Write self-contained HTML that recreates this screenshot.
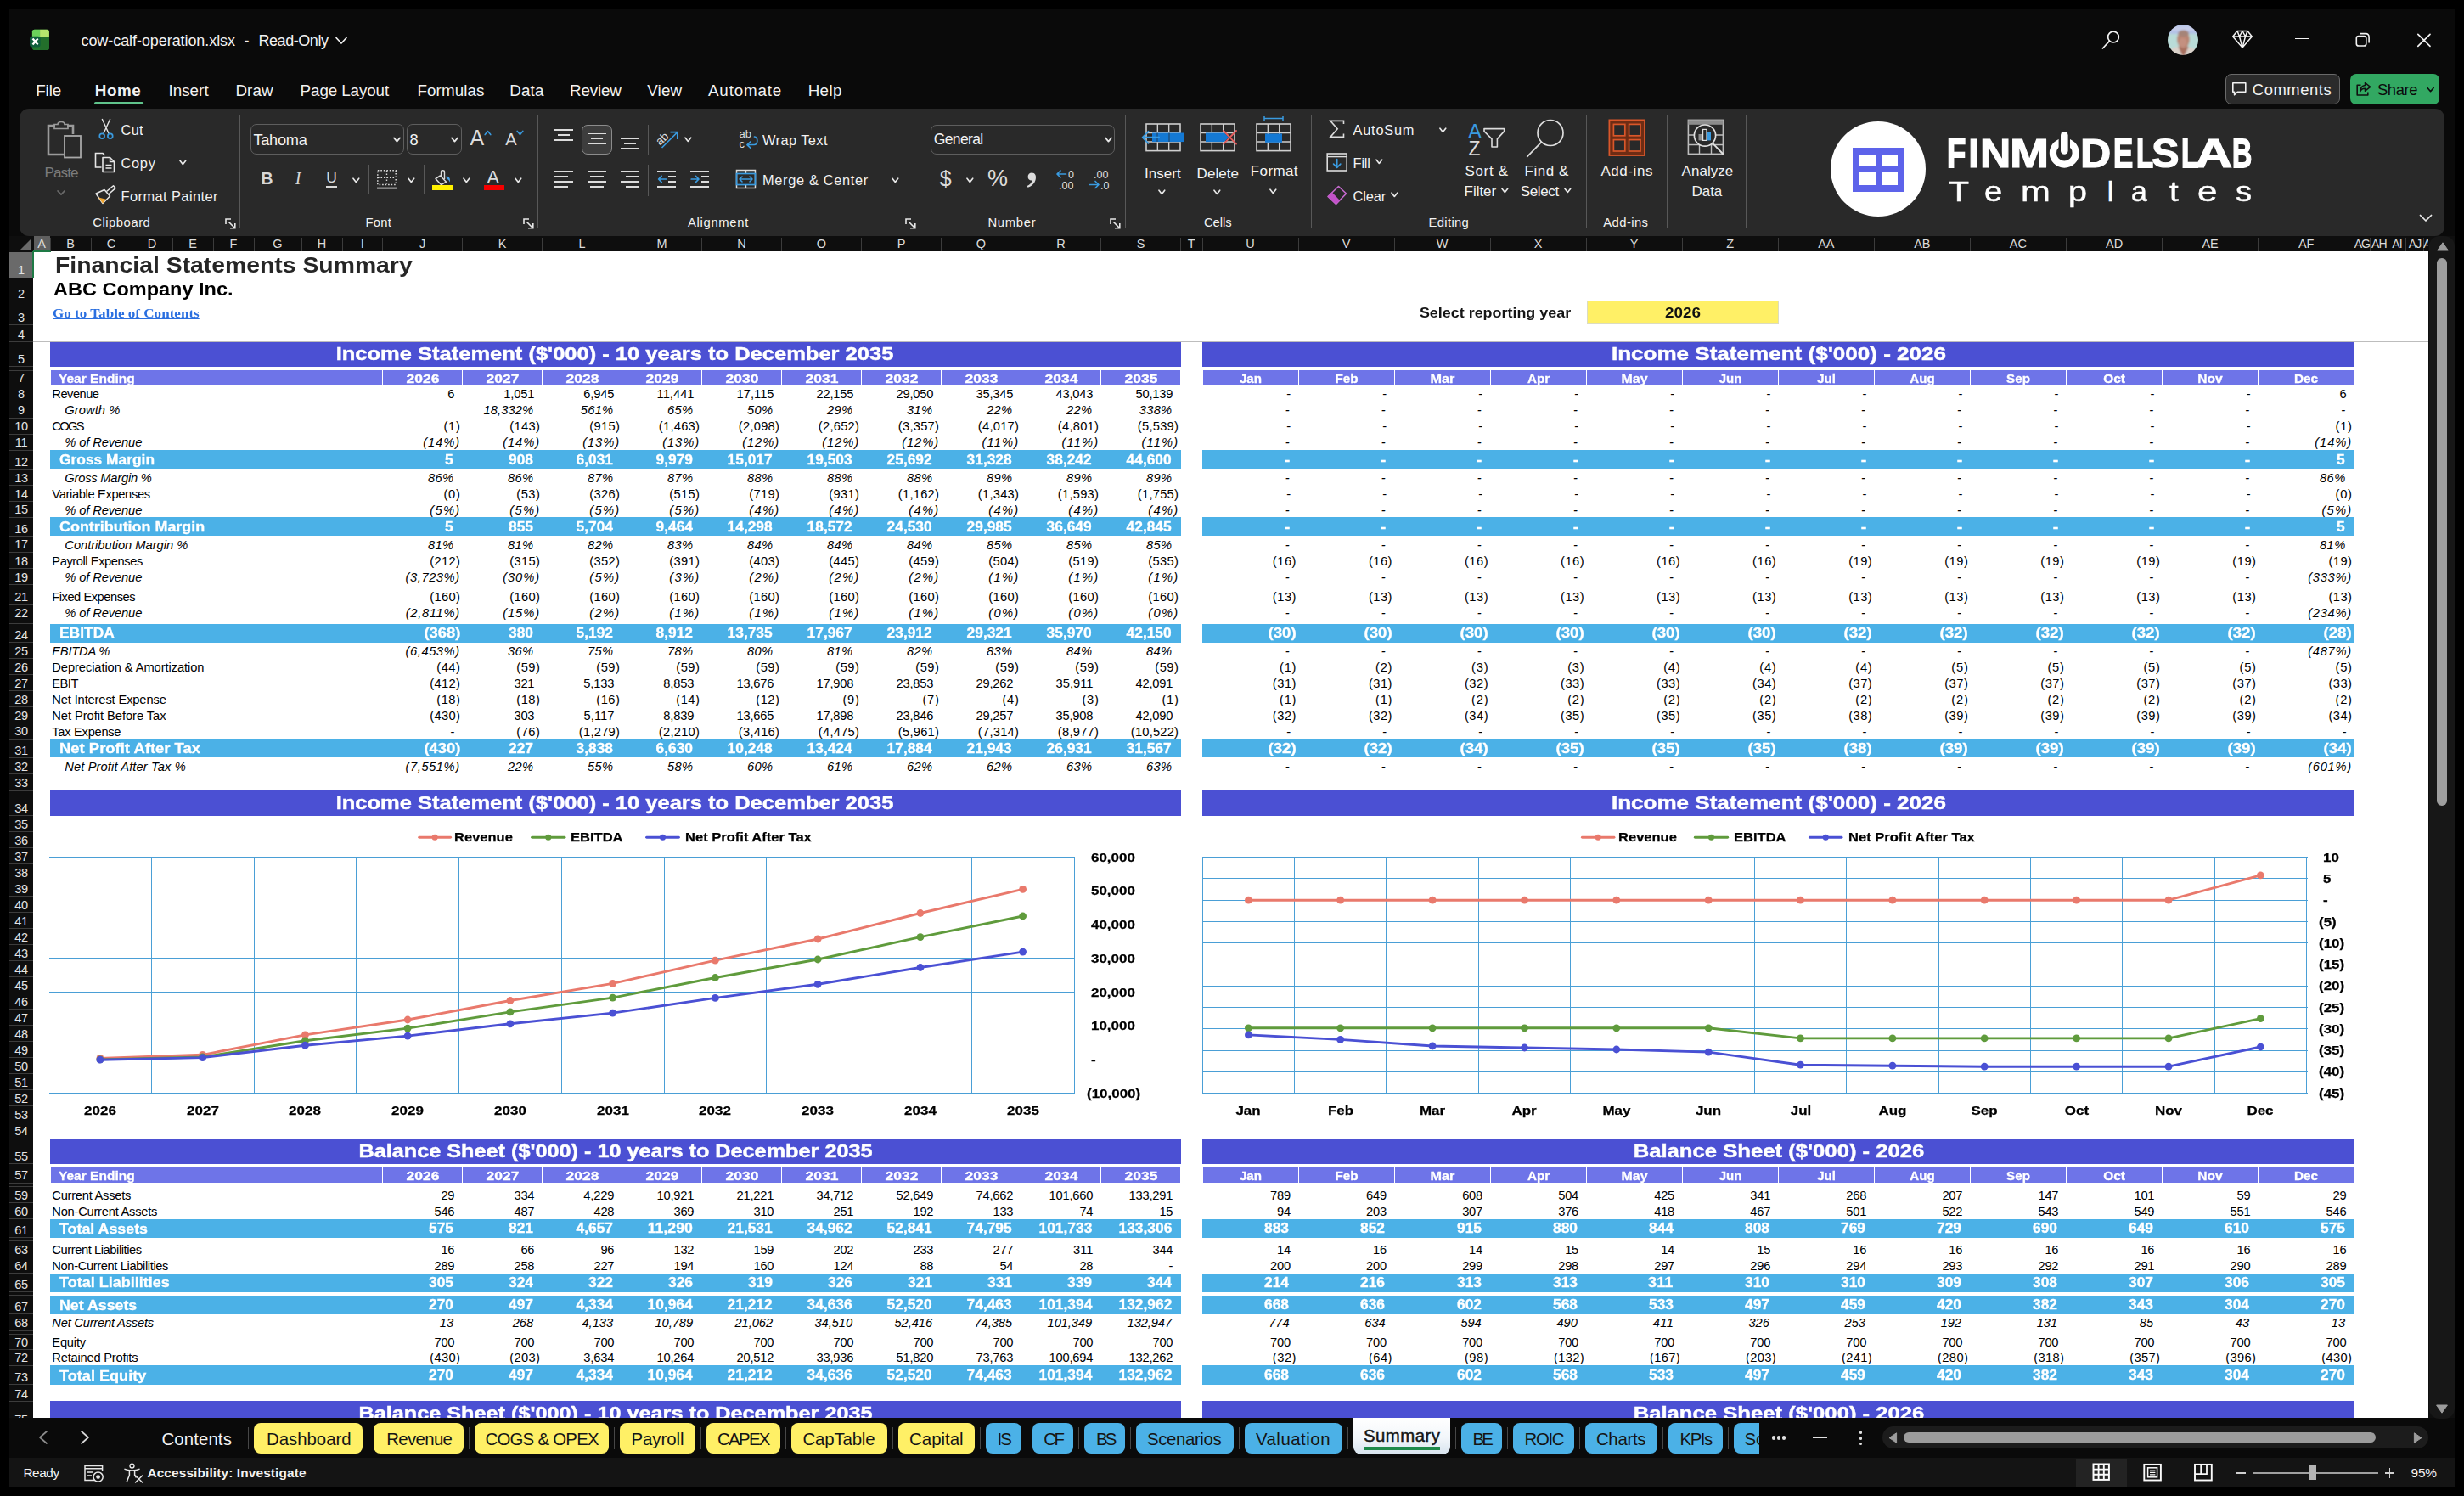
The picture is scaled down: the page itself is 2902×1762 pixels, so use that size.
<!DOCTYPE html><html><head><meta charset="utf-8"><title>x</title><style>
*{box-sizing:border-box}
html,body{margin:0;padding:0}
body{width:2902px;height:1762px;background:#000;position:relative;overflow:hidden;font-family:"Liberation Sans",sans-serif;}
div,span,i,b,u,s{position:absolute;white-space:nowrap;font-style:normal;font-weight:normal;text-decoration:none}
.bx{position:absolute}
.t{font-size:14.7px;line-height:14.7px;color:#000}
.ti{font-size:14.7px;line-height:14.7px;color:#000;font-style:italic}
.tb{font-size:15.6px;line-height:15.6px;color:#fff;font-weight:bold;-webkit-text-stroke:.3px #fff}
.tl{font-size:16.5px;line-height:16.5px;color:#fff;font-weight:bold;-webkit-text-stroke:.3px #fff}
.R{transform-origin:right center}
.L{transform-origin:left center}
.C{transform-origin:center center}
.hd{font-size:15px;line-height:15px;color:#fff;font-weight:bold;-webkit-text-stroke:.3px #fff;transform-origin:center center;text-align:center}
.bn{font-size:21.8px;line-height:21.8px;color:#fff;font-weight:bold;-webkit-text-stroke:.45px #fff;text-align:center;transform-origin:center center}
.rn{font-size:14.5px;line-height:14.5px;color:#e4e4e4;width:28px;left:11px;text-align:center;letter-spacing:-0.3px}
.cl{font-size:14.5px;line-height:14.5px;color:#dcdcdc;text-align:center;top:280.4px}
.ax{font-size:14.5px;line-height:14.5px;color:#000;font-weight:bold;transform:scaleX(1.14);-webkit-text-stroke:.25px #000}
.ui{color:#fff;font-size:18px;line-height:18px}
</style></head><body>
<div style="left:11px;top:11px;width:2880px;height:1740px;background:#0a0a0a;"></div>
<div style="left:39px;top:296px;width:2821px;height:1374px;background:#fff;"></div>
<div style="left:58.5px;top:402.4px;width:1332px;height:29.3px;background:#4b50d3;"></div>
<div style="left:1416px;top:402.4px;width:1356.5px;height:29.3px;background:#4b50d3;"></div>
<div class="bn" style="top:405.95px;left:274.30px;width:900px;text-align:center;transform:scaleX(1.170);">Income Statement ($'000) - 10 years to December 2035</div>
<div class="bn" style="top:405.95px;left:1644.90px;width:900px;text-align:center;transform:scaleX(1.195);">Income Statement ($'000) - 2026</div>
<div style="left:59.5px;top:436.2px;width:390px;height:17.7px;background:#6e74e8;"></div>
<div class="hd" style="top:437.80px;left:69.30px;transform-origin:left center;transform:scaleX(1.034);">Year Ending</div>
<div style="left:451.3px;top:436.2px;width:92.7px;height:17.7px;background:#6e74e8;"></div>
<div class="hd" style="top:437.80px;left:453.00px;width:90px;text-align:center;transform:scaleX(1.164);">2026</div>
<div style="left:545.3px;top:436.2px;width:92.7px;height:17.7px;background:#6e74e8;"></div>
<div class="hd" style="top:437.80px;left:547.00px;width:90px;text-align:center;transform:scaleX(1.164);">2027</div>
<div style="left:639.3px;top:436.2px;width:92.7px;height:17.7px;background:#6e74e8;"></div>
<div class="hd" style="top:437.80px;left:641.00px;width:90px;text-align:center;transform:scaleX(1.164);">2028</div>
<div style="left:733.3px;top:436.2px;width:92.7px;height:17.7px;background:#6e74e8;"></div>
<div class="hd" style="top:437.80px;left:735.00px;width:90px;text-align:center;transform:scaleX(1.164);">2029</div>
<div style="left:827.3px;top:436.2px;width:92.7px;height:17.7px;background:#6e74e8;"></div>
<div class="hd" style="top:437.80px;left:829.00px;width:90px;text-align:center;transform:scaleX(1.164);">2030</div>
<div style="left:921.3px;top:436.2px;width:92.7px;height:17.7px;background:#6e74e8;"></div>
<div class="hd" style="top:437.80px;left:923.00px;width:90px;text-align:center;transform:scaleX(1.164);">2031</div>
<div style="left:1015.3px;top:436.2px;width:92.7px;height:17.7px;background:#6e74e8;"></div>
<div class="hd" style="top:437.80px;left:1017.00px;width:90px;text-align:center;transform:scaleX(1.164);">2032</div>
<div style="left:1109.3px;top:436.2px;width:92.7px;height:17.7px;background:#6e74e8;"></div>
<div class="hd" style="top:437.80px;left:1111.00px;width:90px;text-align:center;transform:scaleX(1.164);">2033</div>
<div style="left:1203.3px;top:436.2px;width:92.7px;height:17.7px;background:#6e74e8;"></div>
<div class="hd" style="top:437.80px;left:1205.00px;width:90px;text-align:center;transform:scaleX(1.164);">2034</div>
<div style="left:1297.3px;top:436.2px;width:92.7px;height:17.7px;background:#6e74e8;"></div>
<div class="hd" style="top:437.80px;left:1299.00px;width:90px;text-align:center;transform:scaleX(1.164);">2035</div>
<div style="left:1416.8px;top:436.2px;width:111.75px;height:17.7px;background:#6e74e8;"></div>
<div class="hd" style="top:437.80px;left:1422.53px;width:100px;text-align:center;transform:scaleX(1.009);">Jan</div>
<div style="left:1529.85px;top:436.2px;width:111.75px;height:17.7px;background:#6e74e8;"></div>
<div class="hd" style="top:437.80px;left:1535.57px;width:100px;text-align:center;transform:scaleX(1.016);">Feb</div>
<div style="left:1642.9px;top:436.2px;width:111.75px;height:17.7px;background:#6e74e8;"></div>
<div class="hd" style="top:437.80px;left:1648.62px;width:100px;text-align:center;transform:scaleX(1.083);">Mar</div>
<div style="left:1755.95px;top:436.2px;width:111.75px;height:17.7px;background:#6e74e8;"></div>
<div class="hd" style="top:437.80px;left:1761.67px;width:100px;text-align:center;transform:scaleX(1.015);">Apr</div>
<div style="left:1869px;top:436.2px;width:111.75px;height:17.7px;background:#6e74e8;"></div>
<div class="hd" style="top:437.80px;left:1874.72px;width:100px;text-align:center;transform:scaleX(1.063);">May</div>
<div style="left:1982.05px;top:436.2px;width:111.75px;height:17.7px;background:#6e74e8;"></div>
<div class="hd" style="top:437.80px;left:1987.77px;width:100px;text-align:center;transform:scaleX(1.001);">Jun</div>
<div style="left:2095.1px;top:436.2px;width:111.75px;height:17.7px;background:#6e74e8;"></div>
<div class="hd" style="top:437.80px;left:2100.82px;width:100px;text-align:center;transform:scaleX(0.998);">Jul</div>
<div style="left:2208.15px;top:436.2px;width:111.75px;height:17.7px;background:#6e74e8;"></div>
<div class="hd" style="top:437.80px;left:2213.88px;width:100px;text-align:center;transform:scaleX(1.005);">Aug</div>
<div style="left:2321.2px;top:436.2px;width:111.75px;height:17.7px;background:#6e74e8;"></div>
<div class="hd" style="top:437.80px;left:2326.93px;width:100px;text-align:center;transform:scaleX(1.012);">Sep</div>
<div style="left:2434.25px;top:436.2px;width:111.75px;height:17.7px;background:#6e74e8;"></div>
<div class="hd" style="top:437.80px;left:2439.98px;width:100px;text-align:center;transform:scaleX(1.028);">Oct</div>
<div style="left:2547.3px;top:436.2px;width:111.75px;height:17.7px;background:#6e74e8;"></div>
<div class="hd" style="top:437.80px;left:2553.03px;width:100px;text-align:center;transform:scaleX(1.041);">Nov</div>
<div style="left:2660.35px;top:436.2px;width:111.75px;height:17.7px;background:#6e74e8;"></div>
<div class="hd" style="top:437.80px;left:2666.08px;width:100px;text-align:center;transform:scaleX(1.024);">Dec</div>
<div class="t" style="top:457.26px;left:61.30px;letter-spacing:-0.51px;">Revenue</div>
<div class="t" style="top:457.26px;right:2366.76px;letter-spacing:-0.26px;">6</div>
<div class="t" style="top:457.26px;right:2272.64px;letter-spacing:-0.14px;">1,051</div>
<div class="t" style="top:457.26px;right:2178.64px;letter-spacing:-0.14px;">6,945</div>
<div class="t" style="top:457.26px;right:2084.48px;letter-spacing:0.02px;">11,441</div>
<div class="t" style="top:457.26px;right:1990.48px;letter-spacing:0.02px;">17,115</div>
<div class="t" style="top:457.26px;right:1896.66px;letter-spacing:-0.16px;">22,155</div>
<div class="t" style="top:457.26px;right:1802.66px;letter-spacing:-0.16px;">29,050</div>
<div class="t" style="top:457.26px;right:1708.66px;letter-spacing:-0.16px;">35,345</div>
<div class="t" style="top:457.26px;right:1614.66px;letter-spacing:-0.16px;">43,043</div>
<div class="t" style="top:457.26px;right:1520.66px;letter-spacing:-0.16px;">50,139</div>
<div class="t" style="top:457.26px;right:1381.58px;letter-spacing:0.37px;">-</div>
<div class="t" style="top:457.26px;right:1268.53px;letter-spacing:0.37px;">-</div>
<div class="t" style="top:457.26px;right:1155.48px;letter-spacing:0.37px;">-</div>
<div class="t" style="top:457.26px;right:1042.43px;letter-spacing:0.37px;">-</div>
<div class="t" style="top:457.26px;right:929.38px;letter-spacing:0.37px;">-</div>
<div class="t" style="top:457.26px;right:816.33px;letter-spacing:0.37px;">-</div>
<div class="t" style="top:457.26px;right:703.28px;letter-spacing:0.37px;">-</div>
<div class="t" style="top:457.26px;right:590.23px;letter-spacing:0.37px;">-</div>
<div class="t" style="top:457.26px;right:477.18px;letter-spacing:0.37px;">-</div>
<div class="t" style="top:457.26px;right:364.13px;letter-spacing:0.37px;">-</div>
<div class="t" style="top:457.26px;right:251.08px;letter-spacing:0.37px;">-</div>
<div class="t" style="top:457.26px;right:138.66px;letter-spacing:-0.26px;">6</div>
<div class="ti" style="top:476.26px;left:76.30px;letter-spacing:0.08px;">Growth %</div>
<div class="ti" style="top:476.26px;right:2273.80px;letter-spacing:0.10px;">18,332%</div>
<div class="ti" style="top:476.26px;right:2179.67px;letter-spacing:0.23px;">561%</div>
<div class="ti" style="top:476.26px;right:2085.51px;letter-spacing:0.39px;">65%</div>
<div class="ti" style="top:476.26px;right:1991.51px;letter-spacing:0.39px;">50%</div>
<div class="ti" style="top:476.26px;right:1897.51px;letter-spacing:0.39px;">29%</div>
<div class="ti" style="top:476.26px;right:1803.51px;letter-spacing:0.39px;">31%</div>
<div class="ti" style="top:476.26px;right:1709.51px;letter-spacing:0.39px;">22%</div>
<div class="ti" style="top:476.26px;right:1615.51px;letter-spacing:0.39px;">22%</div>
<div class="ti" style="top:476.26px;right:1521.67px;letter-spacing:0.23px;">338%</div>
<div class="ti" style="top:476.26px;right:1382.38px;letter-spacing:0.97px;">-</div>
<div class="ti" style="top:476.26px;right:1269.33px;letter-spacing:0.97px;">-</div>
<div class="ti" style="top:476.26px;right:1156.28px;letter-spacing:0.97px;">-</div>
<div class="ti" style="top:476.26px;right:1043.23px;letter-spacing:0.97px;">-</div>
<div class="ti" style="top:476.26px;right:930.18px;letter-spacing:0.97px;">-</div>
<div class="ti" style="top:476.26px;right:817.13px;letter-spacing:0.97px;">-</div>
<div class="ti" style="top:476.26px;right:704.08px;letter-spacing:0.97px;">-</div>
<div class="ti" style="top:476.26px;right:591.03px;letter-spacing:0.97px;">-</div>
<div class="ti" style="top:476.26px;right:477.98px;letter-spacing:0.97px;">-</div>
<div class="ti" style="top:476.26px;right:364.93px;letter-spacing:0.97px;">-</div>
<div class="ti" style="top:476.26px;right:251.88px;letter-spacing:0.97px;">-</div>
<div class="ti" style="top:476.26px;right:138.83px;letter-spacing:0.97px;">-</div>
<div class="t" style="top:495.26px;left:61.30px;letter-spacing:-1.64px;">COGS</div>
<div class="t" style="top:495.26px;right:2359.34px;letter-spacing:0.76px;">(1)</div>
<div class="t" style="top:495.26px;right:2265.75px;letter-spacing:0.35px;">(143)</div>
<div class="t" style="top:495.26px;right:2171.75px;letter-spacing:0.35px;">(915)</div>
<div class="t" style="top:495.26px;right:2077.84px;letter-spacing:0.26px;">(1,463)</div>
<div class="t" style="top:495.26px;right:1983.84px;letter-spacing:0.26px;">(2,098)</div>
<div class="t" style="top:495.26px;right:1889.84px;letter-spacing:0.26px;">(2,652)</div>
<div class="t" style="top:495.26px;right:1795.84px;letter-spacing:0.26px;">(3,357)</div>
<div class="t" style="top:495.26px;right:1701.84px;letter-spacing:0.26px;">(4,017)</div>
<div class="t" style="top:495.26px;right:1607.84px;letter-spacing:0.26px;">(4,801)</div>
<div class="t" style="top:495.26px;right:1513.84px;letter-spacing:0.26px;">(5,539)</div>
<div class="t" style="top:495.26px;right:1381.58px;letter-spacing:0.37px;">-</div>
<div class="t" style="top:495.26px;right:1268.53px;letter-spacing:0.37px;">-</div>
<div class="t" style="top:495.26px;right:1155.48px;letter-spacing:0.37px;">-</div>
<div class="t" style="top:495.26px;right:1042.43px;letter-spacing:0.37px;">-</div>
<div class="t" style="top:495.26px;right:929.38px;letter-spacing:0.37px;">-</div>
<div class="t" style="top:495.26px;right:816.33px;letter-spacing:0.37px;">-</div>
<div class="t" style="top:495.26px;right:703.28px;letter-spacing:0.37px;">-</div>
<div class="t" style="top:495.26px;right:590.23px;letter-spacing:0.37px;">-</div>
<div class="t" style="top:495.26px;right:477.18px;letter-spacing:0.37px;">-</div>
<div class="t" style="top:495.26px;right:364.13px;letter-spacing:0.37px;">-</div>
<div class="t" style="top:495.26px;right:251.08px;letter-spacing:0.37px;">-</div>
<div class="t" style="top:495.26px;right:131.24px;letter-spacing:0.76px;">(1)</div>
<div class="ti" style="top:514.26px;left:76.30px;letter-spacing:-0.11px;">% of Revenue</div>
<div class="ti" style="top:514.26px;right:2359.96px;letter-spacing:0.94px;">(14%)</div>
<div class="ti" style="top:514.26px;right:2265.96px;letter-spacing:0.94px;">(14%)</div>
<div class="ti" style="top:514.26px;right:2171.96px;letter-spacing:0.94px;">(13%)</div>
<div class="ti" style="top:514.26px;right:2077.96px;letter-spacing:0.94px;">(13%)</div>
<div class="ti" style="top:514.26px;right:1983.96px;letter-spacing:0.94px;">(12%)</div>
<div class="ti" style="top:514.26px;right:1889.96px;letter-spacing:0.94px;">(12%)</div>
<div class="ti" style="top:514.26px;right:1795.96px;letter-spacing:0.94px;">(12%)</div>
<div class="ti" style="top:514.26px;right:1701.74px;letter-spacing:1.16px;">(11%)</div>
<div class="ti" style="top:514.26px;right:1607.74px;letter-spacing:1.16px;">(11%)</div>
<div class="ti" style="top:514.26px;right:1513.74px;letter-spacing:1.16px;">(11%)</div>
<div class="ti" style="top:514.26px;right:1382.38px;letter-spacing:0.97px;">-</div>
<div class="ti" style="top:514.26px;right:1269.33px;letter-spacing:0.97px;">-</div>
<div class="ti" style="top:514.26px;right:1156.28px;letter-spacing:0.97px;">-</div>
<div class="ti" style="top:514.26px;right:1043.23px;letter-spacing:0.97px;">-</div>
<div class="ti" style="top:514.26px;right:930.18px;letter-spacing:0.97px;">-</div>
<div class="ti" style="top:514.26px;right:817.13px;letter-spacing:0.97px;">-</div>
<div class="ti" style="top:514.26px;right:704.08px;letter-spacing:0.97px;">-</div>
<div class="ti" style="top:514.26px;right:591.03px;letter-spacing:0.97px;">-</div>
<div class="ti" style="top:514.26px;right:477.98px;letter-spacing:0.97px;">-</div>
<div class="ti" style="top:514.26px;right:364.93px;letter-spacing:0.97px;">-</div>
<div class="ti" style="top:514.26px;right:251.88px;letter-spacing:0.97px;">-</div>
<div class="ti" style="top:514.26px;right:131.86px;letter-spacing:0.94px;">(14%)</div>
<div style="left:58.5px;top:530px;width:1332px;height:22.4px;background:#4bb1e7;"></div>
<div style="left:1416px;top:530px;width:1356.5px;height:22.4px;background:#4bb1e7;"></div>
<div class="tl L" style="top:533.23px;left:70.40px;transform:scaleX(1.053);">Gross Margin</div>
<div class="tb R" style="top:533.99px;right:2368.10px;transform:scaleX(1.116);">5</div>
<div class="tb R" style="top:533.99px;right:2274.10px;transform:scaleX(1.116);">908</div>
<div class="tb R" style="top:533.99px;right:2180.10px;transform:scaleX(1.114);">6,031</div>
<div class="tb R" style="top:533.99px;right:2086.10px;transform:scaleX(1.114);">9,979</div>
<div class="tb R" style="top:533.99px;right:1992.10px;transform:scaleX(1.114);">15,017</div>
<div class="tb R" style="top:533.99px;right:1898.10px;transform:scaleX(1.114);">19,503</div>
<div class="tb R" style="top:533.99px;right:1804.10px;transform:scaleX(1.114);">25,692</div>
<div class="tb R" style="top:533.99px;right:1710.10px;transform:scaleX(1.114);">31,328</div>
<div class="tb R" style="top:533.99px;right:1616.10px;transform:scaleX(1.114);">38,242</div>
<div class="tb R" style="top:533.99px;right:1522.10px;transform:scaleX(1.114);">44,600</div>
<div class="tb R" style="top:533.99px;right:1382.45px;transform:scaleX(1.258);">-</div>
<div class="tb R" style="top:533.99px;right:1269.40px;transform:scaleX(1.258);">-</div>
<div class="tb R" style="top:533.99px;right:1156.35px;transform:scaleX(1.258);">-</div>
<div class="tb R" style="top:533.99px;right:1043.30px;transform:scaleX(1.258);">-</div>
<div class="tb R" style="top:533.99px;right:930.25px;transform:scaleX(1.258);">-</div>
<div class="tb R" style="top:533.99px;right:817.20px;transform:scaleX(1.258);">-</div>
<div class="tb R" style="top:533.99px;right:704.15px;transform:scaleX(1.258);">-</div>
<div class="tb R" style="top:533.99px;right:591.10px;transform:scaleX(1.258);">-</div>
<div class="tb R" style="top:533.99px;right:478.05px;transform:scaleX(1.258);">-</div>
<div class="tb R" style="top:533.99px;right:365.00px;transform:scaleX(1.258);">-</div>
<div class="tb R" style="top:533.99px;right:251.95px;transform:scaleX(1.258);">-</div>
<div class="tb R" style="top:533.99px;right:140.00px;transform:scaleX(1.116);">5</div>
<div class="ti" style="top:555.76px;left:76.30px;letter-spacing:-0.21px;">Gross Margin %</div>
<div class="ti" style="top:555.76px;right:2367.51px;letter-spacing:0.39px;">86%</div>
<div class="ti" style="top:555.76px;right:2273.51px;letter-spacing:0.39px;">86%</div>
<div class="ti" style="top:555.76px;right:2179.51px;letter-spacing:0.39px;">87%</div>
<div class="ti" style="top:555.76px;right:2085.51px;letter-spacing:0.39px;">87%</div>
<div class="ti" style="top:555.76px;right:1991.51px;letter-spacing:0.39px;">88%</div>
<div class="ti" style="top:555.76px;right:1897.51px;letter-spacing:0.39px;">88%</div>
<div class="ti" style="top:555.76px;right:1803.51px;letter-spacing:0.39px;">88%</div>
<div class="ti" style="top:555.76px;right:1709.51px;letter-spacing:0.39px;">89%</div>
<div class="ti" style="top:555.76px;right:1615.51px;letter-spacing:0.39px;">89%</div>
<div class="ti" style="top:555.76px;right:1521.51px;letter-spacing:0.39px;">89%</div>
<div class="ti" style="top:555.76px;right:1382.38px;letter-spacing:0.97px;">-</div>
<div class="ti" style="top:555.76px;right:1269.33px;letter-spacing:0.97px;">-</div>
<div class="ti" style="top:555.76px;right:1156.28px;letter-spacing:0.97px;">-</div>
<div class="ti" style="top:555.76px;right:1043.23px;letter-spacing:0.97px;">-</div>
<div class="ti" style="top:555.76px;right:930.18px;letter-spacing:0.97px;">-</div>
<div class="ti" style="top:555.76px;right:817.13px;letter-spacing:0.97px;">-</div>
<div class="ti" style="top:555.76px;right:704.08px;letter-spacing:0.97px;">-</div>
<div class="ti" style="top:555.76px;right:591.03px;letter-spacing:0.97px;">-</div>
<div class="ti" style="top:555.76px;right:477.98px;letter-spacing:0.97px;">-</div>
<div class="ti" style="top:555.76px;right:364.93px;letter-spacing:0.97px;">-</div>
<div class="ti" style="top:555.76px;right:251.88px;letter-spacing:0.97px;">-</div>
<div class="ti" style="top:555.76px;right:139.41px;letter-spacing:0.39px;">86%</div>
<div class="t" style="top:574.76px;left:61.30px;letter-spacing:-0.35px;">Variable Expenses</div>
<div class="t" style="top:574.76px;right:2359.34px;letter-spacing:0.76px;">(0)</div>
<div class="t" style="top:574.76px;right:2265.60px;letter-spacing:0.50px;">(53)</div>
<div class="t" style="top:574.76px;right:2171.75px;letter-spacing:0.35px;">(326)</div>
<div class="t" style="top:574.76px;right:2077.75px;letter-spacing:0.35px;">(515)</div>
<div class="t" style="top:574.76px;right:1983.75px;letter-spacing:0.35px;">(719)</div>
<div class="t" style="top:574.76px;right:1889.75px;letter-spacing:0.35px;">(931)</div>
<div class="t" style="top:574.76px;right:1795.84px;letter-spacing:0.26px;">(1,162)</div>
<div class="t" style="top:574.76px;right:1701.84px;letter-spacing:0.26px;">(1,343)</div>
<div class="t" style="top:574.76px;right:1607.84px;letter-spacing:0.26px;">(1,593)</div>
<div class="t" style="top:574.76px;right:1513.84px;letter-spacing:0.26px;">(1,755)</div>
<div class="t" style="top:574.76px;right:1381.58px;letter-spacing:0.37px;">-</div>
<div class="t" style="top:574.76px;right:1268.53px;letter-spacing:0.37px;">-</div>
<div class="t" style="top:574.76px;right:1155.48px;letter-spacing:0.37px;">-</div>
<div class="t" style="top:574.76px;right:1042.43px;letter-spacing:0.37px;">-</div>
<div class="t" style="top:574.76px;right:929.38px;letter-spacing:0.37px;">-</div>
<div class="t" style="top:574.76px;right:816.33px;letter-spacing:0.37px;">-</div>
<div class="t" style="top:574.76px;right:703.28px;letter-spacing:0.37px;">-</div>
<div class="t" style="top:574.76px;right:590.23px;letter-spacing:0.37px;">-</div>
<div class="t" style="top:574.76px;right:477.18px;letter-spacing:0.37px;">-</div>
<div class="t" style="top:574.76px;right:364.13px;letter-spacing:0.37px;">-</div>
<div class="t" style="top:574.76px;right:251.08px;letter-spacing:0.37px;">-</div>
<div class="t" style="top:574.76px;right:131.24px;letter-spacing:0.76px;">(0)</div>
<div class="ti" style="top:593.56px;left:76.30px;letter-spacing:-0.11px;">% of Revenue</div>
<div class="ti" style="top:593.56px;right:2359.66px;letter-spacing:1.24px;">(5%)</div>
<div class="ti" style="top:593.56px;right:2265.66px;letter-spacing:1.24px;">(5%)</div>
<div class="ti" style="top:593.56px;right:2171.66px;letter-spacing:1.24px;">(5%)</div>
<div class="ti" style="top:593.56px;right:2077.66px;letter-spacing:1.24px;">(5%)</div>
<div class="ti" style="top:593.56px;right:1983.66px;letter-spacing:1.24px;">(4%)</div>
<div class="ti" style="top:593.56px;right:1889.66px;letter-spacing:1.24px;">(4%)</div>
<div class="ti" style="top:593.56px;right:1795.66px;letter-spacing:1.24px;">(4%)</div>
<div class="ti" style="top:593.56px;right:1701.66px;letter-spacing:1.24px;">(4%)</div>
<div class="ti" style="top:593.56px;right:1607.66px;letter-spacing:1.24px;">(4%)</div>
<div class="ti" style="top:593.56px;right:1513.66px;letter-spacing:1.24px;">(4%)</div>
<div class="ti" style="top:593.56px;right:1382.38px;letter-spacing:0.97px;">-</div>
<div class="ti" style="top:593.56px;right:1269.33px;letter-spacing:0.97px;">-</div>
<div class="ti" style="top:593.56px;right:1156.28px;letter-spacing:0.97px;">-</div>
<div class="ti" style="top:593.56px;right:1043.23px;letter-spacing:0.97px;">-</div>
<div class="ti" style="top:593.56px;right:930.18px;letter-spacing:0.97px;">-</div>
<div class="ti" style="top:593.56px;right:817.13px;letter-spacing:0.97px;">-</div>
<div class="ti" style="top:593.56px;right:704.08px;letter-spacing:0.97px;">-</div>
<div class="ti" style="top:593.56px;right:591.03px;letter-spacing:0.97px;">-</div>
<div class="ti" style="top:593.56px;right:477.98px;letter-spacing:0.97px;">-</div>
<div class="ti" style="top:593.56px;right:364.93px;letter-spacing:0.97px;">-</div>
<div class="ti" style="top:593.56px;right:251.88px;letter-spacing:0.97px;">-</div>
<div class="ti" style="top:593.56px;right:131.56px;letter-spacing:1.24px;">(5%)</div>
<div style="left:58.5px;top:609.3px;width:1332px;height:22.2px;background:#4bb1e7;"></div>
<div style="left:1416px;top:609.3px;width:1356.5px;height:22.2px;background:#4bb1e7;"></div>
<div class="tl L" style="top:612.33px;left:70.40px;transform:scaleX(1.086);">Contribution Margin</div>
<div class="tb R" style="top:613.09px;right:2368.10px;transform:scaleX(1.116);">5</div>
<div class="tb R" style="top:613.09px;right:2274.10px;transform:scaleX(1.116);">855</div>
<div class="tb R" style="top:613.09px;right:2180.10px;transform:scaleX(1.114);">5,704</div>
<div class="tb R" style="top:613.09px;right:2086.10px;transform:scaleX(1.114);">9,464</div>
<div class="tb R" style="top:613.09px;right:1992.10px;transform:scaleX(1.114);">14,298</div>
<div class="tb R" style="top:613.09px;right:1898.10px;transform:scaleX(1.114);">18,572</div>
<div class="tb R" style="top:613.09px;right:1804.10px;transform:scaleX(1.114);">24,530</div>
<div class="tb R" style="top:613.09px;right:1710.10px;transform:scaleX(1.114);">29,985</div>
<div class="tb R" style="top:613.09px;right:1616.10px;transform:scaleX(1.114);">36,649</div>
<div class="tb R" style="top:613.09px;right:1522.10px;transform:scaleX(1.114);">42,845</div>
<div class="tb R" style="top:613.09px;right:1382.45px;transform:scaleX(1.258);">-</div>
<div class="tb R" style="top:613.09px;right:1269.40px;transform:scaleX(1.258);">-</div>
<div class="tb R" style="top:613.09px;right:1156.35px;transform:scaleX(1.258);">-</div>
<div class="tb R" style="top:613.09px;right:1043.30px;transform:scaleX(1.258);">-</div>
<div class="tb R" style="top:613.09px;right:930.25px;transform:scaleX(1.258);">-</div>
<div class="tb R" style="top:613.09px;right:817.20px;transform:scaleX(1.258);">-</div>
<div class="tb R" style="top:613.09px;right:704.15px;transform:scaleX(1.258);">-</div>
<div class="tb R" style="top:613.09px;right:591.10px;transform:scaleX(1.258);">-</div>
<div class="tb R" style="top:613.09px;right:478.05px;transform:scaleX(1.258);">-</div>
<div class="tb R" style="top:613.09px;right:365.00px;transform:scaleX(1.258);">-</div>
<div class="tb R" style="top:613.09px;right:251.95px;transform:scaleX(1.258);">-</div>
<div class="tb R" style="top:613.09px;right:140.00px;transform:scaleX(1.116);">5</div>
<div class="ti" style="top:634.56px;left:76.30px;letter-spacing:-0.02px;">Contribution Margin %</div>
<div class="ti" style="top:634.56px;right:2367.51px;letter-spacing:0.39px;">81%</div>
<div class="ti" style="top:634.56px;right:2273.51px;letter-spacing:0.39px;">81%</div>
<div class="ti" style="top:634.56px;right:2179.51px;letter-spacing:0.39px;">82%</div>
<div class="ti" style="top:634.56px;right:2085.51px;letter-spacing:0.39px;">83%</div>
<div class="ti" style="top:634.56px;right:1991.51px;letter-spacing:0.39px;">84%</div>
<div class="ti" style="top:634.56px;right:1897.51px;letter-spacing:0.39px;">84%</div>
<div class="ti" style="top:634.56px;right:1803.51px;letter-spacing:0.39px;">84%</div>
<div class="ti" style="top:634.56px;right:1709.51px;letter-spacing:0.39px;">85%</div>
<div class="ti" style="top:634.56px;right:1615.51px;letter-spacing:0.39px;">85%</div>
<div class="ti" style="top:634.56px;right:1521.51px;letter-spacing:0.39px;">85%</div>
<div class="ti" style="top:634.56px;right:1382.38px;letter-spacing:0.97px;">-</div>
<div class="ti" style="top:634.56px;right:1269.33px;letter-spacing:0.97px;">-</div>
<div class="ti" style="top:634.56px;right:1156.28px;letter-spacing:0.97px;">-</div>
<div class="ti" style="top:634.56px;right:1043.23px;letter-spacing:0.97px;">-</div>
<div class="ti" style="top:634.56px;right:930.18px;letter-spacing:0.97px;">-</div>
<div class="ti" style="top:634.56px;right:817.13px;letter-spacing:0.97px;">-</div>
<div class="ti" style="top:634.56px;right:704.08px;letter-spacing:0.97px;">-</div>
<div class="ti" style="top:634.56px;right:591.03px;letter-spacing:0.97px;">-</div>
<div class="ti" style="top:634.56px;right:477.98px;letter-spacing:0.97px;">-</div>
<div class="ti" style="top:634.56px;right:364.93px;letter-spacing:0.97px;">-</div>
<div class="ti" style="top:634.56px;right:251.88px;letter-spacing:0.97px;">-</div>
<div class="ti" style="top:634.56px;right:139.41px;letter-spacing:0.39px;">81%</div>
<div class="t" style="top:653.66px;left:61.30px;letter-spacing:-0.43px;">Payroll Expenses</div>
<div class="t" style="top:653.66px;right:2359.75px;letter-spacing:0.35px;">(212)</div>
<div class="t" style="top:653.66px;right:2265.75px;letter-spacing:0.35px;">(315)</div>
<div class="t" style="top:653.66px;right:2171.75px;letter-spacing:0.35px;">(352)</div>
<div class="t" style="top:653.66px;right:2077.75px;letter-spacing:0.35px;">(391)</div>
<div class="t" style="top:653.66px;right:1983.75px;letter-spacing:0.35px;">(403)</div>
<div class="t" style="top:653.66px;right:1889.75px;letter-spacing:0.35px;">(445)</div>
<div class="t" style="top:653.66px;right:1795.75px;letter-spacing:0.35px;">(459)</div>
<div class="t" style="top:653.66px;right:1701.75px;letter-spacing:0.35px;">(504)</div>
<div class="t" style="top:653.66px;right:1607.75px;letter-spacing:0.35px;">(519)</div>
<div class="t" style="top:653.66px;right:1513.75px;letter-spacing:0.35px;">(535)</div>
<div class="t" style="top:653.66px;right:1375.05px;letter-spacing:0.50px;">(16)</div>
<div class="t" style="top:653.66px;right:1262.00px;letter-spacing:0.50px;">(16)</div>
<div class="t" style="top:653.66px;right:1148.95px;letter-spacing:0.50px;">(16)</div>
<div class="t" style="top:653.66px;right:1035.90px;letter-spacing:0.50px;">(16)</div>
<div class="t" style="top:653.66px;right:922.85px;letter-spacing:0.50px;">(16)</div>
<div class="t" style="top:653.66px;right:809.80px;letter-spacing:0.50px;">(16)</div>
<div class="t" style="top:653.66px;right:696.75px;letter-spacing:0.50px;">(19)</div>
<div class="t" style="top:653.66px;right:583.70px;letter-spacing:0.50px;">(19)</div>
<div class="t" style="top:653.66px;right:470.65px;letter-spacing:0.50px;">(19)</div>
<div class="t" style="top:653.66px;right:357.60px;letter-spacing:0.50px;">(19)</div>
<div class="t" style="top:653.66px;right:244.55px;letter-spacing:0.50px;">(19)</div>
<div class="t" style="top:653.66px;right:131.50px;letter-spacing:0.50px;">(19)</div>
<div class="ti" style="top:672.66px;left:76.30px;letter-spacing:-0.11px;">% of Revenue</div>
<div class="ti" style="top:672.66px;right:2360.34px;letter-spacing:0.56px;">(3,723%)</div>
<div class="ti" style="top:672.66px;right:2265.96px;letter-spacing:0.94px;">(30%)</div>
<div class="ti" style="top:672.66px;right:2171.66px;letter-spacing:1.24px;">(5%)</div>
<div class="ti" style="top:672.66px;right:2077.66px;letter-spacing:1.24px;">(3%)</div>
<div class="ti" style="top:672.66px;right:1983.66px;letter-spacing:1.24px;">(2%)</div>
<div class="ti" style="top:672.66px;right:1889.66px;letter-spacing:1.24px;">(2%)</div>
<div class="ti" style="top:672.66px;right:1795.66px;letter-spacing:1.24px;">(2%)</div>
<div class="ti" style="top:672.66px;right:1701.66px;letter-spacing:1.24px;">(1%)</div>
<div class="ti" style="top:672.66px;right:1607.66px;letter-spacing:1.24px;">(1%)</div>
<div class="ti" style="top:672.66px;right:1513.66px;letter-spacing:1.24px;">(1%)</div>
<div class="ti" style="top:672.66px;right:1382.38px;letter-spacing:0.97px;">-</div>
<div class="ti" style="top:672.66px;right:1269.33px;letter-spacing:0.97px;">-</div>
<div class="ti" style="top:672.66px;right:1156.28px;letter-spacing:0.97px;">-</div>
<div class="ti" style="top:672.66px;right:1043.23px;letter-spacing:0.97px;">-</div>
<div class="ti" style="top:672.66px;right:930.18px;letter-spacing:0.97px;">-</div>
<div class="ti" style="top:672.66px;right:817.13px;letter-spacing:0.97px;">-</div>
<div class="ti" style="top:672.66px;right:704.08px;letter-spacing:0.97px;">-</div>
<div class="ti" style="top:672.66px;right:591.03px;letter-spacing:0.97px;">-</div>
<div class="ti" style="top:672.66px;right:477.98px;letter-spacing:0.97px;">-</div>
<div class="ti" style="top:672.66px;right:364.93px;letter-spacing:0.97px;">-</div>
<div class="ti" style="top:672.66px;right:251.88px;letter-spacing:0.97px;">-</div>
<div class="ti" style="top:672.66px;right:132.06px;letter-spacing:0.74px;">(333%)</div>
<div class="t" style="top:696.16px;left:61.30px;letter-spacing:-0.48px;">Fixed Expenses</div>
<div class="t" style="top:696.16px;right:2359.75px;letter-spacing:0.35px;">(160)</div>
<div class="t" style="top:696.16px;right:2265.75px;letter-spacing:0.35px;">(160)</div>
<div class="t" style="top:696.16px;right:2171.75px;letter-spacing:0.35px;">(160)</div>
<div class="t" style="top:696.16px;right:2077.75px;letter-spacing:0.35px;">(160)</div>
<div class="t" style="top:696.16px;right:1983.75px;letter-spacing:0.35px;">(160)</div>
<div class="t" style="top:696.16px;right:1889.75px;letter-spacing:0.35px;">(160)</div>
<div class="t" style="top:696.16px;right:1795.75px;letter-spacing:0.35px;">(160)</div>
<div class="t" style="top:696.16px;right:1701.75px;letter-spacing:0.35px;">(160)</div>
<div class="t" style="top:696.16px;right:1607.75px;letter-spacing:0.35px;">(160)</div>
<div class="t" style="top:696.16px;right:1513.75px;letter-spacing:0.35px;">(160)</div>
<div class="t" style="top:696.16px;right:1375.05px;letter-spacing:0.50px;">(13)</div>
<div class="t" style="top:696.16px;right:1262.00px;letter-spacing:0.50px;">(13)</div>
<div class="t" style="top:696.16px;right:1148.95px;letter-spacing:0.50px;">(13)</div>
<div class="t" style="top:696.16px;right:1035.90px;letter-spacing:0.50px;">(13)</div>
<div class="t" style="top:696.16px;right:922.85px;letter-spacing:0.50px;">(13)</div>
<div class="t" style="top:696.16px;right:809.80px;letter-spacing:0.50px;">(13)</div>
<div class="t" style="top:696.16px;right:696.75px;letter-spacing:0.50px;">(13)</div>
<div class="t" style="top:696.16px;right:583.70px;letter-spacing:0.50px;">(13)</div>
<div class="t" style="top:696.16px;right:470.65px;letter-spacing:0.50px;">(13)</div>
<div class="t" style="top:696.16px;right:357.60px;letter-spacing:0.50px;">(13)</div>
<div class="t" style="top:696.16px;right:244.55px;letter-spacing:0.50px;">(13)</div>
<div class="t" style="top:696.16px;right:131.50px;letter-spacing:0.50px;">(13)</div>
<div class="ti" style="top:715.26px;left:76.30px;letter-spacing:-0.11px;">% of Revenue</div>
<div class="ti" style="top:715.26px;right:2360.20px;letter-spacing:0.70px;">(2,811%)</div>
<div class="ti" style="top:715.26px;right:2265.96px;letter-spacing:0.94px;">(15%)</div>
<div class="ti" style="top:715.26px;right:2171.66px;letter-spacing:1.24px;">(2%)</div>
<div class="ti" style="top:715.26px;right:2077.66px;letter-spacing:1.24px;">(1%)</div>
<div class="ti" style="top:715.26px;right:1983.66px;letter-spacing:1.24px;">(1%)</div>
<div class="ti" style="top:715.26px;right:1889.66px;letter-spacing:1.24px;">(1%)</div>
<div class="ti" style="top:715.26px;right:1795.66px;letter-spacing:1.24px;">(1%)</div>
<div class="ti" style="top:715.26px;right:1701.66px;letter-spacing:1.24px;">(0%)</div>
<div class="ti" style="top:715.26px;right:1607.66px;letter-spacing:1.24px;">(0%)</div>
<div class="ti" style="top:715.26px;right:1513.66px;letter-spacing:1.24px;">(0%)</div>
<div class="ti" style="top:715.26px;right:1382.38px;letter-spacing:0.97px;">-</div>
<div class="ti" style="top:715.26px;right:1269.33px;letter-spacing:0.97px;">-</div>
<div class="ti" style="top:715.26px;right:1156.28px;letter-spacing:0.97px;">-</div>
<div class="ti" style="top:715.26px;right:1043.23px;letter-spacing:0.97px;">-</div>
<div class="ti" style="top:715.26px;right:930.18px;letter-spacing:0.97px;">-</div>
<div class="ti" style="top:715.26px;right:817.13px;letter-spacing:0.97px;">-</div>
<div class="ti" style="top:715.26px;right:704.08px;letter-spacing:0.97px;">-</div>
<div class="ti" style="top:715.26px;right:591.03px;letter-spacing:0.97px;">-</div>
<div class="ti" style="top:715.26px;right:477.98px;letter-spacing:0.97px;">-</div>
<div class="ti" style="top:715.26px;right:364.93px;letter-spacing:0.97px;">-</div>
<div class="ti" style="top:715.26px;right:251.88px;letter-spacing:0.97px;">-</div>
<div class="ti" style="top:715.26px;right:132.06px;letter-spacing:0.74px;">(234%)</div>
<div style="left:58.5px;top:734.6px;width:1332px;height:22px;background:#4bb1e7;"></div>
<div style="left:1416px;top:734.6px;width:1356.5px;height:22px;background:#4bb1e7;"></div>
<div class="tl L" style="top:737.43px;left:70.40px;transform:scaleX(1.055);">EBITDA</div>
<div class="tb R" style="top:738.19px;right:2360.10px;transform:scaleX(1.179);">(368)</div>
<div class="tb R" style="top:738.19px;right:2274.10px;transform:scaleX(1.116);">380</div>
<div class="tb R" style="top:738.19px;right:2180.10px;transform:scaleX(1.114);">5,192</div>
<div class="tb R" style="top:738.19px;right:2086.10px;transform:scaleX(1.114);">8,912</div>
<div class="tb R" style="top:738.19px;right:1992.10px;transform:scaleX(1.114);">13,735</div>
<div class="tb R" style="top:738.19px;right:1898.10px;transform:scaleX(1.114);">17,967</div>
<div class="tb R" style="top:738.19px;right:1804.10px;transform:scaleX(1.114);">23,912</div>
<div class="tb R" style="top:738.19px;right:1710.10px;transform:scaleX(1.114);">29,321</div>
<div class="tb R" style="top:738.19px;right:1616.10px;transform:scaleX(1.114);">35,970</div>
<div class="tb R" style="top:738.19px;right:1522.10px;transform:scaleX(1.114);">42,150</div>
<div class="tb R" style="top:738.19px;right:1375.55px;transform:scaleX(1.199);">(30)</div>
<div class="tb R" style="top:738.19px;right:1262.50px;transform:scaleX(1.199);">(30)</div>
<div class="tb R" style="top:738.19px;right:1149.45px;transform:scaleX(1.199);">(30)</div>
<div class="tb R" style="top:738.19px;right:1036.40px;transform:scaleX(1.199);">(30)</div>
<div class="tb R" style="top:738.19px;right:923.35px;transform:scaleX(1.199);">(30)</div>
<div class="tb R" style="top:738.19px;right:810.30px;transform:scaleX(1.199);">(30)</div>
<div class="tb R" style="top:738.19px;right:697.25px;transform:scaleX(1.199);">(32)</div>
<div class="tb R" style="top:738.19px;right:584.20px;transform:scaleX(1.199);">(32)</div>
<div class="tb R" style="top:738.19px;right:471.15px;transform:scaleX(1.199);">(32)</div>
<div class="tb R" style="top:738.19px;right:358.10px;transform:scaleX(1.199);">(32)</div>
<div class="tb R" style="top:738.19px;right:245.05px;transform:scaleX(1.199);">(32)</div>
<div class="tb R" style="top:738.19px;right:132.00px;transform:scaleX(1.199);">(28)</div>
<div class="ti" style="top:759.81px;left:61.30px;letter-spacing:-0.23px;">EBITDA %</div>
<div class="ti" style="top:759.81px;right:2360.34px;letter-spacing:0.56px;">(6,453%)</div>
<div class="ti" style="top:759.81px;right:2273.51px;letter-spacing:0.39px;">36%</div>
<div class="ti" style="top:759.81px;right:2179.51px;letter-spacing:0.39px;">75%</div>
<div class="ti" style="top:759.81px;right:2085.51px;letter-spacing:0.39px;">78%</div>
<div class="ti" style="top:759.81px;right:1991.51px;letter-spacing:0.39px;">80%</div>
<div class="ti" style="top:759.81px;right:1897.51px;letter-spacing:0.39px;">81%</div>
<div class="ti" style="top:759.81px;right:1803.51px;letter-spacing:0.39px;">82%</div>
<div class="ti" style="top:759.81px;right:1709.51px;letter-spacing:0.39px;">83%</div>
<div class="ti" style="top:759.81px;right:1615.51px;letter-spacing:0.39px;">84%</div>
<div class="ti" style="top:759.81px;right:1521.51px;letter-spacing:0.39px;">84%</div>
<div class="ti" style="top:759.81px;right:1382.38px;letter-spacing:0.97px;">-</div>
<div class="ti" style="top:759.81px;right:1269.33px;letter-spacing:0.97px;">-</div>
<div class="ti" style="top:759.81px;right:1156.28px;letter-spacing:0.97px;">-</div>
<div class="ti" style="top:759.81px;right:1043.23px;letter-spacing:0.97px;">-</div>
<div class="ti" style="top:759.81px;right:930.18px;letter-spacing:0.97px;">-</div>
<div class="ti" style="top:759.81px;right:817.13px;letter-spacing:0.97px;">-</div>
<div class="ti" style="top:759.81px;right:704.08px;letter-spacing:0.97px;">-</div>
<div class="ti" style="top:759.81px;right:591.03px;letter-spacing:0.97px;">-</div>
<div class="ti" style="top:759.81px;right:477.98px;letter-spacing:0.97px;">-</div>
<div class="ti" style="top:759.81px;right:364.93px;letter-spacing:0.97px;">-</div>
<div class="ti" style="top:759.81px;right:251.88px;letter-spacing:0.97px;">-</div>
<div class="ti" style="top:759.81px;right:132.06px;letter-spacing:0.74px;">(487%)</div>
<div class="t" style="top:778.76px;left:61.30px;letter-spacing:-0.08px;">Depreciation &amp; Amortization</div>
<div class="t" style="top:778.76px;right:2359.60px;letter-spacing:0.50px;">(44)</div>
<div class="t" style="top:778.76px;right:2265.60px;letter-spacing:0.50px;">(59)</div>
<div class="t" style="top:778.76px;right:2171.60px;letter-spacing:0.50px;">(59)</div>
<div class="t" style="top:778.76px;right:2077.60px;letter-spacing:0.50px;">(59)</div>
<div class="t" style="top:778.76px;right:1983.60px;letter-spacing:0.50px;">(59)</div>
<div class="t" style="top:778.76px;right:1889.60px;letter-spacing:0.50px;">(59)</div>
<div class="t" style="top:778.76px;right:1795.60px;letter-spacing:0.50px;">(59)</div>
<div class="t" style="top:778.76px;right:1701.60px;letter-spacing:0.50px;">(59)</div>
<div class="t" style="top:778.76px;right:1607.60px;letter-spacing:0.50px;">(59)</div>
<div class="t" style="top:778.76px;right:1513.60px;letter-spacing:0.50px;">(59)</div>
<div class="t" style="top:778.76px;right:1374.79px;letter-spacing:0.76px;">(1)</div>
<div class="t" style="top:778.76px;right:1261.74px;letter-spacing:0.76px;">(2)</div>
<div class="t" style="top:778.76px;right:1148.69px;letter-spacing:0.76px;">(3)</div>
<div class="t" style="top:778.76px;right:1035.64px;letter-spacing:0.76px;">(3)</div>
<div class="t" style="top:778.76px;right:922.59px;letter-spacing:0.76px;">(4)</div>
<div class="t" style="top:778.76px;right:809.54px;letter-spacing:0.76px;">(4)</div>
<div class="t" style="top:778.76px;right:696.49px;letter-spacing:0.76px;">(4)</div>
<div class="t" style="top:778.76px;right:583.44px;letter-spacing:0.76px;">(5)</div>
<div class="t" style="top:778.76px;right:470.39px;letter-spacing:0.76px;">(5)</div>
<div class="t" style="top:778.76px;right:357.34px;letter-spacing:0.76px;">(5)</div>
<div class="t" style="top:778.76px;right:244.29px;letter-spacing:0.76px;">(5)</div>
<div class="t" style="top:778.76px;right:131.24px;letter-spacing:0.76px;">(5)</div>
<div class="t" style="top:797.71px;left:61.30px;letter-spacing:-0.52px;">EBIT</div>
<div class="t" style="top:797.71px;right:2359.75px;letter-spacing:0.35px;">(412)</div>
<div class="t" style="top:797.71px;right:2272.76px;letter-spacing:-0.26px;">321</div>
<div class="t" style="top:797.71px;right:2178.64px;letter-spacing:-0.14px;">5,133</div>
<div class="t" style="top:797.71px;right:2084.64px;letter-spacing:-0.14px;">8,853</div>
<div class="t" style="top:797.71px;right:1990.66px;letter-spacing:-0.16px;">13,676</div>
<div class="t" style="top:797.71px;right:1896.66px;letter-spacing:-0.16px;">17,908</div>
<div class="t" style="top:797.71px;right:1802.66px;letter-spacing:-0.16px;">23,853</div>
<div class="t" style="top:797.71px;right:1708.66px;letter-spacing:-0.16px;">29,262</div>
<div class="t" style="top:797.71px;right:1614.48px;letter-spacing:0.02px;">35,911</div>
<div class="t" style="top:797.71px;right:1520.66px;letter-spacing:-0.16px;">42,091</div>
<div class="t" style="top:797.71px;right:1375.05px;letter-spacing:0.50px;">(31)</div>
<div class="t" style="top:797.71px;right:1262.00px;letter-spacing:0.50px;">(31)</div>
<div class="t" style="top:797.71px;right:1148.95px;letter-spacing:0.50px;">(32)</div>
<div class="t" style="top:797.71px;right:1035.90px;letter-spacing:0.50px;">(33)</div>
<div class="t" style="top:797.71px;right:922.85px;letter-spacing:0.50px;">(33)</div>
<div class="t" style="top:797.71px;right:809.80px;letter-spacing:0.50px;">(34)</div>
<div class="t" style="top:797.71px;right:696.75px;letter-spacing:0.50px;">(37)</div>
<div class="t" style="top:797.71px;right:583.70px;letter-spacing:0.50px;">(37)</div>
<div class="t" style="top:797.71px;right:470.65px;letter-spacing:0.50px;">(37)</div>
<div class="t" style="top:797.71px;right:357.60px;letter-spacing:0.50px;">(37)</div>
<div class="t" style="top:797.71px;right:244.55px;letter-spacing:0.50px;">(37)</div>
<div class="t" style="top:797.71px;right:131.50px;letter-spacing:0.50px;">(33)</div>
<div class="t" style="top:816.66px;left:61.30px;letter-spacing:-0.14px;">Net Interest Expense</div>
<div class="t" style="top:816.66px;right:2359.60px;letter-spacing:0.50px;">(18)</div>
<div class="t" style="top:816.66px;right:2265.60px;letter-spacing:0.50px;">(18)</div>
<div class="t" style="top:816.66px;right:2171.60px;letter-spacing:0.50px;">(16)</div>
<div class="t" style="top:816.66px;right:2077.60px;letter-spacing:0.50px;">(14)</div>
<div class="t" style="top:816.66px;right:1983.60px;letter-spacing:0.50px;">(12)</div>
<div class="t" style="top:816.66px;right:1889.34px;letter-spacing:0.76px;">(9)</div>
<div class="t" style="top:816.66px;right:1795.34px;letter-spacing:0.76px;">(7)</div>
<div class="t" style="top:816.66px;right:1701.34px;letter-spacing:0.76px;">(4)</div>
<div class="t" style="top:816.66px;right:1607.34px;letter-spacing:0.76px;">(3)</div>
<div class="t" style="top:816.66px;right:1513.34px;letter-spacing:0.76px;">(1)</div>
<div class="t" style="top:816.66px;right:1374.79px;letter-spacing:0.76px;">(1)</div>
<div class="t" style="top:816.66px;right:1261.74px;letter-spacing:0.76px;">(1)</div>
<div class="t" style="top:816.66px;right:1148.69px;letter-spacing:0.76px;">(2)</div>
<div class="t" style="top:816.66px;right:1035.64px;letter-spacing:0.76px;">(2)</div>
<div class="t" style="top:816.66px;right:922.59px;letter-spacing:0.76px;">(2)</div>
<div class="t" style="top:816.66px;right:809.54px;letter-spacing:0.76px;">(2)</div>
<div class="t" style="top:816.66px;right:696.49px;letter-spacing:0.76px;">(2)</div>
<div class="t" style="top:816.66px;right:583.44px;letter-spacing:0.76px;">(2)</div>
<div class="t" style="top:816.66px;right:470.39px;letter-spacing:0.76px;">(2)</div>
<div class="t" style="top:816.66px;right:357.34px;letter-spacing:0.76px;">(2)</div>
<div class="t" style="top:816.66px;right:244.29px;letter-spacing:0.76px;">(2)</div>
<div class="t" style="top:816.66px;right:131.24px;letter-spacing:0.76px;">(2)</div>
<div class="t" style="top:835.76px;left:61.30px;letter-spacing:-0.05px;">Net Profit Before Tax</div>
<div class="t" style="top:835.76px;right:2359.75px;letter-spacing:0.35px;">(430)</div>
<div class="t" style="top:835.76px;right:2272.76px;letter-spacing:-0.26px;">303</div>
<div class="t" style="top:835.76px;right:2178.43px;letter-spacing:0.07px;">5,117</div>
<div class="t" style="top:835.76px;right:2084.64px;letter-spacing:-0.14px;">8,839</div>
<div class="t" style="top:835.76px;right:1990.66px;letter-spacing:-0.16px;">13,665</div>
<div class="t" style="top:835.76px;right:1896.66px;letter-spacing:-0.16px;">17,898</div>
<div class="t" style="top:835.76px;right:1802.66px;letter-spacing:-0.16px;">23,846</div>
<div class="t" style="top:835.76px;right:1708.66px;letter-spacing:-0.16px;">29,257</div>
<div class="t" style="top:835.76px;right:1614.66px;letter-spacing:-0.16px;">35,908</div>
<div class="t" style="top:835.76px;right:1520.66px;letter-spacing:-0.16px;">42,090</div>
<div class="t" style="top:835.76px;right:1375.05px;letter-spacing:0.50px;">(32)</div>
<div class="t" style="top:835.76px;right:1262.00px;letter-spacing:0.50px;">(32)</div>
<div class="t" style="top:835.76px;right:1148.95px;letter-spacing:0.50px;">(34)</div>
<div class="t" style="top:835.76px;right:1035.90px;letter-spacing:0.50px;">(35)</div>
<div class="t" style="top:835.76px;right:922.85px;letter-spacing:0.50px;">(35)</div>
<div class="t" style="top:835.76px;right:809.80px;letter-spacing:0.50px;">(35)</div>
<div class="t" style="top:835.76px;right:696.75px;letter-spacing:0.50px;">(38)</div>
<div class="t" style="top:835.76px;right:583.70px;letter-spacing:0.50px;">(39)</div>
<div class="t" style="top:835.76px;right:470.65px;letter-spacing:0.50px;">(39)</div>
<div class="t" style="top:835.76px;right:357.60px;letter-spacing:0.50px;">(39)</div>
<div class="t" style="top:835.76px;right:244.55px;letter-spacing:0.50px;">(39)</div>
<div class="t" style="top:835.76px;right:131.50px;letter-spacing:0.50px;">(34)</div>
<div class="t" style="top:854.56px;left:61.30px;letter-spacing:-0.29px;">Tax Expense</div>
<div class="t" style="top:854.56px;right:2366.13px;letter-spacing:0.37px;">-</div>
<div class="t" style="top:854.56px;right:2265.60px;letter-spacing:0.50px;">(76)</div>
<div class="t" style="top:854.56px;right:2171.84px;letter-spacing:0.26px;">(1,279)</div>
<div class="t" style="top:854.56px;right:2077.84px;letter-spacing:0.26px;">(2,210)</div>
<div class="t" style="top:854.56px;right:1983.84px;letter-spacing:0.26px;">(3,416)</div>
<div class="t" style="top:854.56px;right:1889.84px;letter-spacing:0.26px;">(4,475)</div>
<div class="t" style="top:854.56px;right:1795.84px;letter-spacing:0.26px;">(5,961)</div>
<div class="t" style="top:854.56px;right:1701.84px;letter-spacing:0.26px;">(7,314)</div>
<div class="t" style="top:854.56px;right:1607.84px;letter-spacing:0.26px;">(8,977)</div>
<div class="t" style="top:854.56px;right:1513.91px;letter-spacing:0.19px;">(10,522)</div>
<div class="t" style="top:854.56px;right:1381.58px;letter-spacing:0.37px;">-</div>
<div class="t" style="top:854.56px;right:1268.53px;letter-spacing:0.37px;">-</div>
<div class="t" style="top:854.56px;right:1155.48px;letter-spacing:0.37px;">-</div>
<div class="t" style="top:854.56px;right:1042.43px;letter-spacing:0.37px;">-</div>
<div class="t" style="top:854.56px;right:929.38px;letter-spacing:0.37px;">-</div>
<div class="t" style="top:854.56px;right:816.33px;letter-spacing:0.37px;">-</div>
<div class="t" style="top:854.56px;right:703.28px;letter-spacing:0.37px;">-</div>
<div class="t" style="top:854.56px;right:590.23px;letter-spacing:0.37px;">-</div>
<div class="t" style="top:854.56px;right:477.18px;letter-spacing:0.37px;">-</div>
<div class="t" style="top:854.56px;right:364.13px;letter-spacing:0.37px;">-</div>
<div class="t" style="top:854.56px;right:251.08px;letter-spacing:0.37px;">-</div>
<div class="t" style="top:854.56px;right:138.03px;letter-spacing:0.37px;">-</div>
<div style="left:58.5px;top:870.3px;width:1332px;height:22.2px;background:#4bb1e7;"></div>
<div style="left:1416px;top:870.3px;width:1356.5px;height:22.2px;background:#4bb1e7;"></div>
<div class="tl L" style="top:873.33px;left:70.40px;transform:scaleX(1.118);">Net Profit After Tax</div>
<div class="tb R" style="top:874.09px;right:2360.10px;transform:scaleX(1.179);">(430)</div>
<div class="tb R" style="top:874.09px;right:2274.10px;transform:scaleX(1.116);">227</div>
<div class="tb R" style="top:874.09px;right:2180.10px;transform:scaleX(1.114);">3,838</div>
<div class="tb R" style="top:874.09px;right:2086.10px;transform:scaleX(1.114);">6,630</div>
<div class="tb R" style="top:874.09px;right:1992.10px;transform:scaleX(1.114);">10,248</div>
<div class="tb R" style="top:874.09px;right:1898.10px;transform:scaleX(1.114);">13,424</div>
<div class="tb R" style="top:874.09px;right:1804.10px;transform:scaleX(1.114);">17,884</div>
<div class="tb R" style="top:874.09px;right:1710.10px;transform:scaleX(1.114);">21,943</div>
<div class="tb R" style="top:874.09px;right:1616.10px;transform:scaleX(1.114);">26,931</div>
<div class="tb R" style="top:874.09px;right:1522.10px;transform:scaleX(1.114);">31,567</div>
<div class="tb R" style="top:874.09px;right:1375.55px;transform:scaleX(1.199);">(32)</div>
<div class="tb R" style="top:874.09px;right:1262.50px;transform:scaleX(1.199);">(32)</div>
<div class="tb R" style="top:874.09px;right:1149.45px;transform:scaleX(1.199);">(34)</div>
<div class="tb R" style="top:874.09px;right:1036.40px;transform:scaleX(1.199);">(35)</div>
<div class="tb R" style="top:874.09px;right:923.35px;transform:scaleX(1.199);">(35)</div>
<div class="tb R" style="top:874.09px;right:810.30px;transform:scaleX(1.199);">(35)</div>
<div class="tb R" style="top:874.09px;right:697.25px;transform:scaleX(1.199);">(38)</div>
<div class="tb R" style="top:874.09px;right:584.20px;transform:scaleX(1.199);">(39)</div>
<div class="tb R" style="top:874.09px;right:471.15px;transform:scaleX(1.199);">(39)</div>
<div class="tb R" style="top:874.09px;right:358.10px;transform:scaleX(1.199);">(39)</div>
<div class="tb R" style="top:874.09px;right:245.05px;transform:scaleX(1.199);">(39)</div>
<div class="tb R" style="top:874.09px;right:132.00px;transform:scaleX(1.199);">(34)</div>
<div class="ti" style="top:895.96px;left:76.30px;letter-spacing:0.11px;">Net Profit After Tax %</div>
<div class="ti" style="top:895.96px;right:2360.34px;letter-spacing:0.56px;">(7,551%)</div>
<div class="ti" style="top:895.96px;right:2273.51px;letter-spacing:0.39px;">22%</div>
<div class="ti" style="top:895.96px;right:2179.51px;letter-spacing:0.39px;">55%</div>
<div class="ti" style="top:895.96px;right:2085.51px;letter-spacing:0.39px;">58%</div>
<div class="ti" style="top:895.96px;right:1991.51px;letter-spacing:0.39px;">60%</div>
<div class="ti" style="top:895.96px;right:1897.51px;letter-spacing:0.39px;">61%</div>
<div class="ti" style="top:895.96px;right:1803.51px;letter-spacing:0.39px;">62%</div>
<div class="ti" style="top:895.96px;right:1709.51px;letter-spacing:0.39px;">62%</div>
<div class="ti" style="top:895.96px;right:1615.51px;letter-spacing:0.39px;">63%</div>
<div class="ti" style="top:895.96px;right:1521.51px;letter-spacing:0.39px;">63%</div>
<div class="ti" style="top:895.96px;right:1382.38px;letter-spacing:0.97px;">-</div>
<div class="ti" style="top:895.96px;right:1269.33px;letter-spacing:0.97px;">-</div>
<div class="ti" style="top:895.96px;right:1156.28px;letter-spacing:0.97px;">-</div>
<div class="ti" style="top:895.96px;right:1043.23px;letter-spacing:0.97px;">-</div>
<div class="ti" style="top:895.96px;right:930.18px;letter-spacing:0.97px;">-</div>
<div class="ti" style="top:895.96px;right:817.13px;letter-spacing:0.97px;">-</div>
<div class="ti" style="top:895.96px;right:704.08px;letter-spacing:0.97px;">-</div>
<div class="ti" style="top:895.96px;right:591.03px;letter-spacing:0.97px;">-</div>
<div class="ti" style="top:895.96px;right:477.98px;letter-spacing:0.97px;">-</div>
<div class="ti" style="top:895.96px;right:364.93px;letter-spacing:0.97px;">-</div>
<div class="ti" style="top:895.96px;right:251.88px;letter-spacing:0.97px;">-</div>
<div class="ti" style="top:895.96px;right:132.06px;letter-spacing:0.74px;">(601%)</div>
<div style="left:58.5px;top:931px;width:1332px;height:29.5px;background:#4b50d3;"></div>
<div style="left:1416px;top:931px;width:1356.5px;height:29.5px;background:#4b50d3;"></div>
<div class="bn" style="top:934.55px;left:274.30px;width:900px;text-align:center;transform:scaleX(1.170);">Income Statement ($'000) - 10 years to December 2035</div>
<div class="bn" style="top:934.55px;left:1644.90px;width:900px;text-align:center;transform:scaleX(1.195);">Income Statement ($'000) - 2026</div>
<div style="left:58.5px;top:1341.2px;width:1332px;height:29.5px;background:#4b50d3;"></div>
<div style="left:1416px;top:1341.2px;width:1356.5px;height:29.5px;background:#4b50d3;"></div>
<div class="bn" style="top:1344.75px;left:274.60px;width:900px;text-align:center;transform:scaleX(1.158);">Balance Sheet ($'000) - 10 years to December 2035</div>
<div class="bn" style="top:1344.75px;left:1645.20px;width:900px;text-align:center;transform:scaleX(1.177);">Balance Sheet ($'000) - 2026</div>
<div style="left:59.5px;top:1375px;width:390px;height:18.2px;background:#6e74e8;"></div>
<div class="hd" style="top:1377.10px;left:69.30px;transform-origin:left center;transform:scaleX(1.034);">Year Ending</div>
<div style="left:451.3px;top:1375px;width:92.7px;height:18.2px;background:#6e74e8;"></div>
<div class="hd" style="top:1377.10px;left:453.00px;width:90px;text-align:center;transform:scaleX(1.164);">2026</div>
<div style="left:545.3px;top:1375px;width:92.7px;height:18.2px;background:#6e74e8;"></div>
<div class="hd" style="top:1377.10px;left:547.00px;width:90px;text-align:center;transform:scaleX(1.164);">2027</div>
<div style="left:639.3px;top:1375px;width:92.7px;height:18.2px;background:#6e74e8;"></div>
<div class="hd" style="top:1377.10px;left:641.00px;width:90px;text-align:center;transform:scaleX(1.164);">2028</div>
<div style="left:733.3px;top:1375px;width:92.7px;height:18.2px;background:#6e74e8;"></div>
<div class="hd" style="top:1377.10px;left:735.00px;width:90px;text-align:center;transform:scaleX(1.164);">2029</div>
<div style="left:827.3px;top:1375px;width:92.7px;height:18.2px;background:#6e74e8;"></div>
<div class="hd" style="top:1377.10px;left:829.00px;width:90px;text-align:center;transform:scaleX(1.164);">2030</div>
<div style="left:921.3px;top:1375px;width:92.7px;height:18.2px;background:#6e74e8;"></div>
<div class="hd" style="top:1377.10px;left:923.00px;width:90px;text-align:center;transform:scaleX(1.164);">2031</div>
<div style="left:1015.3px;top:1375px;width:92.7px;height:18.2px;background:#6e74e8;"></div>
<div class="hd" style="top:1377.10px;left:1017.00px;width:90px;text-align:center;transform:scaleX(1.164);">2032</div>
<div style="left:1109.3px;top:1375px;width:92.7px;height:18.2px;background:#6e74e8;"></div>
<div class="hd" style="top:1377.10px;left:1111.00px;width:90px;text-align:center;transform:scaleX(1.164);">2033</div>
<div style="left:1203.3px;top:1375px;width:92.7px;height:18.2px;background:#6e74e8;"></div>
<div class="hd" style="top:1377.10px;left:1205.00px;width:90px;text-align:center;transform:scaleX(1.164);">2034</div>
<div style="left:1297.3px;top:1375px;width:92.7px;height:18.2px;background:#6e74e8;"></div>
<div class="hd" style="top:1377.10px;left:1299.00px;width:90px;text-align:center;transform:scaleX(1.164);">2035</div>
<div style="left:1416.8px;top:1375px;width:111.75px;height:18.2px;background:#6e74e8;"></div>
<div class="hd" style="top:1377.10px;left:1422.53px;width:100px;text-align:center;transform:scaleX(1.009);">Jan</div>
<div style="left:1529.85px;top:1375px;width:111.75px;height:18.2px;background:#6e74e8;"></div>
<div class="hd" style="top:1377.10px;left:1535.57px;width:100px;text-align:center;transform:scaleX(1.016);">Feb</div>
<div style="left:1642.9px;top:1375px;width:111.75px;height:18.2px;background:#6e74e8;"></div>
<div class="hd" style="top:1377.10px;left:1648.62px;width:100px;text-align:center;transform:scaleX(1.083);">Mar</div>
<div style="left:1755.95px;top:1375px;width:111.75px;height:18.2px;background:#6e74e8;"></div>
<div class="hd" style="top:1377.10px;left:1761.67px;width:100px;text-align:center;transform:scaleX(1.015);">Apr</div>
<div style="left:1869px;top:1375px;width:111.75px;height:18.2px;background:#6e74e8;"></div>
<div class="hd" style="top:1377.10px;left:1874.72px;width:100px;text-align:center;transform:scaleX(1.063);">May</div>
<div style="left:1982.05px;top:1375px;width:111.75px;height:18.2px;background:#6e74e8;"></div>
<div class="hd" style="top:1377.10px;left:1987.77px;width:100px;text-align:center;transform:scaleX(1.001);">Jun</div>
<div style="left:2095.1px;top:1375px;width:111.75px;height:18.2px;background:#6e74e8;"></div>
<div class="hd" style="top:1377.10px;left:2100.82px;width:100px;text-align:center;transform:scaleX(0.998);">Jul</div>
<div style="left:2208.15px;top:1375px;width:111.75px;height:18.2px;background:#6e74e8;"></div>
<div class="hd" style="top:1377.10px;left:2213.88px;width:100px;text-align:center;transform:scaleX(1.005);">Aug</div>
<div style="left:2321.2px;top:1375px;width:111.75px;height:18.2px;background:#6e74e8;"></div>
<div class="hd" style="top:1377.10px;left:2326.93px;width:100px;text-align:center;transform:scaleX(1.012);">Sep</div>
<div style="left:2434.25px;top:1375px;width:111.75px;height:18.2px;background:#6e74e8;"></div>
<div class="hd" style="top:1377.10px;left:2439.98px;width:100px;text-align:center;transform:scaleX(1.028);">Oct</div>
<div style="left:2547.3px;top:1375px;width:111.75px;height:18.2px;background:#6e74e8;"></div>
<div class="hd" style="top:1377.10px;left:2553.03px;width:100px;text-align:center;transform:scaleX(1.041);">Nov</div>
<div style="left:2660.35px;top:1375px;width:111.75px;height:18.2px;background:#6e74e8;"></div>
<div class="hd" style="top:1377.10px;left:2666.08px;width:100px;text-align:center;transform:scaleX(1.024);">Dec</div>
<div class="t" style="top:1400.76px;left:61.30px;letter-spacing:-0.25px;">Current Assets</div>
<div class="t" style="top:1400.76px;right:2366.76px;letter-spacing:-0.26px;">29</div>
<div class="t" style="top:1400.76px;right:2272.76px;letter-spacing:-0.26px;">334</div>
<div class="t" style="top:1400.76px;right:2178.64px;letter-spacing:-0.14px;">4,229</div>
<div class="t" style="top:1400.76px;right:2084.66px;letter-spacing:-0.16px;">10,921</div>
<div class="t" style="top:1400.76px;right:1990.66px;letter-spacing:-0.16px;">21,221</div>
<div class="t" style="top:1400.76px;right:1896.66px;letter-spacing:-0.16px;">34,712</div>
<div class="t" style="top:1400.76px;right:1802.66px;letter-spacing:-0.16px;">52,649</div>
<div class="t" style="top:1400.76px;right:1708.66px;letter-spacing:-0.16px;">74,662</div>
<div class="t" style="top:1400.76px;right:1614.68px;letter-spacing:-0.18px;">101,660</div>
<div class="t" style="top:1400.76px;right:1520.68px;letter-spacing:-0.18px;">133,291</div>
<div class="t" style="top:1400.76px;right:1382.21px;letter-spacing:-0.26px;">789</div>
<div class="t" style="top:1400.76px;right:1269.16px;letter-spacing:-0.26px;">649</div>
<div class="t" style="top:1400.76px;right:1156.11px;letter-spacing:-0.26px;">608</div>
<div class="t" style="top:1400.76px;right:1043.06px;letter-spacing:-0.26px;">504</div>
<div class="t" style="top:1400.76px;right:930.01px;letter-spacing:-0.26px;">425</div>
<div class="t" style="top:1400.76px;right:816.96px;letter-spacing:-0.26px;">341</div>
<div class="t" style="top:1400.76px;right:703.91px;letter-spacing:-0.26px;">268</div>
<div class="t" style="top:1400.76px;right:590.86px;letter-spacing:-0.26px;">207</div>
<div class="t" style="top:1400.76px;right:477.81px;letter-spacing:-0.26px;">147</div>
<div class="t" style="top:1400.76px;right:364.76px;letter-spacing:-0.26px;">101</div>
<div class="t" style="top:1400.76px;right:251.71px;letter-spacing:-0.26px;">59</div>
<div class="t" style="top:1400.76px;right:138.66px;letter-spacing:-0.26px;">29</div>
<div class="t" style="top:1419.76px;left:61.30px;letter-spacing:-0.24px;">Non-Current Assets</div>
<div class="t" style="top:1419.76px;right:2366.76px;letter-spacing:-0.26px;">546</div>
<div class="t" style="top:1419.76px;right:2272.76px;letter-spacing:-0.26px;">487</div>
<div class="t" style="top:1419.76px;right:2178.76px;letter-spacing:-0.26px;">428</div>
<div class="t" style="top:1419.76px;right:2084.76px;letter-spacing:-0.26px;">369</div>
<div class="t" style="top:1419.76px;right:1990.76px;letter-spacing:-0.26px;">310</div>
<div class="t" style="top:1419.76px;right:1896.76px;letter-spacing:-0.26px;">251</div>
<div class="t" style="top:1419.76px;right:1802.76px;letter-spacing:-0.26px;">192</div>
<div class="t" style="top:1419.76px;right:1708.76px;letter-spacing:-0.26px;">133</div>
<div class="t" style="top:1419.76px;right:1614.76px;letter-spacing:-0.26px;">74</div>
<div class="t" style="top:1419.76px;right:1520.76px;letter-spacing:-0.26px;">15</div>
<div class="t" style="top:1419.76px;right:1382.21px;letter-spacing:-0.26px;">94</div>
<div class="t" style="top:1419.76px;right:1269.16px;letter-spacing:-0.26px;">203</div>
<div class="t" style="top:1419.76px;right:1156.11px;letter-spacing:-0.26px;">307</div>
<div class="t" style="top:1419.76px;right:1043.06px;letter-spacing:-0.26px;">376</div>
<div class="t" style="top:1419.76px;right:930.01px;letter-spacing:-0.26px;">418</div>
<div class="t" style="top:1419.76px;right:816.96px;letter-spacing:-0.26px;">467</div>
<div class="t" style="top:1419.76px;right:703.91px;letter-spacing:-0.26px;">501</div>
<div class="t" style="top:1419.76px;right:590.86px;letter-spacing:-0.26px;">522</div>
<div class="t" style="top:1419.76px;right:477.81px;letter-spacing:-0.26px;">543</div>
<div class="t" style="top:1419.76px;right:364.76px;letter-spacing:-0.26px;">549</div>
<div class="t" style="top:1419.76px;right:251.71px;letter-spacing:-0.26px;">551</div>
<div class="t" style="top:1419.76px;right:138.66px;letter-spacing:-0.26px;">546</div>
<div style="left:58.5px;top:1435.5px;width:1332px;height:22.2px;background:#4bb1e7;"></div>
<div style="left:1416px;top:1435.5px;width:1356.5px;height:22.2px;background:#4bb1e7;"></div>
<div class="tl L" style="top:1438.53px;left:70.40px;transform:scaleX(1.080);">Total Assets</div>
<div class="tb R" style="top:1439.29px;right:2368.10px;transform:scaleX(1.116);">575</div>
<div class="tb R" style="top:1439.29px;right:2274.10px;transform:scaleX(1.116);">821</div>
<div class="tb R" style="top:1439.29px;right:2180.10px;transform:scaleX(1.114);">4,657</div>
<div class="tb R" style="top:1439.29px;right:2086.10px;transform:scaleX(1.135);">11,290</div>
<div class="tb R" style="top:1439.29px;right:1992.10px;transform:scaleX(1.114);">21,531</div>
<div class="tb R" style="top:1439.29px;right:1898.10px;transform:scaleX(1.114);">34,962</div>
<div class="tb R" style="top:1439.29px;right:1804.10px;transform:scaleX(1.114);">52,841</div>
<div class="tb R" style="top:1439.29px;right:1710.10px;transform:scaleX(1.114);">74,795</div>
<div class="tb R" style="top:1439.29px;right:1616.10px;transform:scaleX(1.115);">101,733</div>
<div class="tb R" style="top:1439.29px;right:1522.10px;transform:scaleX(1.115);">133,306</div>
<div class="tb R" style="top:1439.29px;right:1383.55px;transform:scaleX(1.116);">883</div>
<div class="tb R" style="top:1439.29px;right:1270.50px;transform:scaleX(1.116);">852</div>
<div class="tb R" style="top:1439.29px;right:1157.45px;transform:scaleX(1.116);">915</div>
<div class="tb R" style="top:1439.29px;right:1044.40px;transform:scaleX(1.116);">880</div>
<div class="tb R" style="top:1439.29px;right:931.35px;transform:scaleX(1.116);">844</div>
<div class="tb R" style="top:1439.29px;right:818.30px;transform:scaleX(1.116);">808</div>
<div class="tb R" style="top:1439.29px;right:705.25px;transform:scaleX(1.116);">769</div>
<div class="tb R" style="top:1439.29px;right:592.20px;transform:scaleX(1.116);">729</div>
<div class="tb R" style="top:1439.29px;right:479.15px;transform:scaleX(1.116);">690</div>
<div class="tb R" style="top:1439.29px;right:366.10px;transform:scaleX(1.116);">649</div>
<div class="tb R" style="top:1439.29px;right:253.05px;transform:scaleX(1.116);">610</div>
<div class="tb R" style="top:1439.29px;right:140.00px;transform:scaleX(1.116);">575</div>
<div class="t" style="top:1464.66px;left:61.30px;letter-spacing:-0.42px;">Current Liabilities</div>
<div class="t" style="top:1464.66px;right:2366.76px;letter-spacing:-0.26px;">16</div>
<div class="t" style="top:1464.66px;right:2272.76px;letter-spacing:-0.26px;">66</div>
<div class="t" style="top:1464.66px;right:2178.76px;letter-spacing:-0.26px;">96</div>
<div class="t" style="top:1464.66px;right:2084.76px;letter-spacing:-0.26px;">132</div>
<div class="t" style="top:1464.66px;right:1990.76px;letter-spacing:-0.26px;">159</div>
<div class="t" style="top:1464.66px;right:1896.76px;letter-spacing:-0.26px;">202</div>
<div class="t" style="top:1464.66px;right:1802.76px;letter-spacing:-0.26px;">233</div>
<div class="t" style="top:1464.66px;right:1708.76px;letter-spacing:-0.26px;">277</div>
<div class="t" style="top:1464.66px;right:1614.39px;letter-spacing:0.11px;">311</div>
<div class="t" style="top:1464.66px;right:1520.76px;letter-spacing:-0.26px;">344</div>
<div class="t" style="top:1464.66px;right:1382.21px;letter-spacing:-0.26px;">14</div>
<div class="t" style="top:1464.66px;right:1269.16px;letter-spacing:-0.26px;">16</div>
<div class="t" style="top:1464.66px;right:1156.11px;letter-spacing:-0.26px;">14</div>
<div class="t" style="top:1464.66px;right:1043.06px;letter-spacing:-0.26px;">15</div>
<div class="t" style="top:1464.66px;right:930.01px;letter-spacing:-0.26px;">14</div>
<div class="t" style="top:1464.66px;right:816.96px;letter-spacing:-0.26px;">15</div>
<div class="t" style="top:1464.66px;right:703.91px;letter-spacing:-0.26px;">16</div>
<div class="t" style="top:1464.66px;right:590.86px;letter-spacing:-0.26px;">16</div>
<div class="t" style="top:1464.66px;right:477.81px;letter-spacing:-0.26px;">16</div>
<div class="t" style="top:1464.66px;right:364.76px;letter-spacing:-0.26px;">16</div>
<div class="t" style="top:1464.66px;right:251.71px;letter-spacing:-0.26px;">16</div>
<div class="t" style="top:1464.66px;right:138.66px;letter-spacing:-0.26px;">16</div>
<div class="t" style="top:1483.86px;left:61.30px;letter-spacing:-0.37px;">Non-Current Liabilities</div>
<div class="t" style="top:1483.86px;right:2366.76px;letter-spacing:-0.26px;">289</div>
<div class="t" style="top:1483.86px;right:2272.76px;letter-spacing:-0.26px;">258</div>
<div class="t" style="top:1483.86px;right:2178.76px;letter-spacing:-0.26px;">227</div>
<div class="t" style="top:1483.86px;right:2084.76px;letter-spacing:-0.26px;">194</div>
<div class="t" style="top:1483.86px;right:1990.76px;letter-spacing:-0.26px;">160</div>
<div class="t" style="top:1483.86px;right:1896.76px;letter-spacing:-0.26px;">124</div>
<div class="t" style="top:1483.86px;right:1802.76px;letter-spacing:-0.26px;">88</div>
<div class="t" style="top:1483.86px;right:1708.76px;letter-spacing:-0.26px;">54</div>
<div class="t" style="top:1483.86px;right:1614.76px;letter-spacing:-0.26px;">28</div>
<div class="t" style="top:1483.86px;right:1520.13px;letter-spacing:0.37px;">-</div>
<div class="t" style="top:1483.86px;right:1382.21px;letter-spacing:-0.26px;">200</div>
<div class="t" style="top:1483.86px;right:1269.16px;letter-spacing:-0.26px;">200</div>
<div class="t" style="top:1483.86px;right:1156.11px;letter-spacing:-0.26px;">299</div>
<div class="t" style="top:1483.86px;right:1043.06px;letter-spacing:-0.26px;">298</div>
<div class="t" style="top:1483.86px;right:930.01px;letter-spacing:-0.26px;">297</div>
<div class="t" style="top:1483.86px;right:816.96px;letter-spacing:-0.26px;">296</div>
<div class="t" style="top:1483.86px;right:703.91px;letter-spacing:-0.26px;">294</div>
<div class="t" style="top:1483.86px;right:590.86px;letter-spacing:-0.26px;">293</div>
<div class="t" style="top:1483.86px;right:477.81px;letter-spacing:-0.26px;">292</div>
<div class="t" style="top:1483.86px;right:364.76px;letter-spacing:-0.26px;">291</div>
<div class="t" style="top:1483.86px;right:251.71px;letter-spacing:-0.26px;">290</div>
<div class="t" style="top:1483.86px;right:138.66px;letter-spacing:-0.26px;">289</div>
<div style="left:58.5px;top:1499.6px;width:1332px;height:22px;background:#4bb1e7;"></div>
<div style="left:1416px;top:1499.6px;width:1356.5px;height:22px;background:#4bb1e7;"></div>
<div class="tl L" style="top:1502.43px;left:70.40px;transform:scaleX(1.092);">Total Liabilities</div>
<div class="tb R" style="top:1503.19px;right:2368.10px;transform:scaleX(1.116);">305</div>
<div class="tb R" style="top:1503.19px;right:2274.10px;transform:scaleX(1.116);">324</div>
<div class="tb R" style="top:1503.19px;right:2180.10px;transform:scaleX(1.116);">322</div>
<div class="tb R" style="top:1503.19px;right:2086.10px;transform:scaleX(1.116);">326</div>
<div class="tb R" style="top:1503.19px;right:1992.10px;transform:scaleX(1.116);">319</div>
<div class="tb R" style="top:1503.19px;right:1898.10px;transform:scaleX(1.116);">326</div>
<div class="tb R" style="top:1503.19px;right:1804.10px;transform:scaleX(1.116);">321</div>
<div class="tb R" style="top:1503.19px;right:1710.10px;transform:scaleX(1.116);">331</div>
<div class="tb R" style="top:1503.19px;right:1616.10px;transform:scaleX(1.116);">339</div>
<div class="tb R" style="top:1503.19px;right:1522.10px;transform:scaleX(1.116);">344</div>
<div class="tb R" style="top:1503.19px;right:1383.55px;transform:scaleX(1.116);">214</div>
<div class="tb R" style="top:1503.19px;right:1270.50px;transform:scaleX(1.116);">216</div>
<div class="tb R" style="top:1503.19px;right:1157.45px;transform:scaleX(1.116);">313</div>
<div class="tb R" style="top:1503.19px;right:1044.40px;transform:scaleX(1.116);">313</div>
<div class="tb R" style="top:1503.19px;right:931.35px;transform:scaleX(1.154);">311</div>
<div class="tb R" style="top:1503.19px;right:818.30px;transform:scaleX(1.116);">310</div>
<div class="tb R" style="top:1503.19px;right:705.25px;transform:scaleX(1.116);">310</div>
<div class="tb R" style="top:1503.19px;right:592.20px;transform:scaleX(1.116);">309</div>
<div class="tb R" style="top:1503.19px;right:479.15px;transform:scaleX(1.116);">308</div>
<div class="tb R" style="top:1503.19px;right:366.10px;transform:scaleX(1.116);">307</div>
<div class="tb R" style="top:1503.19px;right:253.05px;transform:scaleX(1.116);">306</div>
<div class="tb R" style="top:1503.19px;right:140.00px;transform:scaleX(1.116);">305</div>
<div style="left:58.5px;top:1525.6px;width:1332px;height:22.2px;background:#4bb1e7;"></div>
<div style="left:1416px;top:1525.6px;width:1356.5px;height:22.2px;background:#4bb1e7;"></div>
<div class="tl L" style="top:1528.63px;left:70.40px;transform:scaleX(1.077);">Net Assets</div>
<div class="tb R" style="top:1529.39px;right:2368.10px;transform:scaleX(1.116);">270</div>
<div class="tb R" style="top:1529.39px;right:2274.10px;transform:scaleX(1.116);">497</div>
<div class="tb R" style="top:1529.39px;right:2180.10px;transform:scaleX(1.114);">4,334</div>
<div class="tb R" style="top:1529.39px;right:2086.10px;transform:scaleX(1.114);">10,964</div>
<div class="tb R" style="top:1529.39px;right:1992.10px;transform:scaleX(1.114);">21,212</div>
<div class="tb R" style="top:1529.39px;right:1898.10px;transform:scaleX(1.114);">34,636</div>
<div class="tb R" style="top:1529.39px;right:1804.10px;transform:scaleX(1.114);">52,520</div>
<div class="tb R" style="top:1529.39px;right:1710.10px;transform:scaleX(1.114);">74,463</div>
<div class="tb R" style="top:1529.39px;right:1616.10px;transform:scaleX(1.115);">101,394</div>
<div class="tb R" style="top:1529.39px;right:1522.10px;transform:scaleX(1.115);">132,962</div>
<div class="tb R" style="top:1529.39px;right:1383.55px;transform:scaleX(1.116);">668</div>
<div class="tb R" style="top:1529.39px;right:1270.50px;transform:scaleX(1.116);">636</div>
<div class="tb R" style="top:1529.39px;right:1157.45px;transform:scaleX(1.116);">602</div>
<div class="tb R" style="top:1529.39px;right:1044.40px;transform:scaleX(1.116);">568</div>
<div class="tb R" style="top:1529.39px;right:931.35px;transform:scaleX(1.116);">533</div>
<div class="tb R" style="top:1529.39px;right:818.30px;transform:scaleX(1.116);">497</div>
<div class="tb R" style="top:1529.39px;right:705.25px;transform:scaleX(1.116);">459</div>
<div class="tb R" style="top:1529.39px;right:592.20px;transform:scaleX(1.116);">420</div>
<div class="tb R" style="top:1529.39px;right:479.15px;transform:scaleX(1.116);">382</div>
<div class="tb R" style="top:1529.39px;right:366.10px;transform:scaleX(1.116);">343</div>
<div class="tb R" style="top:1529.39px;right:253.05px;transform:scaleX(1.116);">304</div>
<div class="tb R" style="top:1529.39px;right:140.00px;transform:scaleX(1.116);">270</div>
<div class="ti" style="top:1551.26px;left:61.30px;letter-spacing:-0.22px;">Net Current Assets</div>
<div class="ti" style="top:1551.26px;right:2367.86px;letter-spacing:0.04px;">13</div>
<div class="ti" style="top:1551.26px;right:2273.96px;letter-spacing:-0.06px;">268</div>
<div class="ti" style="top:1551.26px;right:2179.92px;letter-spacing:-0.02px;">4,133</div>
<div class="ti" style="top:1551.26px;right:2085.96px;letter-spacing:-0.06px;">10,789</div>
<div class="ti" style="top:1551.26px;right:1991.96px;letter-spacing:-0.06px;">21,062</div>
<div class="ti" style="top:1551.26px;right:1897.96px;letter-spacing:-0.06px;">34,510</div>
<div class="ti" style="top:1551.26px;right:1803.96px;letter-spacing:-0.06px;">52,416</div>
<div class="ti" style="top:1551.26px;right:1709.96px;letter-spacing:-0.06px;">74,385</div>
<div class="ti" style="top:1551.26px;right:1615.99px;letter-spacing:-0.09px;">101,349</div>
<div class="ti" style="top:1551.26px;right:1521.99px;letter-spacing:-0.09px;">132,947</div>
<div class="ti" style="top:1551.26px;right:1383.41px;letter-spacing:-0.06px;">774</div>
<div class="ti" style="top:1551.26px;right:1270.36px;letter-spacing:-0.06px;">634</div>
<div class="ti" style="top:1551.26px;right:1157.31px;letter-spacing:-0.06px;">594</div>
<div class="ti" style="top:1551.26px;right:1044.26px;letter-spacing:-0.06px;">490</div>
<div class="ti" style="top:1551.26px;right:930.84px;letter-spacing:0.31px;">411</div>
<div class="ti" style="top:1551.26px;right:818.16px;letter-spacing:-0.06px;">326</div>
<div class="ti" style="top:1551.26px;right:705.11px;letter-spacing:-0.06px;">253</div>
<div class="ti" style="top:1551.26px;right:592.06px;letter-spacing:-0.06px;">192</div>
<div class="ti" style="top:1551.26px;right:479.01px;letter-spacing:-0.06px;">131</div>
<div class="ti" style="top:1551.26px;right:365.86px;letter-spacing:0.04px;">85</div>
<div class="ti" style="top:1551.26px;right:252.81px;letter-spacing:0.04px;">43</div>
<div class="ti" style="top:1551.26px;right:139.76px;letter-spacing:0.04px;">13</div>
<div class="t" style="top:1574.16px;left:61.30px;letter-spacing:-0.20px;">Equity</div>
<div class="t" style="top:1574.16px;right:2366.76px;letter-spacing:-0.26px;">700</div>
<div class="t" style="top:1574.16px;right:2272.76px;letter-spacing:-0.26px;">700</div>
<div class="t" style="top:1574.16px;right:2178.76px;letter-spacing:-0.26px;">700</div>
<div class="t" style="top:1574.16px;right:2084.76px;letter-spacing:-0.26px;">700</div>
<div class="t" style="top:1574.16px;right:1990.76px;letter-spacing:-0.26px;">700</div>
<div class="t" style="top:1574.16px;right:1896.76px;letter-spacing:-0.26px;">700</div>
<div class="t" style="top:1574.16px;right:1802.76px;letter-spacing:-0.26px;">700</div>
<div class="t" style="top:1574.16px;right:1708.76px;letter-spacing:-0.26px;">700</div>
<div class="t" style="top:1574.16px;right:1614.76px;letter-spacing:-0.26px;">700</div>
<div class="t" style="top:1574.16px;right:1520.76px;letter-spacing:-0.26px;">700</div>
<div class="t" style="top:1574.16px;right:1382.21px;letter-spacing:-0.26px;">700</div>
<div class="t" style="top:1574.16px;right:1269.16px;letter-spacing:-0.26px;">700</div>
<div class="t" style="top:1574.16px;right:1156.11px;letter-spacing:-0.26px;">700</div>
<div class="t" style="top:1574.16px;right:1043.06px;letter-spacing:-0.26px;">700</div>
<div class="t" style="top:1574.16px;right:930.01px;letter-spacing:-0.26px;">700</div>
<div class="t" style="top:1574.16px;right:816.96px;letter-spacing:-0.26px;">700</div>
<div class="t" style="top:1574.16px;right:703.91px;letter-spacing:-0.26px;">700</div>
<div class="t" style="top:1574.16px;right:590.86px;letter-spacing:-0.26px;">700</div>
<div class="t" style="top:1574.16px;right:477.81px;letter-spacing:-0.26px;">700</div>
<div class="t" style="top:1574.16px;right:364.76px;letter-spacing:-0.26px;">700</div>
<div class="t" style="top:1574.16px;right:251.71px;letter-spacing:-0.26px;">700</div>
<div class="t" style="top:1574.16px;right:138.66px;letter-spacing:-0.26px;">700</div>
<div class="t" style="top:1592.36px;left:61.30px;letter-spacing:-0.22px;">Retained Profits</div>
<div class="t" style="top:1592.36px;right:2359.75px;letter-spacing:0.35px;">(430)</div>
<div class="t" style="top:1592.36px;right:2265.75px;letter-spacing:0.35px;">(203)</div>
<div class="t" style="top:1592.36px;right:2178.64px;letter-spacing:-0.14px;">3,634</div>
<div class="t" style="top:1592.36px;right:2084.66px;letter-spacing:-0.16px;">10,264</div>
<div class="t" style="top:1592.36px;right:1990.66px;letter-spacing:-0.16px;">20,512</div>
<div class="t" style="top:1592.36px;right:1896.66px;letter-spacing:-0.16px;">33,936</div>
<div class="t" style="top:1592.36px;right:1802.66px;letter-spacing:-0.16px;">51,820</div>
<div class="t" style="top:1592.36px;right:1708.66px;letter-spacing:-0.16px;">73,763</div>
<div class="t" style="top:1592.36px;right:1614.68px;letter-spacing:-0.18px;">100,694</div>
<div class="t" style="top:1592.36px;right:1520.68px;letter-spacing:-0.18px;">132,262</div>
<div class="t" style="top:1592.36px;right:1375.05px;letter-spacing:0.50px;">(32)</div>
<div class="t" style="top:1592.36px;right:1262.00px;letter-spacing:0.50px;">(64)</div>
<div class="t" style="top:1592.36px;right:1148.95px;letter-spacing:0.50px;">(98)</div>
<div class="t" style="top:1592.36px;right:1036.05px;letter-spacing:0.35px;">(132)</div>
<div class="t" style="top:1592.36px;right:923.00px;letter-spacing:0.35px;">(167)</div>
<div class="t" style="top:1592.36px;right:809.95px;letter-spacing:0.35px;">(203)</div>
<div class="t" style="top:1592.36px;right:696.90px;letter-spacing:0.35px;">(241)</div>
<div class="t" style="top:1592.36px;right:583.85px;letter-spacing:0.35px;">(280)</div>
<div class="t" style="top:1592.36px;right:470.80px;letter-spacing:0.35px;">(318)</div>
<div class="t" style="top:1592.36px;right:357.75px;letter-spacing:0.35px;">(357)</div>
<div class="t" style="top:1592.36px;right:244.70px;letter-spacing:0.35px;">(396)</div>
<div class="t" style="top:1592.36px;right:131.65px;letter-spacing:0.35px;">(430)</div>
<div style="left:58.5px;top:1608.1px;width:1332px;height:22.8px;background:#4bb1e7;"></div>
<div style="left:1416px;top:1608.1px;width:1356.5px;height:22.8px;background:#4bb1e7;"></div>
<div class="tl L" style="top:1611.73px;left:70.40px;transform:scaleX(1.098);">Total Equity</div>
<div class="tb R" style="top:1612.49px;right:2368.10px;transform:scaleX(1.116);">270</div>
<div class="tb R" style="top:1612.49px;right:2274.10px;transform:scaleX(1.116);">497</div>
<div class="tb R" style="top:1612.49px;right:2180.10px;transform:scaleX(1.114);">4,334</div>
<div class="tb R" style="top:1612.49px;right:2086.10px;transform:scaleX(1.114);">10,964</div>
<div class="tb R" style="top:1612.49px;right:1992.10px;transform:scaleX(1.114);">21,212</div>
<div class="tb R" style="top:1612.49px;right:1898.10px;transform:scaleX(1.114);">34,636</div>
<div class="tb R" style="top:1612.49px;right:1804.10px;transform:scaleX(1.114);">52,520</div>
<div class="tb R" style="top:1612.49px;right:1710.10px;transform:scaleX(1.114);">74,463</div>
<div class="tb R" style="top:1612.49px;right:1616.10px;transform:scaleX(1.115);">101,394</div>
<div class="tb R" style="top:1612.49px;right:1522.10px;transform:scaleX(1.115);">132,962</div>
<div class="tb R" style="top:1612.49px;right:1383.55px;transform:scaleX(1.116);">668</div>
<div class="tb R" style="top:1612.49px;right:1270.50px;transform:scaleX(1.116);">636</div>
<div class="tb R" style="top:1612.49px;right:1157.45px;transform:scaleX(1.116);">602</div>
<div class="tb R" style="top:1612.49px;right:1044.40px;transform:scaleX(1.116);">568</div>
<div class="tb R" style="top:1612.49px;right:931.35px;transform:scaleX(1.116);">533</div>
<div class="tb R" style="top:1612.49px;right:818.30px;transform:scaleX(1.116);">497</div>
<div class="tb R" style="top:1612.49px;right:705.25px;transform:scaleX(1.116);">459</div>
<div class="tb R" style="top:1612.49px;right:592.20px;transform:scaleX(1.116);">420</div>
<div class="tb R" style="top:1612.49px;right:479.15px;transform:scaleX(1.116);">382</div>
<div class="tb R" style="top:1612.49px;right:366.10px;transform:scaleX(1.116);">343</div>
<div class="tb R" style="top:1612.49px;right:253.05px;transform:scaleX(1.116);">304</div>
<div class="tb R" style="top:1612.49px;right:140.00px;transform:scaleX(1.116);">270</div>
<div style="left:58.5px;top:1650.4px;width:1332px;height:19.6px;background:#4b50d3;"></div>
<div style="left:1416px;top:1650.4px;width:1356.5px;height:19.6px;background:#4b50d3;"></div>
<div class="bn" style="top:1653.95px;left:274.60px;width:900px;text-align:center;transform:scaleX(1.158);">Balance Sheet ($'000) - 10 years to December 2035</div>
<div class="bn" style="top:1653.95px;left:1645.20px;width:900px;text-align:center;transform:scaleX(1.177);">Balance Sheet ($'000) - 2026</div>
<div class="L" style="top:298.98px;left:64.50px;font-weight:bold;font-size:26.6px;line-height:26.6px;color:#262626;transform:scaleX(1.066);">Financial Statements Summary</div>
<div class="L" style="top:329.67px;left:62.50px;font-weight:bold;font-size:22.6px;line-height:22.6px;color:#000;transform:scaleX(1.04);">ABC Company Inc.</div>
<div class="L" style="top:360.70px;left:62.00px;font-family:'Liberation Serif',serif;font-weight:bold;font-size:15.4px;line-height:15.4px;color:#2a6fe0;text-decoration:underline;transform:scaleX(1.11);">Go to Table of Contents</div>
<div style="left:1868.5px;top:354.3px;width:226.1px;height:28px;background:#fff066;border:1px solid #dcdcc0"></div>
<div class="C" style="top:360.03px;left:1931.50px;width:100px;text-align:center;font-weight:bold;font-size:16.5px;line-height:16.5px;color:#111;transform:scaleX(1.144);">2026</div>
<div class="R" style="top:360.03px;right:1051.50px;font-weight:bold;font-size:16.5px;line-height:16.5px;color:#151515;transform:scaleX(1.086);">Select reporting year</div>
<div style="left:39px;top:401.5px;width:2821px;height:1px;background:#bdbdbd;"></div>
<svg style="position:absolute;left:0;top:960px" width="2902" height="385" viewBox="0 960 2902 385"><g shape-rendering="crispEdges"><line x1="57.5" y1="1009.5" x2="1266" y2="1009.5" stroke="#4a9fd6" stroke-width="1"/><line x1="57.5" y1="1049.5" x2="1266" y2="1049.5" stroke="#4a9fd6" stroke-width="1"/><line x1="57.5" y1="1089.5" x2="1266" y2="1089.5" stroke="#4a9fd6" stroke-width="1"/><line x1="57.5" y1="1128.5" x2="1266" y2="1128.5" stroke="#4a9fd6" stroke-width="1"/><line x1="57.5" y1="1168.5" x2="1266" y2="1168.5" stroke="#4a9fd6" stroke-width="1"/><line x1="57.5" y1="1208.5" x2="1266" y2="1208.5" stroke="#4a9fd6" stroke-width="1"/><line x1="57.5" y1="1248.5" x2="1266" y2="1248.5" stroke="#4b5f9a" stroke-width="1"/><line x1="57.5" y1="1287.5" x2="1266" y2="1287.5" stroke="#4a9fd6" stroke-width="1"/><line x1="178.5" y1="1009" x2="178.5" y2="1288" stroke="#4a9fd6" stroke-width="1"/><line x1="299.5" y1="1009" x2="299.5" y2="1288" stroke="#4a9fd6" stroke-width="1"/><line x1="419.5" y1="1009" x2="419.5" y2="1288" stroke="#4a9fd6" stroke-width="1"/><line x1="540.5" y1="1009" x2="540.5" y2="1288" stroke="#4a9fd6" stroke-width="1"/><line x1="661.5" y1="1009" x2="661.5" y2="1288" stroke="#4a9fd6" stroke-width="1"/><line x1="782.5" y1="1009" x2="782.5" y2="1288" stroke="#4a9fd6" stroke-width="1"/><line x1="902.5" y1="1009" x2="902.5" y2="1288" stroke="#4a9fd6" stroke-width="1"/><line x1="1023.5" y1="1009" x2="1023.5" y2="1288" stroke="#4a9fd6" stroke-width="1"/><line x1="1144.5" y1="1009" x2="1144.5" y2="1288" stroke="#4a9fd6" stroke-width="1"/><line x1="1265.5" y1="1009" x2="1265.5" y2="1288" stroke="#4a9fd6" stroke-width="1"/></g><polyline fill="none" stroke="#e9796c" stroke-width="2.9" stroke-linejoin="round" points="117.9,1246.4 238.6,1242.3 359.4,1218.9 480.1,1201.0 600.9,1178.5 721.6,1158.4 842.4,1131.1 963.1,1106.0 1083.9,1075.5 1204.6,1047.3"/><circle cx="117.9" cy="1246.4" r="4.4" fill="#e9796c"/><circle cx="238.6" cy="1242.3" r="4.4" fill="#e9796c"/><circle cx="359.4" cy="1218.9" r="4.4" fill="#e9796c"/><circle cx="480.1" cy="1201.0" r="4.4" fill="#e9796c"/><circle cx="600.9" cy="1178.5" r="4.4" fill="#e9796c"/><circle cx="721.6" cy="1158.4" r="4.4" fill="#e9796c"/><circle cx="842.4" cy="1131.1" r="4.4" fill="#e9796c"/><circle cx="963.1" cy="1106.0" r="4.4" fill="#e9796c"/><circle cx="1083.9" cy="1075.5" r="4.4" fill="#e9796c"/><circle cx="1204.6" cy="1047.3" r="4.4" fill="#e9796c"/><polyline fill="none" stroke="#5f9b3c" stroke-width="2.9" stroke-linejoin="round" points="117.9,1247.9 238.6,1245.0 359.4,1225.8 480.1,1211.1 600.9,1191.9 721.6,1175.1 842.4,1151.5 963.1,1130.0 1083.9,1103.6 1204.6,1079.0"/><circle cx="117.9" cy="1247.9" r="4.4" fill="#5f9b3c"/><circle cx="238.6" cy="1245.0" r="4.4" fill="#5f9b3c"/><circle cx="359.4" cy="1225.8" r="4.4" fill="#5f9b3c"/><circle cx="480.1" cy="1211.1" r="4.4" fill="#5f9b3c"/><circle cx="600.9" cy="1191.9" r="4.4" fill="#5f9b3c"/><circle cx="721.6" cy="1175.1" r="4.4" fill="#5f9b3c"/><circle cx="842.4" cy="1151.5" r="4.4" fill="#5f9b3c"/><circle cx="963.1" cy="1130.0" r="4.4" fill="#5f9b3c"/><circle cx="1083.9" cy="1103.6" r="4.4" fill="#5f9b3c"/><circle cx="1204.6" cy="1079.0" r="4.4" fill="#5f9b3c"/><polyline fill="none" stroke="#4a50d4" stroke-width="2.9" stroke-linejoin="round" points="117.9,1248.2 238.6,1245.6 359.4,1231.2 480.1,1220.1 600.9,1205.8 721.6,1193.1 842.4,1175.4 963.1,1159.3 1083.9,1139.5 1204.6,1121.1"/><circle cx="117.9" cy="1248.2" r="4.4" fill="#4a50d4"/><circle cx="238.6" cy="1245.6" r="4.4" fill="#4a50d4"/><circle cx="359.4" cy="1231.2" r="4.4" fill="#4a50d4"/><circle cx="480.1" cy="1220.1" r="4.4" fill="#4a50d4"/><circle cx="600.9" cy="1205.8" r="4.4" fill="#4a50d4"/><circle cx="721.6" cy="1193.1" r="4.4" fill="#4a50d4"/><circle cx="842.4" cy="1175.4" r="4.4" fill="#4a50d4"/><circle cx="963.1" cy="1159.3" r="4.4" fill="#4a50d4"/><circle cx="1083.9" cy="1139.5" r="4.4" fill="#4a50d4"/><circle cx="1204.6" cy="1121.1" r="4.4" fill="#4a50d4"/><line x1="493.7" y1="986.3" x2="530.6" y2="986.3" stroke="#e9796c" stroke-width="2.9" stroke-linecap="round"/><circle cx="512.15" cy="986.3" r="3.5" fill="#e9796c"/><line x1="626.6" y1="986.3" x2="665" y2="986.3" stroke="#5f9b3c" stroke-width="2.9" stroke-linecap="round"/><circle cx="645.8" cy="986.3" r="3.5" fill="#5f9b3c"/><line x1="761.6" y1="986.3" x2="799.4" y2="986.3" stroke="#4a50d4" stroke-width="2.9" stroke-linecap="round"/><circle cx="780.5" cy="986.3" r="3.5" fill="#4a50d4"/></svg>
<div class="ax L" style="top:979.03px;left:535.00px;">Revenue</div>
<div class="ax L" style="top:979.03px;left:672.00px;">EBITDA</div>
<div class="ax L" style="top:979.03px;left:806.50px;">Net Profit After Tax</div>
<div class="ax C" style="top:1300.73px;left:67.88px;width:100px;text-align:center;transform:scaleX(1.17);">2026</div>
<div class="ax C" style="top:1300.73px;left:188.62px;width:100px;text-align:center;transform:scaleX(1.17);">2027</div>
<div class="ax C" style="top:1300.73px;left:309.38px;width:100px;text-align:center;transform:scaleX(1.17);">2028</div>
<div class="ax C" style="top:1300.73px;left:430.12px;width:100px;text-align:center;transform:scaleX(1.17);">2029</div>
<div class="ax C" style="top:1300.73px;left:550.88px;width:100px;text-align:center;transform:scaleX(1.17);">2030</div>
<div class="ax C" style="top:1300.73px;left:671.62px;width:100px;text-align:center;transform:scaleX(1.17);">2031</div>
<div class="ax C" style="top:1300.73px;left:792.38px;width:100px;text-align:center;transform:scaleX(1.17);">2032</div>
<div class="ax C" style="top:1300.73px;left:913.12px;width:100px;text-align:center;transform:scaleX(1.17);">2033</div>
<div class="ax C" style="top:1300.73px;left:1033.88px;width:100px;text-align:center;transform:scaleX(1.17);">2034</div>
<div class="ax C" style="top:1300.73px;left:1154.62px;width:100px;text-align:center;transform:scaleX(1.17);">2035</div>
<div class="ax L" style="top:1002.73px;left:1284.50px;transform:scaleX(1.17);">60,000</div>
<div class="ax L" style="top:1042.45px;left:1284.50px;transform:scaleX(1.17);">50,000</div>
<div class="ax L" style="top:1082.18px;left:1284.50px;transform:scaleX(1.17);">40,000</div>
<div class="ax L" style="top:1121.91px;left:1284.50px;transform:scaleX(1.17);">30,000</div>
<div class="ax L" style="top:1161.64px;left:1284.50px;transform:scaleX(1.17);">20,000</div>
<div class="ax L" style="top:1201.37px;left:1284.50px;transform:scaleX(1.17);">10,000</div>
<div class="ax L" style="top:1241.10px;left:1284.50px;transform:scaleX(1.17);">-</div>
<div class="ax L" style="top:1280.83px;left:1279.50px;transform:scaleX(1.17);">(10,000)</div>
<svg style="position:absolute;left:0;top:960px" width="2902" height="385" viewBox="0 960 2902 385"><g shape-rendering="crispEdges"><line x1="1416.2" y1="1009.5" x2="2717.5" y2="1009.5" stroke="#4a9fd6" stroke-width="1"/><line x1="1416.2" y1="1034.5" x2="2717.5" y2="1034.5" stroke="#4a9fd6" stroke-width="1"/><line x1="1416.2" y1="1060.5" x2="2717.5" y2="1060.5" stroke="#4a9fd6" stroke-width="1"/><line x1="1416.2" y1="1085.5" x2="2717.5" y2="1085.5" stroke="#4a9fd6" stroke-width="1"/><line x1="1416.2" y1="1110.5" x2="2717.5" y2="1110.5" stroke="#4a9fd6" stroke-width="1"/><line x1="1416.2" y1="1136.5" x2="2717.5" y2="1136.5" stroke="#4a9fd6" stroke-width="1"/><line x1="1416.2" y1="1161.5" x2="2717.5" y2="1161.5" stroke="#4a9fd6" stroke-width="1"/><line x1="1416.2" y1="1186.5" x2="2717.5" y2="1186.5" stroke="#4a9fd6" stroke-width="1"/><line x1="1416.2" y1="1211.5" x2="2717.5" y2="1211.5" stroke="#4a9fd6" stroke-width="1"/><line x1="1416.2" y1="1237.5" x2="2717.5" y2="1237.5" stroke="#4a9fd6" stroke-width="1"/><line x1="1416.2" y1="1262.5" x2="2717.5" y2="1262.5" stroke="#4a9fd6" stroke-width="1"/><line x1="1416.2" y1="1287.5" x2="2717.5" y2="1287.5" stroke="#4a9fd6" stroke-width="1"/><line x1="1416.5" y1="1009" x2="1416.5" y2="1288" stroke="#4a9fd6" stroke-width="1"/><line x1="1524.5" y1="1009" x2="1524.5" y2="1288" stroke="#4a9fd6" stroke-width="1"/><line x1="1632.5" y1="1009" x2="1632.5" y2="1288" stroke="#4a9fd6" stroke-width="1"/><line x1="1741.5" y1="1009" x2="1741.5" y2="1288" stroke="#4a9fd6" stroke-width="1"/><line x1="1849.5" y1="1009" x2="1849.5" y2="1288" stroke="#4a9fd6" stroke-width="1"/><line x1="1957.5" y1="1009" x2="1957.5" y2="1288" stroke="#4a9fd6" stroke-width="1"/><line x1="2066.5" y1="1009" x2="2066.5" y2="1288" stroke="#4a9fd6" stroke-width="1"/><line x1="2174.5" y1="1009" x2="2174.5" y2="1288" stroke="#4a9fd6" stroke-width="1"/><line x1="2283.5" y1="1009" x2="2283.5" y2="1288" stroke="#4a9fd6" stroke-width="1"/><line x1="2391.5" y1="1009" x2="2391.5" y2="1288" stroke="#4a9fd6" stroke-width="1"/><line x1="2499.5" y1="1009" x2="2499.5" y2="1288" stroke="#4a9fd6" stroke-width="1"/><line x1="2608.5" y1="1009" x2="2608.5" y2="1288" stroke="#4a9fd6" stroke-width="1"/><line x1="2716.5" y1="1009" x2="2716.5" y2="1288" stroke="#4a9fd6" stroke-width="1"/></g><polyline fill="none" stroke="#e9796c" stroke-width="2.9" stroke-linejoin="round" points="1470.4,1060.2 1578.7,1060.2 1687.1,1060.2 1795.5,1060.2 1903.8,1060.2 2012.2,1060.2 2120.5,1060.2 2228.9,1060.2 2337.2,1060.2 2445.6,1060.2 2554.0,1060.2 2662.3,1030.9"/><circle cx="1470.4" cy="1060.2" r="4.4" fill="#e9796c"/><circle cx="1578.7" cy="1060.2" r="4.4" fill="#e9796c"/><circle cx="1687.1" cy="1060.2" r="4.4" fill="#e9796c"/><circle cx="1795.5" cy="1060.2" r="4.4" fill="#e9796c"/><circle cx="1903.8" cy="1060.2" r="4.4" fill="#e9796c"/><circle cx="2012.2" cy="1060.2" r="4.4" fill="#e9796c"/><circle cx="2120.5" cy="1060.2" r="4.4" fill="#e9796c"/><circle cx="2228.9" cy="1060.2" r="4.4" fill="#e9796c"/><circle cx="2337.2" cy="1060.2" r="4.4" fill="#e9796c"/><circle cx="2445.6" cy="1060.2" r="4.4" fill="#e9796c"/><circle cx="2554.0" cy="1060.2" r="4.4" fill="#e9796c"/><circle cx="2662.3" cy="1030.9" r="4.4" fill="#e9796c"/><polyline fill="none" stroke="#5f9b3c" stroke-width="2.9" stroke-linejoin="round" points="1470.4,1210.8 1578.7,1210.8 1687.1,1210.8 1795.5,1210.8 1903.8,1210.8 2012.2,1210.8 2120.5,1222.9 2228.9,1222.9 2337.2,1222.9 2445.6,1222.9 2554.0,1222.9 2662.3,1199.7"/><circle cx="1470.4" cy="1210.8" r="4.4" fill="#5f9b3c"/><circle cx="1578.7" cy="1210.8" r="4.4" fill="#5f9b3c"/><circle cx="1687.1" cy="1210.8" r="4.4" fill="#5f9b3c"/><circle cx="1795.5" cy="1210.8" r="4.4" fill="#5f9b3c"/><circle cx="1903.8" cy="1210.8" r="4.4" fill="#5f9b3c"/><circle cx="2012.2" cy="1210.8" r="4.4" fill="#5f9b3c"/><circle cx="2120.5" cy="1222.9" r="4.4" fill="#5f9b3c"/><circle cx="2228.9" cy="1222.9" r="4.4" fill="#5f9b3c"/><circle cx="2337.2" cy="1222.9" r="4.4" fill="#5f9b3c"/><circle cx="2445.6" cy="1222.9" r="4.4" fill="#5f9b3c"/><circle cx="2554.0" cy="1222.9" r="4.4" fill="#5f9b3c"/><circle cx="2662.3" cy="1199.7" r="4.4" fill="#5f9b3c"/><polyline fill="none" stroke="#4a50d4" stroke-width="2.9" stroke-linejoin="round" points="1470.4,1218.9 1578.7,1224.4 1687.1,1232.0 1795.5,1234.0 1903.8,1236.0 2012.2,1239.1 2120.5,1254.2 2228.9,1255.2 2337.2,1256.2 2445.6,1256.2 2554.0,1256.2 2662.3,1233.0"/><circle cx="1470.4" cy="1218.9" r="4.4" fill="#4a50d4"/><circle cx="1578.7" cy="1224.4" r="4.4" fill="#4a50d4"/><circle cx="1687.1" cy="1232.0" r="4.4" fill="#4a50d4"/><circle cx="1795.5" cy="1234.0" r="4.4" fill="#4a50d4"/><circle cx="1903.8" cy="1236.0" r="4.4" fill="#4a50d4"/><circle cx="2012.2" cy="1239.1" r="4.4" fill="#4a50d4"/><circle cx="2120.5" cy="1254.2" r="4.4" fill="#4a50d4"/><circle cx="2228.9" cy="1255.2" r="4.4" fill="#4a50d4"/><circle cx="2337.2" cy="1256.2" r="4.4" fill="#4a50d4"/><circle cx="2445.6" cy="1256.2" r="4.4" fill="#4a50d4"/><circle cx="2554.0" cy="1256.2" r="4.4" fill="#4a50d4"/><circle cx="2662.3" cy="1233.0" r="4.4" fill="#4a50d4"/><line x1="1863.4" y1="986.3" x2="1901" y2="986.3" stroke="#e9796c" stroke-width="2.9" stroke-linecap="round"/><circle cx="1882.2" cy="986.3" r="3.5" fill="#e9796c"/><line x1="1996.3" y1="986.3" x2="2034.7" y2="986.3" stroke="#5f9b3c" stroke-width="2.9" stroke-linecap="round"/><circle cx="2015.5" cy="986.3" r="3.5" fill="#5f9b3c"/><line x1="2131.5" y1="986.3" x2="2169" y2="986.3" stroke="#4a50d4" stroke-width="2.9" stroke-linecap="round"/><circle cx="2150.25" cy="986.3" r="3.5" fill="#4a50d4"/></svg>
<div class="ax L" style="top:979.03px;left:1905.50px;">Revenue</div>
<div class="ax L" style="top:979.03px;left:2042.00px;">EBITDA</div>
<div class="ax L" style="top:979.03px;left:2176.50px;">Net Profit After Tax</div>
<div class="ax C" style="top:1300.73px;left:1420.38px;width:100px;text-align:center;transform:scaleX(1.17);">Jan</div>
<div class="ax C" style="top:1300.73px;left:1528.74px;width:100px;text-align:center;transform:scaleX(1.17);">Feb</div>
<div class="ax C" style="top:1300.73px;left:1637.10px;width:100px;text-align:center;transform:scaleX(1.17);">Mar</div>
<div class="ax C" style="top:1300.73px;left:1745.45px;width:100px;text-align:center;transform:scaleX(1.17);">Apr</div>
<div class="ax C" style="top:1300.73px;left:1853.81px;width:100px;text-align:center;transform:scaleX(1.17);">May</div>
<div class="ax C" style="top:1300.73px;left:1962.17px;width:100px;text-align:center;transform:scaleX(1.17);">Jun</div>
<div class="ax C" style="top:1300.73px;left:2070.53px;width:100px;text-align:center;transform:scaleX(1.17);">Jul</div>
<div class="ax C" style="top:1300.73px;left:2178.89px;width:100px;text-align:center;transform:scaleX(1.17);">Aug</div>
<div class="ax C" style="top:1300.73px;left:2287.25px;width:100px;text-align:center;transform:scaleX(1.17);">Sep</div>
<div class="ax C" style="top:1300.73px;left:2395.60px;width:100px;text-align:center;transform:scaleX(1.17);">Oct</div>
<div class="ax C" style="top:1300.73px;left:2503.96px;width:100px;text-align:center;transform:scaleX(1.17);">Nov</div>
<div class="ax C" style="top:1300.73px;left:2612.32px;width:100px;text-align:center;transform:scaleX(1.17);">Dec</div>
<div class="ax L" style="top:1002.73px;left:2736.00px;transform:scaleX(1.17);">10</div>
<div class="ax L" style="top:1027.99px;left:2736.00px;transform:scaleX(1.17);">5</div>
<div class="ax L" style="top:1053.25px;left:2736.00px;transform:scaleX(1.17);">-</div>
<div class="ax L" style="top:1078.52px;left:2731.00px;transform:scaleX(1.17);">(5)</div>
<div class="ax L" style="top:1103.78px;left:2731.00px;transform:scaleX(1.17);">(10)</div>
<div class="ax L" style="top:1129.04px;left:2731.00px;transform:scaleX(1.17);">(15)</div>
<div class="ax L" style="top:1154.31px;left:2731.00px;transform:scaleX(1.17);">(20)</div>
<div class="ax L" style="top:1179.57px;left:2731.00px;transform:scaleX(1.17);">(25)</div>
<div class="ax L" style="top:1204.83px;left:2731.00px;transform:scaleX(1.17);">(30)</div>
<div class="ax L" style="top:1230.10px;left:2731.00px;transform:scaleX(1.17);">(35)</div>
<div class="ax L" style="top:1255.36px;left:2731.00px;transform:scaleX(1.17);">(40)</div>
<div class="ax L" style="top:1280.63px;left:2731.00px;transform:scaleX(1.17);">(45)</div>
<div style="left:11px;top:278px;width:2849px;height:18px;background:#0e0e0e;"></div>
<div style="left:11px;top:296px;width:28px;height:1374px;background:#0e0e0e;"></div>
<div style="left:39.5px;top:278px;width:19.5px;height:18px;background:#5f5f5f;"></div>
<div style="left:39px;top:294.5px;width:21px;height:2.5px;background:#1e7a45;"></div>
<div style="left:58.5px;top:280px;width:1px;height:16px;background:#3c3c3c;"></div>
<div class="cl" style="left:29.0px;width:40.0px;">A</div>
<div style="left:106.5px;top:280px;width:1px;height:16px;background:#3c3c3c;"></div>
<div class="cl" style="left:49.0px;width:68.0px;">B</div>
<div style="left:154.5px;top:280px;width:1px;height:16px;background:#3c3c3c;"></div>
<div class="cl" style="left:97.0px;width:68.0px;">C</div>
<div style="left:202.5px;top:280px;width:1px;height:16px;background:#3c3c3c;"></div>
<div class="cl" style="left:145.0px;width:68.0px;">D</div>
<div style="left:250.5px;top:280px;width:1px;height:16px;background:#3c3c3c;"></div>
<div class="cl" style="left:193.0px;width:68.0px;">E</div>
<div style="left:298.5px;top:280px;width:1px;height:16px;background:#3c3c3c;"></div>
<div class="cl" style="left:241.0px;width:68.0px;">F</div>
<div style="left:354.5px;top:280px;width:1px;height:16px;background:#3c3c3c;"></div>
<div class="cl" style="left:289.0px;width:76.0px;">G</div>
<div style="left:402.5px;top:280px;width:1px;height:16px;background:#3c3c3c;"></div>
<div class="cl" style="left:345.0px;width:68.0px;">H</div>
<div style="left:450px;top:280px;width:1px;height:16px;background:#3c3c3c;"></div>
<div class="cl" style="left:393.0px;width:67.5px;">I</div>
<div style="left:544px;top:280px;width:1px;height:16px;background:#3c3c3c;"></div>
<div class="cl" style="left:440.5px;width:114.0px;">J</div>
<div style="left:638px;top:280px;width:1px;height:16px;background:#3c3c3c;"></div>
<div class="cl" style="left:534.5px;width:114.0px;">K</div>
<div style="left:732px;top:280px;width:1px;height:16px;background:#3c3c3c;"></div>
<div class="cl" style="left:628.5px;width:114.0px;">L</div>
<div style="left:826px;top:280px;width:1px;height:16px;background:#3c3c3c;"></div>
<div class="cl" style="left:722.5px;width:114.0px;">M</div>
<div style="left:920px;top:280px;width:1px;height:16px;background:#3c3c3c;"></div>
<div class="cl" style="left:816.5px;width:114.0px;">N</div>
<div style="left:1014px;top:280px;width:1px;height:16px;background:#3c3c3c;"></div>
<div class="cl" style="left:910.5px;width:114.0px;">O</div>
<div style="left:1108px;top:280px;width:1px;height:16px;background:#3c3c3c;"></div>
<div class="cl" style="left:1004.5px;width:114.0px;">P</div>
<div style="left:1202px;top:280px;width:1px;height:16px;background:#3c3c3c;"></div>
<div class="cl" style="left:1098.5px;width:114.0px;">Q</div>
<div style="left:1296px;top:280px;width:1px;height:16px;background:#3c3c3c;"></div>
<div class="cl" style="left:1192.5px;width:114.0px;">R</div>
<div style="left:1390px;top:280px;width:1px;height:16px;background:#3c3c3c;"></div>
<div class="cl" style="left:1286.5px;width:114.0px;">S</div>
<div style="left:1415.5px;top:280px;width:1px;height:16px;background:#3c3c3c;"></div>
<div class="cl" style="left:1380.5px;width:45.5px;">T</div>
<div style="left:1528.55px;top:280px;width:1px;height:16px;background:#3c3c3c;"></div>
<div class="cl" style="left:1406.0px;width:133.0px;">U</div>
<div style="left:1641.6px;top:280px;width:1px;height:16px;background:#3c3c3c;"></div>
<div class="cl" style="left:1519.0px;width:133.0px;">V</div>
<div style="left:1754.65px;top:280px;width:1px;height:16px;background:#3c3c3c;"></div>
<div class="cl" style="left:1632.1px;width:133.0px;">W</div>
<div style="left:1867.7px;top:280px;width:1px;height:16px;background:#3c3c3c;"></div>
<div class="cl" style="left:1745.1px;width:133.0px;">X</div>
<div style="left:1980.75px;top:280px;width:1px;height:16px;background:#3c3c3c;"></div>
<div class="cl" style="left:1858.2px;width:133.0px;">Y</div>
<div style="left:2093.8px;top:280px;width:1px;height:16px;background:#3c3c3c;"></div>
<div class="cl" style="left:1971.2px;width:133.0px;">Z</div>
<div style="left:2206.85px;top:280px;width:1px;height:16px;background:#3c3c3c;"></div>
<div class="cl" style="left:2084.3px;width:133.1px;">AA</div>
<div style="left:2319.9px;top:280px;width:1px;height:16px;background:#3c3c3c;"></div>
<div class="cl" style="left:2197.3px;width:133.1px;">AB</div>
<div style="left:2432.95px;top:280px;width:1px;height:16px;background:#3c3c3c;"></div>
<div class="cl" style="left:2310.4px;width:133.1px;">AC</div>
<div style="left:2546px;top:280px;width:1px;height:16px;background:#3c3c3c;"></div>
<div class="cl" style="left:2423.5px;width:133.1px;">AD</div>
<div style="left:2659.05px;top:280px;width:1px;height:16px;background:#3c3c3c;"></div>
<div class="cl" style="left:2536.5px;width:133.1px;">AE</div>
<div style="left:2772.1px;top:280px;width:1px;height:16px;background:#3c3c3c;"></div>
<div class="cl" style="left:2649.6px;width:133.1px;">AF</div>
<div style="left:2790.9px;top:280px;width:1px;height:16px;background:#3c3c3c;"></div>
<div class="cl" style="left:2762.2px;width:39.2px;letter-spacing:-1px;font-size:14px;">AG</div>
<div style="left:2811.8px;top:280px;width:1px;height:16px;background:#3c3c3c;"></div>
<div class="cl" style="left:2781.4px;width:40.9px;letter-spacing:-1px;font-size:14px;">AH</div>
<div style="left:2833.1px;top:280px;width:1px;height:16px;background:#3c3c3c;"></div>
<div class="cl" style="left:2802.3px;width:41.3px;letter-spacing:-1px;font-size:14px;">AI</div>
<div style="left:2854px;top:280px;width:1px;height:16px;background:#3c3c3c;"></div>
<div class="cl" style="left:2823.6px;width:40.9px;letter-spacing:-1px;font-size:14px;">AJ</div>
<div class="cl" style="left:2854px;width:8px;overflow:hidden;text-align:left">A</div>
<svg style="position:absolute;left:22px;top:281px" width="16" height="14"><path d="M14,1 L14,13 L2,13 Z" fill="#6a6a6a"/></svg>
<div style="left:11px;top:296.5px;width:28px;height:30.5px;background:#6a6a6a;"></div>
<div style="left:38px;top:296px;width:2px;height:32px;background:#1e7a45;"></div>
<div style="left:11px;top:326.5px;width:28px;height:1px;background:#3c3c3c;"></div>
<div class="rn" style="top:311.13px">1</div>
<div style="left:11px;top:354.1px;width:28px;height:1px;background:#3c3c3c;"></div>
<div class="rn" style="top:338.73px">2</div>
<div style="left:11px;top:381.9px;width:28px;height:1px;background:#3c3c3c;"></div>
<div class="rn" style="top:366.53px">3</div>
<div style="left:11px;top:401.9px;width:28px;height:1px;background:#3c3c3c;"></div>
<div class="rn" style="top:386.53px">4</div>
<div style="left:11px;top:431.2px;width:28px;height:1px;background:#3c3c3c;"></div>
<div class="rn" style="top:415.83px">5</div>
<div style="left:11px;top:435.6px;width:28px;height:1px;background:#3c3c3c;"></div>
<div style="left:11px;top:453.4px;width:28px;height:1px;background:#3c3c3c;"></div>
<div class="rn" style="top:438.03px">7</div>
<div style="left:11px;top:472.5px;width:28px;height:1px;background:#3c3c3c;"></div>
<div class="rn" style="top:457.13px">8</div>
<div style="left:11px;top:491.5px;width:28px;height:1px;background:#3c3c3c;"></div>
<div class="rn" style="top:476.13px">9</div>
<div style="left:11px;top:510.5px;width:28px;height:1px;background:#3c3c3c;"></div>
<div class="rn" style="top:495.13px">10</div>
<div style="left:11px;top:529.5px;width:28px;height:1px;background:#3c3c3c;"></div>
<div class="rn" style="top:514.13px">11</div>
<div style="left:11px;top:551.9px;width:28px;height:1px;background:#3c3c3c;"></div>
<div class="rn" style="top:536.53px">12</div>
<div style="left:11px;top:571px;width:28px;height:1px;background:#3c3c3c;"></div>
<div class="rn" style="top:555.63px">13</div>
<div style="left:11px;top:590px;width:28px;height:1px;background:#3c3c3c;"></div>
<div class="rn" style="top:574.63px">14</div>
<div style="left:11px;top:608.8px;width:28px;height:1px;background:#3c3c3c;"></div>
<div class="rn" style="top:593.43px">15</div>
<div style="left:11px;top:631px;width:28px;height:1px;background:#3c3c3c;"></div>
<div class="rn" style="top:615.63px">16</div>
<div style="left:11px;top:649.8px;width:28px;height:1px;background:#3c3c3c;"></div>
<div class="rn" style="top:634.43px">17</div>
<div style="left:11px;top:668.9px;width:28px;height:1px;background:#3c3c3c;"></div>
<div class="rn" style="top:653.53px">18</div>
<div style="left:11px;top:687.9px;width:28px;height:1px;background:#3c3c3c;"></div>
<div class="rn" style="top:672.53px">19</div>
<div style="left:11px;top:692.4px;width:28px;height:1px;background:#3c3c3c;"></div>
<div style="left:11px;top:711.4px;width:28px;height:1px;background:#3c3c3c;"></div>
<div class="rn" style="top:696.03px">21</div>
<div style="left:11px;top:730.5px;width:28px;height:1px;background:#3c3c3c;"></div>
<div class="rn" style="top:715.13px">22</div>
<div style="left:11px;top:734.1px;width:28px;height:1px;background:#3c3c3c;"></div>
<div style="left:11px;top:756.1px;width:28px;height:1px;background:#3c3c3c;"></div>
<div class="rn" style="top:740.73px">24</div>
<div style="left:11px;top:775.05px;width:28px;height:1px;background:#3c3c3c;"></div>
<div class="rn" style="top:759.68px">25</div>
<div style="left:11px;top:794px;width:28px;height:1px;background:#3c3c3c;"></div>
<div class="rn" style="top:778.63px">26</div>
<div style="left:11px;top:812.95px;width:28px;height:1px;background:#3c3c3c;"></div>
<div class="rn" style="top:797.58px">27</div>
<div style="left:11px;top:831.9px;width:28px;height:1px;background:#3c3c3c;"></div>
<div class="rn" style="top:816.53px">28</div>
<div style="left:11px;top:851px;width:28px;height:1px;background:#3c3c3c;"></div>
<div class="rn" style="top:835.63px">29</div>
<div style="left:11px;top:869.8px;width:28px;height:1px;background:#3c3c3c;"></div>
<div class="rn" style="top:854.43px">30</div>
<div style="left:11px;top:892px;width:28px;height:1px;background:#3c3c3c;"></div>
<div class="rn" style="top:876.63px">31</div>
<div style="left:11px;top:911.2px;width:28px;height:1px;background:#3c3c3c;"></div>
<div class="rn" style="top:895.83px">32</div>
<div style="left:11px;top:930.6px;width:28px;height:1px;background:#3c3c3c;"></div>
<div class="rn" style="top:915.23px">33</div>
<div style="left:11px;top:960px;width:28px;height:1px;background:#3c3c3c;"></div>
<div class="rn" style="top:944.63px">34</div>
<div style="left:11px;top:979px;width:28px;height:1px;background:#3c3c3c;"></div>
<div class="rn" style="top:963.63px">35</div>
<div style="left:11px;top:998px;width:28px;height:1px;background:#3c3c3c;"></div>
<div class="rn" style="top:982.63px">36</div>
<div style="left:11px;top:1017px;width:28px;height:1px;background:#3c3c3c;"></div>
<div class="rn" style="top:1001.63px">37</div>
<div style="left:11px;top:1036px;width:28px;height:1px;background:#3c3c3c;"></div>
<div class="rn" style="top:1020.63px">38</div>
<div style="left:11px;top:1055px;width:28px;height:1px;background:#3c3c3c;"></div>
<div class="rn" style="top:1039.63px">39</div>
<div style="left:11px;top:1074px;width:28px;height:1px;background:#3c3c3c;"></div>
<div class="rn" style="top:1058.63px">40</div>
<div style="left:11px;top:1093px;width:28px;height:1px;background:#3c3c3c;"></div>
<div class="rn" style="top:1077.63px">41</div>
<div style="left:11px;top:1112px;width:28px;height:1px;background:#3c3c3c;"></div>
<div class="rn" style="top:1096.63px">42</div>
<div style="left:11px;top:1131px;width:28px;height:1px;background:#3c3c3c;"></div>
<div class="rn" style="top:1115.63px">43</div>
<div style="left:11px;top:1150px;width:28px;height:1px;background:#3c3c3c;"></div>
<div class="rn" style="top:1134.63px">44</div>
<div style="left:11px;top:1169px;width:28px;height:1px;background:#3c3c3c;"></div>
<div class="rn" style="top:1153.63px">45</div>
<div style="left:11px;top:1188px;width:28px;height:1px;background:#3c3c3c;"></div>
<div class="rn" style="top:1172.63px">46</div>
<div style="left:11px;top:1207px;width:28px;height:1px;background:#3c3c3c;"></div>
<div class="rn" style="top:1191.63px">47</div>
<div style="left:11px;top:1226px;width:28px;height:1px;background:#3c3c3c;"></div>
<div class="rn" style="top:1210.63px">48</div>
<div style="left:11px;top:1245px;width:28px;height:1px;background:#3c3c3c;"></div>
<div class="rn" style="top:1229.63px">49</div>
<div style="left:11px;top:1264px;width:28px;height:1px;background:#3c3c3c;"></div>
<div class="rn" style="top:1248.63px">50</div>
<div style="left:11px;top:1283px;width:28px;height:1px;background:#3c3c3c;"></div>
<div class="rn" style="top:1267.63px">51</div>
<div style="left:11px;top:1302px;width:28px;height:1px;background:#3c3c3c;"></div>
<div class="rn" style="top:1286.63px">52</div>
<div style="left:11px;top:1321px;width:28px;height:1px;background:#3c3c3c;"></div>
<div class="rn" style="top:1305.63px">53</div>
<div style="left:11px;top:1340.7px;width:28px;height:1px;background:#3c3c3c;"></div>
<div class="rn" style="top:1325.33px">54</div>
<div style="left:11px;top:1370.2px;width:28px;height:1px;background:#3c3c3c;"></div>
<div class="rn" style="top:1354.83px">55</div>
<div style="left:11px;top:1374.4px;width:28px;height:1px;background:#3c3c3c;"></div>
<div style="left:11px;top:1392.7px;width:28px;height:1px;background:#3c3c3c;"></div>
<div class="rn" style="top:1377.33px">57</div>
<div style="left:11px;top:1396.9px;width:28px;height:1px;background:#3c3c3c;"></div>
<div style="left:11px;top:1416px;width:28px;height:1px;background:#3c3c3c;"></div>
<div class="rn" style="top:1400.63px">59</div>
<div style="left:11px;top:1435px;width:28px;height:1px;background:#3c3c3c;"></div>
<div class="rn" style="top:1419.63px">60</div>
<div style="left:11px;top:1457.2px;width:28px;height:1px;background:#3c3c3c;"></div>
<div class="rn" style="top:1441.83px">61</div>
<div style="left:11px;top:1461.2px;width:28px;height:1px;background:#3c3c3c;"></div>
<div style="left:11px;top:1479.9px;width:28px;height:1px;background:#3c3c3c;"></div>
<div class="rn" style="top:1464.53px">63</div>
<div style="left:11px;top:1499.1px;width:28px;height:1px;background:#3c3c3c;"></div>
<div class="rn" style="top:1483.73px">64</div>
<div style="left:11px;top:1521.1px;width:28px;height:1px;background:#3c3c3c;"></div>
<div class="rn" style="top:1505.73px">65</div>
<div style="left:11px;top:1525.1px;width:28px;height:1px;background:#3c3c3c;"></div>
<div style="left:11px;top:1547.3px;width:28px;height:1px;background:#3c3c3c;"></div>
<div class="rn" style="top:1531.93px">67</div>
<div style="left:11px;top:1566.5px;width:28px;height:1px;background:#3c3c3c;"></div>
<div class="rn" style="top:1551.13px">68</div>
<div style="left:11px;top:1570.5px;width:28px;height:1px;background:#3c3c3c;"></div>
<div style="left:11px;top:1589.4px;width:28px;height:1px;background:#3c3c3c;"></div>
<div class="rn" style="top:1574.03px">70</div>
<div style="left:11px;top:1607.6px;width:28px;height:1px;background:#3c3c3c;"></div>
<div class="rn" style="top:1592.23px">72</div>
<div style="left:11px;top:1630.4px;width:28px;height:1px;background:#3c3c3c;"></div>
<div class="rn" style="top:1615.03px">73</div>
<div style="left:11px;top:1649.9px;width:28px;height:1px;background:#3c3c3c;"></div>
<div class="rn" style="top:1634.53px">74</div>
<div style="left:11px;top:1679.9px;width:28px;height:1px;background:#3c3c3c;"></div>
<div class="rn" style="top:1664.53px">75</div>
<div style="left:11px;top:1670px;width:2880px;height:47px;background:#0a0a0a;"></div>
<div style="left:11px;top:1717px;width:2880px;height:34px;background:#141414;"></div>
<div style="left:2860px;top:278px;width:31px;height:1392px;background:#0f0f0f;"></div>
<svg style="position:absolute;left:34px;top:34px" width="26" height="26" viewBox="0 0 26 26"><defs><clipPath id="xl"><rect x="3.9" y="0.8" width="20" height="24.3" rx="2.8"/></clipPath></defs>
<g clip-path="url(#xl)"><rect x="3" y="0" width="22" height="26" fill="#22782f"/><rect x="3" y="0" width="10.1" height="9" fill="#6bd15a"/><rect x="13.1" y="0" width="12" height="9" fill="#b7e66d"/><rect x="13.1" y="9" width="12" height="17" fill="#236f2b"/></g>
<rect x="1.1" y="8.7" width="12.6" height="12.7" rx="2.9" fill="#0f5f3c"/>
<path d="M4.5,11.6 L10.6,18.6 M10.6,11.6 L4.5,18.6" stroke="#fff" stroke-width="2.3"/></svg>
<div class="u" style="top:38.56px;left:95.50px;font-size:18px;line-height:18px;color:#f2f2f2;letter-spacing:-0.07px;">cow-calf-operation.xlsx</div>
<div class="u" style="top:38.56px;left:287.50px;font-size:18px;line-height:18px;color:#f2f2f2;">-</div>
<div class="u" style="top:38.56px;left:304.50px;font-size:18px;line-height:18px;color:#f2f2f2;letter-spacing:-0.45px;">Read-Only</div>
<svg style="position:absolute;left:394px;top:42px" width="16" height="12" viewBox="0 0 16 12"><path d="M2,2.5 L8,9 L14,2.5" fill="none" stroke="#f2f2f2" stroke-width="1.7" stroke-linecap="round" stroke-linejoin="round"/></svg>
<svg style="position:absolute;left:2472px;top:32px" width="28" height="30" viewBox="0 0 28 30"><circle cx="17" cy="11.6" r="6.4" fill="none" stroke="#f2f2f2" stroke-width="1.7"/><path d="M12.4,16.4 L4.4,25" stroke="#f2f2f2" stroke-width="1.7" stroke-linecap="round"/></svg>
<svg style="position:absolute;left:2552px;top:28px" width="38" height="38" viewBox="0 0 38 38"><defs><clipPath id="av"><circle cx="19" cy="18.9" r="18"/></clipPath><filter id="bl" x="-10%" y="-10%" width="120%" height="120%"><feGaussianBlur stdDeviation="0.9"/></filter></defs>
<g clip-path="url(#av)"><g filter="url(#bl)"><rect x="-2" y="-2" width="42" height="42" fill="#b9dcd8"/><rect x="-2" y="-2" width="42" height="14" fill="#b4c2e6"/><rect x="-2" y="3" width="42" height="5" fill="#c6cdea"/>
<path d="M-2,40 L-2,33 C6,29 11,27 13,27 L25.5,27 C29,28 34,30 40,34 L40,40 Z" fill="#dad2cb"/>
<path d="M13.4,27 L19.4,40 L25.6,27 Z" fill="#a8705f"/>
<ellipse cx="19.4" cy="18.6" rx="7.4" ry="10.4" fill="#b98573"/><ellipse cx="19.6" cy="11.2" rx="6.4" ry="3.6" fill="#a58478"/><ellipse cx="18.8" cy="22" rx="4.6" ry="5.4" fill="#c49080"/></g></g></svg>
<svg style="position:absolute;left:2628px;top:34px" width="26" height="24" viewBox="0 0 26 24"><path d="M7,2.5 H19 L24.3,9 L13,22 L1.7,9 Z M1.7,9 H24.3 M7,2.5 L9.5,9 L13,22 L16.5,9 L19,2.5 M9.5,9 L13,2.5 L16.5,9" fill="none" stroke="#f2f2f2" stroke-width="1.5" stroke-linejoin="round"/></svg>
<div style="left:2703px;top:44.7px;width:15.5px;height:1.6px;background:#f2f2f2;"></div>
<svg style="position:absolute;left:2773px;top:37px" width="20" height="20" viewBox="0 0 20 20"><rect x="2.3" y="5.5" width="11.5" height="11.5" rx="2.6" fill="none" stroke="#f2f2f2" stroke-width="1.6"/><path d="M6,2.6 H13.5 A3.6,3.6 0 0 1 17.1,6.2 V13.6" fill="none" stroke="#f2f2f2" stroke-width="1.6"/></svg>
<svg style="position:absolute;left:2845px;top:38px" width="20" height="20" viewBox="0 0 20 20"><path d="M2.8,2.3 L17,16.3 M17,2.3 L2.8,16.3" stroke="#f2f2f2" stroke-width="1.7" stroke-linecap="round"/></svg>
<div style="left:2621px;top:87px;width:135px;height:36px;background:#2b2b2b;border:1px solid #6a6a6a;border-radius:7px"></div>
<svg style="position:absolute;left:2628px;top:95.5px" width="20" height="19" viewBox="0 0 20 19"><path d="M1.8,1.8 H16.8 V12.2 H7.2 L3.6,15.8 V12.2 H1.8 Z" fill="none" stroke="#f2f2f2" stroke-width="1.6" stroke-linejoin="round"/></svg>
<div class="u" style="top:96.62px;left:2652.80px;font-size:18.4px;line-height:18.4px;color:#f2f2f2;letter-spacing:0.56px;">Comments</div>
<div style="left:2768px;top:87px;width:105px;height:36px;background:#32a862;border-radius:7px"></div>
<svg style="position:absolute;left:2774px;top:96px" width="20" height="18" viewBox="0 0 20 18"><path d="M6.5,4.2 H2.2 V16 H14.8 V12.5" fill="none" stroke="#111" stroke-width="1.6" stroke-linejoin="round"/><path d="M11.5,1.5 L17.6,6.4 L11.5,11.2 V8.3 C8.5,8.2 6.8,9.3 5.8,11.8 C6,7.6 8.2,5 11.5,4.6 Z" fill="none" stroke="#111" stroke-width="1.5" stroke-linejoin="round"/></svg>
<div class="u" style="top:96.62px;left:2800.00px;font-size:18.4px;line-height:18.4px;color:#0c0c0c;letter-spacing:-0.42px;">Share</div>
<svg style="position:absolute;left:2856.6px;top:102.2px" width="11.2" height="7.2" viewBox="0 0 11.2 7.2"><path d="M2,1.5 L5.6,5.7 L9.2,1.5" fill="none" stroke="#0c0c0c" stroke-width="1.6" stroke-linecap="round" stroke-linejoin="round"/></svg>
<div class="u" style="top:97.69px;left:42.20px;font-size:18.8px;line-height:18.8px;color:#f2f2f2;letter-spacing:-0.10px;">File</div>
<div class="u" style="top:97.69px;left:111.80px;font-size:18.8px;line-height:18.8px;color:#f2f2f2;font-weight:bold;letter-spacing:0.57px;">Home</div>
<div class="u" style="top:97.69px;left:198.40px;font-size:18.8px;line-height:18.8px;color:#f2f2f2;letter-spacing:0.05px;">Insert</div>
<div class="u" style="top:97.69px;left:277.40px;font-size:18.8px;line-height:18.8px;color:#f2f2f2;letter-spacing:0.11px;">Draw</div>
<div class="u" style="top:97.69px;left:353.60px;font-size:18.8px;line-height:18.8px;color:#f2f2f2;letter-spacing:-0.09px;">Page Layout</div>
<div class="u" style="top:97.69px;left:491.50px;font-size:18.8px;line-height:18.8px;color:#f2f2f2;letter-spacing:0.08px;">Formulas</div>
<div class="u" style="top:97.69px;left:600.30px;font-size:18.8px;line-height:18.8px;color:#f2f2f2;letter-spacing:0.15px;">Data</div>
<div class="u" style="top:97.69px;left:671.00px;font-size:18.8px;line-height:18.8px;color:#f2f2f2;letter-spacing:-0.17px;">Review</div>
<div class="u" style="top:97.69px;left:762.20px;font-size:18.8px;line-height:18.8px;color:#f2f2f2;letter-spacing:0.20px;">View</div>
<div class="u" style="top:97.69px;left:834.00px;font-size:18.8px;line-height:18.8px;color:#f2f2f2;letter-spacing:0.83px;">Automate</div>
<div class="u" style="top:97.69px;left:951.70px;font-size:18.8px;line-height:18.8px;color:#f2f2f2;letter-spacing:0.36px;">Help</div>
<div style="left:111px;top:120.2px;width:58px;height:3px;background:#5fc38b;border-radius:1.5px"></div>
<div style="left:23px;top:128px;width:2856px;height:149.7px;background:#292929;border-radius:11px"></div>
<div style="left:281.8px;top:134.6px;width:1.1px;height:134.7px;background:#585858;"></div>
<div style="left:633px;top:134.6px;width:1.1px;height:134.7px;background:#585858;"></div>
<div style="left:1082.7px;top:134.6px;width:1.1px;height:134.7px;background:#585858;"></div>
<div style="left:1324.6px;top:134.6px;width:1.1px;height:134.7px;background:#585858;"></div>
<div style="left:1544px;top:134.6px;width:1.1px;height:134.7px;background:#585858;"></div>
<div style="left:1868.1px;top:134.6px;width:1.1px;height:134.7px;background:#585858;"></div>
<div style="left:1963px;top:134.6px;width:1.1px;height:134.7px;background:#585858;"></div>
<div style="left:2055.8px;top:134.6px;width:1.1px;height:134.7px;background:#585858;"></div>
<svg style="position:absolute;left:53px;top:139px" width="46" height="50" viewBox="0 0 46 50"><path d="M12,9 H4 V43 H22" fill="none" stroke="#9a9a9a" stroke-width="2.6"/><path d="M26,9 H33 V19" fill="none" stroke="#9a9a9a" stroke-width="2.6"/>
<path d="M11,12.5 V7.5 H15 C15,3.5 23,3.5 23,7.5 H27 V12.5 Z" fill="none" stroke="#9a9a9a" stroke-width="1.7"/>
<rect x="23" y="21" width="19" height="25.5" fill="none" stroke="#a8a8a8" stroke-width="1.8"/></svg>
<div class="u" style="top:195.14px;left:52.40px;font-size:17.2px;line-height:17.2px;color:#7b7b7b;letter-spacing:-0.92px;">Paste</div>
<svg style="position:absolute;left:65.6px;top:222.8px" width="12" height="8" viewBox="0 0 12 8"><path d="M2,1.9 L6,6.1 L10,1.9" fill="none" stroke="#6a6a6a" stroke-width="1.6" stroke-linecap="round" stroke-linejoin="round"/></svg>
<svg style="position:absolute;left:112px;top:138px" width="26" height="28" viewBox="0 0 26 28"><path d="M8.2,2 L16.2,19.5 M17.8,2 L9.8,19.5" stroke="#e6e6e6" stroke-width="1.4" fill="none"/>
<circle cx="8.2" cy="22.3" r="2.9" fill="none" stroke="#3a9be0" stroke-width="1.7"/><circle cx="17.8" cy="22.3" r="2.9" fill="none" stroke="#3a9be0" stroke-width="1.7"/></svg>
<div class="u" style="top:144.72px;left:142.50px;font-size:16.4px;line-height:16.4px;color:#f2f2f2;letter-spacing:0.33px;">Cut</div>
<svg style="position:absolute;left:110px;top:178px" width="28" height="27" viewBox="0 0 28 27"><path d="M9.5,19 H2.5 V2.5 H11 L13.5,5" fill="none" stroke="#e6e6e6" stroke-width="1.6"/>
<path d="M11,7.5 H19.5 L24.5,12.5 V24.5 H11 Z" fill="none" stroke="#e6e6e6" stroke-width="1.6" stroke-linejoin="round"/><path d="M19.5,7.5 V12.5 H24.5 M14.5,16.5 H21.5 M14.5,20 H21.5" fill="none" stroke="#e6e6e6" stroke-width="1.4"/></svg>
<div class="u" style="top:183.82px;left:142.50px;font-size:16.4px;line-height:16.4px;color:#f2f2f2;letter-spacing:0.70px;">Copy</div>
<svg style="position:absolute;left:209.85px;top:188.25px" width="10.7" height="6.7" viewBox="0 0 10.7 6.7"><path d="M2,1.25 L5.35,5.45 L8.7,1.25" fill="none" stroke="#e8e8e8" stroke-width="1.7" stroke-linecap="round" stroke-linejoin="round"/></svg>
<svg style="position:absolute;left:110px;top:216px" width="28" height="26" viewBox="0 0 28 26"><path d="M3,12 L13,7.5 L19.5,15 L11,23.5 Z" fill="none" stroke="#e6e6e6" stroke-width="1.5" stroke-linejoin="round"/>
<path d="M6,16.5 L15,18.8 L11,23.5 Z" fill="#f0a530"/><path d="M15.5,9.5 L23.5,2.8 L26,5.6 L18.2,12.5" fill="none" stroke="#e6e6e6" stroke-width="1.5" stroke-linejoin="round"/></svg>
<div class="u" style="top:223.12px;left:142.50px;font-size:16.4px;line-height:16.4px;color:#f2f2f2;letter-spacing:0.43px;">Format Painter</div>
<div class="u" style="top:255.07px;left:109.20px;font-size:14.8px;line-height:14.8px;color:#f2f2f2;letter-spacing:0.54px;">Clipboard</div>
<svg style="position:absolute;left:264.6px;top:256.6px" width="13" height="13" viewBox="0 0 13 13"><path d="M1,7 V1 H7" fill="none" stroke="#e8e8e8" stroke-width="1.6"/><path d="M4.5,4.5 L11.5,11.5 M6,11.8 H11.8 V6" fill="none" stroke="#e8e8e8" stroke-width="1.6"/></svg>
<div style="left:295px;top:146.2px;width:180.6px;height:35.6px;border:1px solid #5e5e5e;border-radius:7px"></div>
<div class="u" style="top:155.59px;left:298.40px;font-size:18.2px;line-height:18.2px;color:#f2f2f2;letter-spacing:-0.27px;">Tahoma</div>
<svg style="position:absolute;left:462px;top:160.7px" width="11" height="7" viewBox="0 0 11 7"><path d="M2,1.4 L5.5,5.6 L9,1.4" fill="none" stroke="#e8e8e8" stroke-width="1.7" stroke-linecap="round" stroke-linejoin="round"/></svg>
<div style="left:479.4px;top:146.2px;width:64.4px;height:35.6px;border:1px solid #5e5e5e;border-radius:7px"></div>
<div class="u" style="top:155.59px;left:482.60px;font-size:18.2px;line-height:18.2px;color:#f2f2f2;">8</div>
<svg style="position:absolute;left:529.5px;top:160.7px" width="11" height="7" viewBox="0 0 11 7"><path d="M2,1.4 L5.5,5.6 L9,1.4" fill="none" stroke="#e8e8e8" stroke-width="1.7" stroke-linecap="round" stroke-linejoin="round"/></svg>
<div class="u" style="top:149.84px;left:553.60px;font-size:25px;line-height:25px;color:#dcdcdc;">A</div>
<svg style="position:absolute;left:569.5px;top:152.5px" width="9" height="7" viewBox="0 0 9 7"><path d="M1.2,5.6 L4.5,1.6 L7.8,5.6" fill="none" stroke="#3a9be0" stroke-width="1.6" stroke-linejoin="round" stroke-linecap="round"/></svg>
<div class="u" style="top:154.07px;left:595.30px;font-size:20px;line-height:20px;color:#dcdcdc;">A</div>
<svg style="position:absolute;left:608.3px;top:152.8px" width="9" height="7" viewBox="0 0 9 7"><path d="M1.2,1.4 L4.5,5.4 L7.8,1.4" fill="none" stroke="#3a9be0" stroke-width="1.6" stroke-linejoin="round" stroke-linecap="round"/></svg>
<div class="u" style="top:200.58px;left:307.50px;font-size:19.4px;line-height:19.4px;color:#d8d8d8;font-weight:bold;">B</div>
<div class="u" style="top:200.25px;left:347.80px;font-size:20px;line-height:20px;color:#d8d8d8;font-family:'Liberation Serif',serif;font-style:italic;">I</div>
<div class="u" style="top:200.87px;left:384.30px;font-size:17.4px;line-height:17.4px;color:#d8d8d8;">U</div>
<div style="left:384.3px;top:219.2px;width:12.5px;height:1.6px;background:#d8d8d8;"></div>
<svg style="position:absolute;left:413.85px;top:209.05px" width="10.7" height="6.7" viewBox="0 0 10.7 6.7"><path d="M2,1.25 L5.35,5.45 L8.7,1.25" fill="none" stroke="#e8e8e8" stroke-width="1.7" stroke-linecap="round" stroke-linejoin="round"/></svg>
<div style="left:433.9px;top:193.7px;width:1.1px;height:35.8px;background:#585858;"></div>
<svg style="position:absolute;left:443px;top:199px" width="26" height="25" viewBox="0 0 26 25"><rect x="1.8" y="1.8" width="21.4" height="16.6" fill="none" stroke="#dcdcdc" stroke-width="1.5" stroke-dasharray="1.6 1.9"/>
<path d="M12.5,2 V18 M2,10.2 H23" stroke="#dcdcdc" stroke-width="1.4" stroke-dasharray="1.6 1.9"/><path d="M1,22.6 H24" stroke="#dcdcdc" stroke-width="1.8"/></svg>
<svg style="position:absolute;left:478.95px;top:209.05px" width="10.7" height="6.7" viewBox="0 0 10.7 6.7"><path d="M2,1.25 L5.35,5.45 L8.7,1.25" fill="none" stroke="#e8e8e8" stroke-width="1.7" stroke-linecap="round" stroke-linejoin="round"/></svg>
<div style="left:499px;top:193.7px;width:1.1px;height:35.8px;background:#585858;"></div>
<svg style="position:absolute;left:508px;top:199px" width="28" height="26" viewBox="0 0 28 26"><path d="M10.5,8 L17.5,15.2 L11.5,18.6 L5,11.5 Z" fill="none" stroke="#dcdcdc" stroke-width="1.5" stroke-linejoin="round"/>
<path d="M11.5,9 V3.4 C11.5,1.2 15.5,1.2 15.5,3.4 V12" fill="none" stroke="#dcdcdc" stroke-width="1.4"/>
<path d="M17.5,8.5 C21.5,8.5 22.6,12 21.8,15.8 C21,13.5 20,12.2 18,12 Z" fill="#4aa3e6"/><rect x="1" y="19" width="24.2" height="6" fill="#fff100"/></svg>
<svg style="position:absolute;left:543.95px;top:209.05px" width="10.7" height="6.7" viewBox="0 0 10.7 6.7"><path d="M2,1.25 L5.35,5.45 L8.7,1.25" fill="none" stroke="#e8e8e8" stroke-width="1.7" stroke-linecap="round" stroke-linejoin="round"/></svg>
<div class="u" style="top:198.12px;left:573.60px;font-size:21.6px;line-height:21.6px;color:#dcdcdc;">A</div>
<div style="left:570px;top:218.4px;width:24px;height:5.8px;background:#f40000;"></div>
<svg style="position:absolute;left:605.15px;top:209.05px" width="10.7" height="6.7" viewBox="0 0 10.7 6.7"><path d="M2,1.25 L5.35,5.45 L8.7,1.25" fill="none" stroke="#e8e8e8" stroke-width="1.7" stroke-linecap="round" stroke-linejoin="round"/></svg>
<div class="u" style="top:255.07px;left:430.50px;font-size:14.8px;line-height:14.8px;color:#f2f2f2;letter-spacing:0.27px;">Font</div>
<svg style="position:absolute;left:615.6px;top:256.6px" width="13" height="13" viewBox="0 0 13 13"><path d="M1,7 V1 H7" fill="none" stroke="#e8e8e8" stroke-width="1.6"/><path d="M4.5,4.5 L11.5,11.5 M6,11.8 H11.8 V6" fill="none" stroke="#e8e8e8" stroke-width="1.6"/></svg>
<div style="left:653px;top:152.2px;width:21.8px;height:1.6px;background:#dcdcdc;"></div>
<div style="left:657.142px;top:158.2px;width:13.516px;height:1.6px;background:#dcdcdc;"></div>
<div style="left:653px;top:164px;width:21.8px;height:1.6px;background:#dcdcdc;"></div>
<div style="left:685.4px;top:146.5px;width:35.6px;height:35.2px;background:#3d3d3d;border:1px solid #8c8c8c;border-radius:7px"></div>
<div style="left:692px;top:156.5px;width:21.8px;height:1.6px;background:#dcdcdc;"></div>
<div style="left:696.142px;top:162.5px;width:13.516px;height:1.6px;background:#dcdcdc;"></div>
<div style="left:692px;top:168.4px;width:21.8px;height:1.6px;background:#dcdcdc;"></div>
<div style="left:731px;top:162.5px;width:21.8px;height:1.6px;background:#dcdcdc;"></div>
<div style="left:735.142px;top:168.4px;width:13.516px;height:1.6px;background:#dcdcdc;"></div>
<div style="left:731px;top:174.2px;width:21.8px;height:1.6px;background:#dcdcdc;"></div>
<div style="left:762.8px;top:146.5px;width:1.1px;height:35.1px;background:#585858;"></div>
<svg style="position:absolute;left:770px;top:148px" width="32" height="30" viewBox="0 0 32 30"><g transform="rotate(-42 12 14)"><text x="2" y="18" font-family="Liberation Sans" font-size="13.5" fill="#dcdcdc">ab</text></g>
<path d="M9.5,26 L27,8.5 M19.5,7.6 H27.8 V16" fill="none" stroke="#3a9be0" stroke-width="1.7" stroke-linejoin="round"/></svg>
<svg style="position:absolute;left:804.65px;top:160.95px" width="10.7" height="6.7" viewBox="0 0 10.7 6.7"><path d="M2,1.25 L5.35,5.45 L8.7,1.25" fill="none" stroke="#e8e8e8" stroke-width="1.7" stroke-linecap="round" stroke-linejoin="round"/></svg>
<div style="left:851.1px;top:143.7px;width:1.1px;height:94.3px;background:#585858;"></div>
<svg style="position:absolute;left:868px;top:150px" width="28" height="28" viewBox="0 0 28 28"><text x="2.5" y="11.5" font-family="Liberation Sans" font-size="13" fill="#dcdcdc">ab</text><text x="2.5" y="23.5" font-family="Liberation Sans" font-size="13" fill="#dcdcdc">c</text>
<path d="M20.5,11 C25,11.5 25,20.5 20,20.5 H12.5 M16,16.8 L12,20.6 L16,24.4" fill="none" stroke="#3a9be0" stroke-width="1.7" stroke-linecap="round" stroke-linejoin="round"/></svg>
<div class="u" style="top:156.92px;left:897.90px;font-size:16.4px;line-height:16.4px;color:#f2f2f2;letter-spacing:0.43px;">Wrap Text</div>
<div style="left:653px;top:201.1px;width:21.8px;height:1.6px;background:#dcdcdc;"></div>
<div style="left:653px;top:207.1px;width:15.696px;height:1.6px;background:#dcdcdc;"></div>
<div style="left:653px;top:213.2px;width:21.8px;height:1.6px;background:#dcdcdc;"></div>
<div style="left:653px;top:219.2px;width:15.696px;height:1.6px;background:#dcdcdc;"></div>
<div style="left:692px;top:201.1px;width:21.8px;height:1.6px;background:#dcdcdc;"></div>
<div style="left:695.052px;top:207.1px;width:15.696px;height:1.6px;background:#dcdcdc;"></div>
<div style="left:692px;top:213.2px;width:21.8px;height:1.6px;background:#dcdcdc;"></div>
<div style="left:695.052px;top:219.2px;width:15.696px;height:1.6px;background:#dcdcdc;"></div>
<div style="left:731px;top:201.1px;width:21.8px;height:1.6px;background:#dcdcdc;"></div>
<div style="left:737.104px;top:207.1px;width:15.696px;height:1.6px;background:#dcdcdc;"></div>
<div style="left:731px;top:213.2px;width:21.8px;height:1.6px;background:#dcdcdc;"></div>
<div style="left:737.104px;top:219.2px;width:15.696px;height:1.6px;background:#dcdcdc;"></div>
<div style="left:762.8px;top:194px;width:1.1px;height:36.5px;background:#585858;"></div>
<div style="left:774px;top:201.1px;width:21.8px;height:1.6px;background:#dcdcdc;"></div>
<div style="left:774px;top:219.2px;width:21.8px;height:1.6px;background:#dcdcdc;"></div>
<div style="left:786.5px;top:207.1px;width:9.3px;height:1.6px;background:#dcdcdc;"></div>
<div style="left:786.5px;top:213.2px;width:9.3px;height:1.6px;background:#dcdcdc;"></div>
<svg style="position:absolute;left:774px;top:205px" width="12" height="12" viewBox="0 0 12 12"><path d="M10.5,6 H1.8 M5.2,2.4 L1.6,6 L5.2,9.6" fill="none" stroke="#3a9be0" stroke-width="1.7" stroke-linecap="round" stroke-linejoin="round"/></svg>
<div style="left:813px;top:201.1px;width:21.8px;height:1.6px;background:#dcdcdc;"></div>
<div style="left:813px;top:219.2px;width:21.8px;height:1.6px;background:#dcdcdc;"></div>
<div style="left:825.5px;top:207.1px;width:9.3px;height:1.6px;background:#dcdcdc;"></div>
<div style="left:825.5px;top:213.2px;width:9.3px;height:1.6px;background:#dcdcdc;"></div>
<svg style="position:absolute;left:813px;top:205px" width="12" height="12" viewBox="0 0 12 12"><path d="M1.2,6 H9.8 M6.4,2.4 L10,6 L6.4,9.6" fill="none" stroke="#3a9be0" stroke-width="1.7" stroke-linecap="round" stroke-linejoin="round"/></svg>
<svg style="position:absolute;left:866px;top:199px" width="26" height="25" viewBox="0 0 26 25"><rect x="1.5" y="1.5" width="22" height="21" fill="none" stroke="#dcdcdc" stroke-width="1.5"/><path d="M12.5,1.5 V5.5 M12.5,18.5 V22.5" stroke="#dcdcdc" stroke-width="1.4"/>
<rect x="1.5" y="5.5" width="22" height="13" fill="none" stroke="#3a9be0" stroke-width="1.7"/><path d="M5,12 H20 M8,9 L5,12 L8,15 M17,9 L20,12 L17,15" fill="none" stroke="#3a9be0" stroke-width="1.6" stroke-linejoin="round" stroke-linecap="round"/></svg>
<div class="u" style="top:204.02px;left:897.90px;font-size:16.4px;line-height:16.4px;color:#f2f2f2;letter-spacing:0.67px;">Merge &amp; Center</div>
<svg style="position:absolute;left:1048.65px;top:209.05px" width="10.7" height="6.7" viewBox="0 0 10.7 6.7"><path d="M2,1.25 L5.35,5.45 L8.7,1.25" fill="none" stroke="#e8e8e8" stroke-width="1.7" stroke-linecap="round" stroke-linejoin="round"/></svg>
<div class="u" style="top:255.27px;left:810.00px;font-size:14.8px;line-height:14.8px;color:#f2f2f2;letter-spacing:0.69px;">Alignment</div>
<svg style="position:absolute;left:1065.6px;top:256.6px" width="13" height="13" viewBox="0 0 13 13"><path d="M1,7 V1 H7" fill="none" stroke="#e8e8e8" stroke-width="1.6"/><path d="M4.5,4.5 L11.5,11.5 M6,11.8 H11.8 V6" fill="none" stroke="#e8e8e8" stroke-width="1.6"/></svg>
<div style="left:1096.4px;top:146.5px;width:217px;height:35.2px;border:1px solid #5e5e5e;border-radius:7px"></div>
<div class="u" style="top:155.90px;left:1099.80px;font-size:17.6px;line-height:17.6px;color:#f2f2f2;letter-spacing:-0.70px;">General</div>
<svg style="position:absolute;left:1299.5px;top:160.8px" width="11" height="7" viewBox="0 0 11 7"><path d="M2,1.4 L5.5,5.6 L9,1.4" fill="none" stroke="#e8e8e8" stroke-width="1.7" stroke-linecap="round" stroke-linejoin="round"/></svg>
<div class="u" style="top:198.44px;left:1106.80px;font-size:25px;line-height:25px;color:#dcdcdc;">$</div>
<svg style="position:absolute;left:1136.65px;top:209.05px" width="10.7" height="6.7" viewBox="0 0 10.7 6.7"><path d="M2,1.25 L5.35,5.45 L8.7,1.25" fill="none" stroke="#e8e8e8" stroke-width="1.7" stroke-linecap="round" stroke-linejoin="round"/></svg>
<div class="u" style="top:197.34px;left:1163.00px;font-size:27px;line-height:27px;color:#dcdcdc;">%</div>
<svg style="position:absolute;left:1207px;top:202px" width="16" height="22" viewBox="0 0 16 22"><path d="M8.2,1.6 C12.2,1.6 13.6,5 12.8,9 C11.8,14 8,17.4 3.4,18.8 L2.8,17 C6,15.6 8,13.2 8.4,10.4 C5.4,10.6 3.6,8.8 3.6,6.2 C3.6,3.4 5.6,1.6 8.2,1.6 Z" fill="#dcdcdc"/></svg>
<div style="left:1235px;top:194px;width:1.1px;height:36.5px;background:#585858;"></div>
<svg style="position:absolute;left:1243px;top:198px" width="28" height="27" viewBox="0 0 28 27"><path d="M12.5,7 H2.4 M6,3 L2,7 L6,11" fill="none" stroke="#3a9be0" stroke-width="1.7" stroke-linecap="round" stroke-linejoin="round"/>
<text x="15" y="12" font-family="Liberation Sans" font-size="12.5" fill="#dcdcdc">0</text><text x="4" y="24.5" font-family="Liberation Sans" font-size="12.5" fill="#dcdcdc">.00</text></svg>
<svg style="position:absolute;left:1282px;top:198px" width="28" height="27" viewBox="0 0 28 27"><text x="6" y="12" font-family="Liberation Sans" font-size="12.5" fill="#dcdcdc">.00</text><text x="14" y="24.5" font-family="Liberation Sans" font-size="12.5" fill="#dcdcdc">.0</text>
<path d="M1.5,19.5 H11.6 M8,15.5 L12,19.5 L8,23.5" fill="none" stroke="#3a9be0" stroke-width="1.7" stroke-linecap="round" stroke-linejoin="round"/></svg>
<div class="u" style="top:255.27px;left:1163.40px;font-size:14.8px;line-height:14.8px;color:#f2f2f2;letter-spacing:0.73px;">Number</div>
<svg style="position:absolute;left:1307.4px;top:256.6px" width="13" height="13" viewBox="0 0 13 13"><path d="M1,7 V1 H7" fill="none" stroke="#e8e8e8" stroke-width="1.6"/><path d="M4.5,4.5 L11.5,11.5 M6,11.8 H11.8 V6" fill="none" stroke="#e8e8e8" stroke-width="1.6"/></svg>
<svg style="position:absolute;left:1343px;top:144px" width="54" height="36" viewBox="0 0 54 36"><g transform="translate(6,1)"><rect x="1" y="1" width="40" height="31.6" fill="none" stroke="#cfcfcf" stroke-width="1.6"/><path d="M14.3333,1 V32.6" stroke="#cfcfcf" stroke-width="1.4"/><path d="M1,11.5333 H41" stroke="#cfcfcf" stroke-width="1.4"/><path d="M27.6667,1 V32.6" stroke="#cfcfcf" stroke-width="1.4"/><path d="M1,22.0667 H41" stroke="#cfcfcf" stroke-width="1.4"/></g><rect x="14" y="12.5" width="38" height="10.6" fill="#1479d4"/><path d="M20,12.5 V23 M34,12.5 V23" stroke="#292929" stroke-width="1.2" opacity=".6"/><path d="M22,17.8 H3 M9.5,10.8 L2.6,17.8 L9.5,24.8" fill="none" stroke="#3a9be0" stroke-width="1.9" stroke-linejoin="round" stroke-linecap="round"/></svg>
<div class="u" style="top:195.61px;left:1347.90px;font-size:17px;line-height:17px;color:#f2f2f2;letter-spacing:0.06px;">Insert</div>
<svg style="position:absolute;left:1362.65px;top:223.45px" width="10.7" height="6.7" viewBox="0 0 10.7 6.7"><path d="M2,1.25 L5.35,5.45 L8.7,1.25" fill="none" stroke="#e8e8e8" stroke-width="1.7" stroke-linecap="round" stroke-linejoin="round"/></svg>
<svg style="position:absolute;left:1411px;top:144px" width="50" height="36" viewBox="0 0 50 36"><g transform="translate(2,1)"><rect x="1" y="1" width="40" height="31.6" fill="none" stroke="#cfcfcf" stroke-width="1.6"/><path d="M14.3333,1 V32.6" stroke="#cfcfcf" stroke-width="1.4"/><path d="M1,11.5333 H41" stroke="#cfcfcf" stroke-width="1.4"/><path d="M27.6667,1 V32.6" stroke="#cfcfcf" stroke-width="1.4"/><path d="M1,22.0667 H41" stroke="#cfcfcf" stroke-width="1.4"/></g><rect x="9" y="12.5" width="22" height="10.6" fill="#1479d4"/><path d="M31,12.5 L36,17.8 L31,23.1 Z" fill="#1479d4"/><path d="M30,10 L45,25.6 M45,10 L30,25.6" stroke="#e35d5d" stroke-width="1.9" stroke-linecap="round"/></svg>
<div class="u" style="top:195.61px;left:1409.60px;font-size:17px;line-height:17px;color:#f2f2f2;letter-spacing:0.04px;">Delete</div>
<svg style="position:absolute;left:1428.05px;top:223.45px" width="10.7" height="6.7" viewBox="0 0 10.7 6.7"><path d="M2,1.25 L5.35,5.45 L8.7,1.25" fill="none" stroke="#e8e8e8" stroke-width="1.7" stroke-linecap="round" stroke-linejoin="round"/></svg>
<svg style="position:absolute;left:1477px;top:136px" width="46" height="44" viewBox="0 0 46 44"><g transform="translate(2,9)"><rect x="1" y="1" width="40" height="31.6" fill="none" stroke="#cfcfcf" stroke-width="1.6"/><path d="M14.3333,1 V32.6" stroke="#cfcfcf" stroke-width="1.4"/><path d="M1,11.5333 H41" stroke="#cfcfcf" stroke-width="1.4"/><path d="M27.6667,1 V32.6" stroke="#cfcfcf" stroke-width="1.4"/><path d="M1,22.0667 H41" stroke="#cfcfcf" stroke-width="1.4"/></g><rect x="13" y="21.4" width="20" height="10.4" fill="#1479d4"/><path d="M12,3.5 H34 M12,1 V6 M34,1 V6" stroke="#3a9be0" stroke-width="1.5"/></svg>
<div class="u" style="top:193.21px;left:1472.80px;font-size:17px;line-height:17px;color:#f2f2f2;letter-spacing:0.39px;">Format</div>
<svg style="position:absolute;left:1494.15px;top:221.65px" width="10.7" height="6.7" viewBox="0 0 10.7 6.7"><path d="M2,1.25 L5.35,5.45 L8.7,1.25" fill="none" stroke="#e8e8e8" stroke-width="1.7" stroke-linecap="round" stroke-linejoin="round"/></svg>
<div class="u" style="top:255.27px;left:1417.90px;font-size:14.8px;line-height:14.8px;color:#f2f2f2;letter-spacing:-0.06px;">Cells</div>
<svg style="position:absolute;left:1564px;top:140px" width="22" height="24" viewBox="0 0 22 24"><path d="M18.5,6 V2.4 H2.8 L11.2,11.8 L2.8,21.4 H18.5 V17.6" fill="none" stroke="#dcdcdc" stroke-width="1.6" stroke-linejoin="miter"/></svg>
<div class="u" style="top:145.02px;left:1593.60px;font-size:16.4px;line-height:16.4px;color:#f2f2f2;letter-spacing:0.73px;">AutoSum</div>
<svg style="position:absolute;left:1693.65px;top:149.65px" width="10.7" height="6.7" viewBox="0 0 10.7 6.7"><path d="M2,1.25 L5.35,5.45 L8.7,1.25" fill="none" stroke="#e8e8e8" stroke-width="1.7" stroke-linecap="round" stroke-linejoin="round"/></svg>
<svg style="position:absolute;left:1562px;top:179px" width="26" height="24" viewBox="0 0 26 24"><rect x="1.2" y="2" width="23" height="20" fill="none" stroke="#dcdcdc" stroke-width="1.6"/><path d="M1.2,5.6 H24" stroke="#dcdcdc" stroke-width="1.4"/><path d="M12.7,8.5 V18 M8.6,14.2 L12.7,18.3 L16.8,14.2" fill="none" stroke="#3a9be0" stroke-width="1.7" stroke-linecap="round" stroke-linejoin="round"/></svg>
<div class="u" style="top:183.72px;left:1593.60px;font-size:16.4px;line-height:16.4px;color:#f2f2f2;letter-spacing:-0.21px;">Fill</div>
<svg style="position:absolute;left:1618.85px;top:187.05px" width="10.7" height="6.7" viewBox="0 0 10.7 6.7"><path d="M2,1.25 L5.35,5.45 L8.7,1.25" fill="none" stroke="#e8e8e8" stroke-width="1.7" stroke-linecap="round" stroke-linejoin="round"/></svg>
<svg style="position:absolute;left:1562px;top:217px" width="26" height="26" viewBox="0 0 26 26"><path d="M2,14.5 L14.5,2.5 L23.5,11 L11.5,23.5 Z" fill="none" stroke="#c76ad0" stroke-width="1.6" stroke-linejoin="round"/><path d="M2,14.5 L7,9.8 L16,19 L11.5,23.5 Z" fill="#c352c9"/></svg>
<div class="u" style="top:222.82px;left:1593.60px;font-size:16.4px;line-height:16.4px;color:#f2f2f2;letter-spacing:-0.12px;">Clear</div>
<svg style="position:absolute;left:1636.95px;top:225.95px" width="10.7" height="6.7" viewBox="0 0 10.7 6.7"><path d="M2,1.25 L5.35,5.45 L8.7,1.25" fill="none" stroke="#e8e8e8" stroke-width="1.7" stroke-linecap="round" stroke-linejoin="round"/></svg>
<svg style="position:absolute;left:1728px;top:139px" width="48" height="46" viewBox="0 0 48 46"><text x="1" y="24" font-family="Liberation Sans" font-size="24" fill="#3a9be0">A</text><text x="1.5" y="43.5" font-family="Liberation Sans" font-size="23" fill="#dcdcdc">Z</text>
<path d="M20,12.6 H43.6 V15.6 L35.4,24.6 V34 H29 V24.6 L20,15.6 Z" fill="none" stroke="#dcdcdc" stroke-width="1.6" stroke-linejoin="round"/></svg>
<div class="u" style="top:193.21px;left:1725.40px;font-size:17px;line-height:17px;color:#f2f2f2;letter-spacing:0.68px;">Sort &amp;</div>
<div class="u" style="top:217.31px;left:1724.60px;font-size:17px;line-height:17px;color:#f2f2f2;letter-spacing:-0.05px;">Filter</div>
<svg style="position:absolute;left:1766.85px;top:221.05px" width="10.7" height="6.7" viewBox="0 0 10.7 6.7"><path d="M2,1.25 L5.35,5.45 L8.7,1.25" fill="none" stroke="#e8e8e8" stroke-width="1.7" stroke-linecap="round" stroke-linejoin="round"/></svg>
<svg style="position:absolute;left:1796px;top:138px" width="50" height="50" viewBox="0 0 50 50"><circle cx="30" cy="18.5" r="15" fill="none" stroke="#dcdcdc" stroke-width="1.7"/><path d="M19.4,29.4 L2.8,46.4" stroke="#dcdcdc" stroke-width="1.8" stroke-linecap="round"/></svg>
<div class="u" style="top:193.21px;left:1795.60px;font-size:17px;line-height:17px;color:#f2f2f2;letter-spacing:0.54px;">Find &amp;</div>
<div class="u" style="top:217.31px;left:1790.80px;font-size:17px;line-height:17px;color:#f2f2f2;letter-spacing:-0.37px;">Select</div>
<svg style="position:absolute;left:1841.15px;top:221.05px" width="10.7" height="6.7" viewBox="0 0 10.7 6.7"><path d="M2,1.25 L5.35,5.45 L8.7,1.25" fill="none" stroke="#e8e8e8" stroke-width="1.7" stroke-linecap="round" stroke-linejoin="round"/></svg>
<div class="u" style="top:255.37px;left:1682.50px;font-size:14.8px;line-height:14.8px;color:#f2f2f2;letter-spacing:0.35px;">Editing</div>
<svg style="position:absolute;left:1894px;top:140px" width="46" height="45" viewBox="0 0 46 45"><rect x="1.4" y="1.4" width="41.6" height="41.6" fill="#6e2c14" stroke="#d9572a" stroke-width="1.8"/>
<g fill="#292929" stroke="#d9572a" stroke-width="1.7"><rect x="6.4" y="6.4" width="13.4" height="13.4"/><rect x="24.6" y="6.4" width="13.4" height="13.4"/><rect x="6.4" y="24.6" width="13.4" height="13.4"/><rect x="24.6" y="24.6" width="13.4" height="13.4"/></g></svg>
<div class="u" style="top:193.21px;left:1885.40px;font-size:17px;line-height:17px;color:#f2f2f2;letter-spacing:0.57px;">Add-ins</div>
<div class="u" style="top:255.37px;left:1888.30px;font-size:14.8px;line-height:14.8px;color:#f2f2f2;letter-spacing:0.42px;">Add-ins</div>
<svg style="position:absolute;left:1987px;top:140px" width="46" height="46" viewBox="0 0 46 46"><rect x="1.4" y="1.4" width="41" height="40" fill="none" stroke="#bdbdbd" stroke-width="1.6"/><rect x="1.4" y="1.4" width="41" height="5.4" fill="#8c8c8c"/>
<path d="M1.4,19 H42 M1.4,30.5 H42 M14.5,30.5 V41 M28.5,30.5 V41" stroke="#bdbdbd" stroke-width="1.4"/>
<circle cx="21" cy="19.6" r="12.6" fill="#292929" stroke="#e0e0e0" stroke-width="1.7"/><path d="M30,28.6 L42,41" stroke="#e0e0e0" stroke-width="1.9" stroke-linecap="round"/>
<rect x="13.5" y="18" width="4.4" height="7.4" fill="#8c8c8c"/><rect x="18.6" y="12.4" width="4.4" height="13" fill="none" stroke="#e0e0e0" stroke-width="1.2"/><rect x="23.8" y="15.4" width="4.2" height="10" fill="#3a9be0"/></svg>
<div class="u" style="top:193.21px;left:1980.60px;font-size:17px;line-height:17px;color:#f2f2f2;letter-spacing:0.02px;">Analyze</div>
<div class="u" style="top:217.31px;left:1992.60px;font-size:17px;line-height:17px;color:#f2f2f2;letter-spacing:-0.08px;">Data</div>
<div style="left:2156.3px;top:142.6px;width:112px;height:112px;background:#fff;border-radius:56px"></div>
<div style="left:2182px;top:173.5px;width:60.8px;height:52.2px;background:#5d63ea;"></div>
<div style="left:2190.3px;top:181.6px;width:19.3px;height:14px;background:#fff;"></div>
<div style="left:2215.6px;top:181.6px;width:19.2px;height:14px;background:#fff;"></div>
<div style="left:2190.3px;top:203.4px;width:19.3px;height:14.2px;background:#fff;"></div>
<div style="left:2215.6px;top:203.4px;width:19.2px;height:14.2px;background:#fff;"></div>
<div class="L" style="top:156.46px;left:2293.36px;font-weight:bold;font-size:48.6px;line-height:48.6px;color:#fff;transform:scaleX(0.751);-webkit-text-stroke:1.8px #fff;">F</div>
<div class="L" style="top:156.46px;left:2318.22px;font-weight:bold;font-size:48.6px;line-height:48.6px;color:#fff;transform:scaleX(0.993);-webkit-text-stroke:1.1px #fff;">I</div>
<div class="L" style="top:156.46px;left:2332.09px;font-weight:bold;font-size:48.6px;line-height:48.6px;color:#fff;transform:scaleX(1.034);-webkit-text-stroke:1.1px #fff;">N</div>
<div class="L" style="top:156.46px;left:2367.44px;font-weight:bold;font-size:48.6px;line-height:48.6px;color:#fff;transform:scaleX(1.140);-webkit-text-stroke:1.1px #fff;">M</div>
<div class="L" style="top:156.46px;left:2450.09px;font-weight:bold;font-size:48.6px;line-height:48.6px;color:#fff;transform:scaleX(1.034);-webkit-text-stroke:1.1px #fff;">D</div>
<div class="L" style="top:156.46px;left:2488.78px;font-weight:bold;font-size:48.6px;line-height:48.6px;color:#fff;transform:scaleX(0.715);-webkit-text-stroke:1.8px #fff;">E</div>
<div class="L" style="top:156.46px;left:2516.00px;font-weight:bold;font-size:48.6px;line-height:48.6px;color:#fff;transform:scaleX(0.678);-webkit-text-stroke:1.8px #fff;">L</div>
<div class="L" style="top:156.46px;left:2533.94px;font-weight:bold;font-size:48.6px;line-height:48.6px;color:#fff;transform:scaleX(1.005);-webkit-text-stroke:1.1px #fff;">S</div>
<div class="L" style="top:156.46px;left:2569.26px;font-weight:bold;font-size:48.6px;line-height:48.6px;color:#fff;transform:scaleX(0.690);-webkit-text-stroke:1.8px #fff;">L</div>
<div class="L" style="top:156.46px;left:2584.98px;font-weight:bold;font-size:48.6px;line-height:48.6px;color:#fff;transform:scaleX(1.259);-webkit-text-stroke:1.1px #fff;">A</div>
<div class="L" style="top:156.46px;left:2629.34px;font-weight:bold;font-size:48.6px;line-height:48.6px;color:#fff;transform:scaleX(0.663);-webkit-text-stroke:1.8px #fff;">B</div>
<svg style="position:absolute;left:2410px;top:150px" width="42" height="52" viewBox="0 0 42 52"><circle cx="21.3" cy="30.2" r="13.4" fill="none" stroke="#fff" stroke-width="8.2"/><path d="M21.3,9 V31" stroke="#292929" stroke-width="13.4" stroke-linecap="round"/><path d="M21.3,9.4 V27.4" stroke="#fff" stroke-width="8.6" stroke-linecap="round"/></svg>
<div class="L" style="top:208.42px;left:2294.53px;font-size:34px;line-height:34px;color:#fff;transform:scaleX(1.158);-webkit-text-stroke:0.5px #fff;">T</div>
<div class="L" style="top:208.42px;left:2336.72px;font-size:34px;line-height:34px;color:#fff;transform:scaleX(1.119);-webkit-text-stroke:0.5px #fff;">e</div>
<div class="L" style="top:208.42px;left:2379.83px;font-size:34px;line-height:34px;color:#fff;transform:scaleX(1.229);-webkit-text-stroke:0.5px #fff;">m</div>
<div class="L" style="top:208.42px;left:2436.19px;font-size:34px;line-height:34px;color:#fff;transform:scaleX(1.161);-webkit-text-stroke:0.5px #fff;">p</div>
<div class="L" style="top:208.42px;left:2481.75px;font-size:34px;line-height:34px;color:#fff;transform:scaleX(1.000);-webkit-text-stroke:0.5px #fff;">l</div>
<div class="L" style="top:208.42px;left:2510.31px;font-size:34px;line-height:34px;color:#fff;transform:scaleX(0.994);-webkit-text-stroke:0.5px #fff;">a</div>
<div class="L" style="top:208.42px;left:2555.44px;font-size:34px;line-height:34px;color:#fff;transform:scaleX(1.128);-webkit-text-stroke:0.5px #fff;">t</div>
<div class="L" style="top:208.42px;left:2587.84px;font-size:34px;line-height:34px;color:#fff;transform:scaleX(1.238);-webkit-text-stroke:0.5px #fff;">e</div>
<div class="L" style="top:208.42px;left:2633.28px;font-size:34px;line-height:34px;color:#fff;transform:scaleX(1.119);-webkit-text-stroke:0.5px #fff;">s</div>
<svg style="position:absolute;left:2848px;top:251px" width="18" height="12" viewBox="0 0 18 12"><path d="M2.5,2.5 L9,9 L15.5,2.5" fill="none" stroke="#e8e8e8" stroke-width="1.7" stroke-linecap="round" stroke-linejoin="round"/></svg>
<div style="left:2861px;top:278px;width:29.5px;height:1393px;background:#171717;border-radius:12px 12px 12px 12px"></div>
<div style="left:2870.2px;top:304px;width:11.6px;height:645px;background:#9e9e9e;border-radius:5.8px"></div>
<svg style="position:absolute;left:2869px;top:284px" width="16" height="13" viewBox="0 0 16 13"><path d="M8,1.8 L14.4,11 H1.6 Z" fill="#9c9c9c" stroke="#9c9c9c" stroke-width="1" stroke-linejoin="round"/></svg>
<svg style="position:absolute;left:2868px;top:1653px" width="16" height="13" viewBox="0 0 16 13"><path d="M8,11.2 L14.4,2 H1.6 Z" fill="#9c9c9c" stroke="#9c9c9c" stroke-width="1" stroke-linejoin="round"/></svg>
<div style="left:11px;top:1717.6px;width:2880px;height:1.2px;background:#2c2c2c;"></div>
<svg style="position:absolute;left:44px;top:1684px" width="14" height="18" viewBox="0 0 14 18"><path d="M11,2 L3,9 L11,16" fill="none" stroke="#8c8c8c" stroke-width="1.7" stroke-linecap="round" stroke-linejoin="round"/></svg>
<svg style="position:absolute;left:93px;top:1684px" width="14" height="18" viewBox="0 0 14 18"><path d="M3,2 L11,9 L3,16" fill="none" stroke="#d8d8d8" stroke-width="1.7" stroke-linecap="round" stroke-linejoin="round"/></svg>
<div class="u" style="top:1685.23px;left:190.40px;font-size:20.4px;line-height:20.4px;color:#f2f2f2;letter-spacing:0.12px;">Contents</div>
<div style="left:299px;top:1676.3px;width:128px;height:35.6px;background:#fff066;border-radius:8px"></div>
<div class="u" style="top:1685.23px;left:314.00px;font-size:20.4px;line-height:20.4px;color:#151515;letter-spacing:-0.02px;">Dashboard</div>
<div style="left:291.9px;top:1680.5px;width:1.1px;height:26.8px;background:#474747;"></div>
<div style="left:440.1px;top:1676.3px;width:105.6px;height:35.6px;background:#fff066;border-radius:8px"></div>
<div class="u" style="top:1685.23px;left:455.30px;font-size:20.4px;line-height:20.4px;color:#151515;letter-spacing:-0.67px;">Revenue</div>
<div style="left:433px;top:1680.5px;width:1.1px;height:26.8px;background:#474747;"></div>
<div style="left:559.3px;top:1676.3px;width:157.8px;height:35.6px;background:#fff066;border-radius:8px"></div>
<div class="u" style="top:1685.23px;left:571.40px;font-size:20.4px;line-height:20.4px;color:#151515;letter-spacing:-0.74px;">COGS &amp; OPEX</div>
<div style="left:552.2px;top:1680.5px;width:1.1px;height:26.8px;background:#474747;"></div>
<div style="left:730.1px;top:1676.3px;width:88.9px;height:35.6px;background:#fff066;border-radius:8px"></div>
<div class="u" style="top:1685.23px;left:743.50px;font-size:20.4px;line-height:20.4px;color:#151515;letter-spacing:-0.04px;">Payroll</div>
<div style="left:723px;top:1680.5px;width:1.1px;height:26.8px;background:#474747;"></div>
<div style="left:832px;top:1676.3px;width:87.2px;height:35.6px;background:#fff066;border-radius:8px"></div>
<div class="u" style="top:1685.23px;left:845.00px;font-size:20.4px;line-height:20.4px;color:#151515;letter-spacing:-1.67px;">CAPEX</div>
<div style="left:824.9px;top:1680.5px;width:1.1px;height:26.8px;background:#474747;"></div>
<div style="left:932.2px;top:1676.3px;width:112.4px;height:35.6px;background:#fff066;border-radius:8px"></div>
<div class="u" style="top:1685.23px;left:945.50px;font-size:20.4px;line-height:20.4px;color:#151515;letter-spacing:-0.16px;">CapTable</div>
<div style="left:925.1px;top:1680.5px;width:1.1px;height:26.8px;background:#474747;"></div>
<div style="left:1058px;top:1676.3px;width:90.1px;height:35.6px;background:#fff066;border-radius:8px"></div>
<div class="u" style="top:1685.23px;left:1071.00px;font-size:20.4px;line-height:20.4px;color:#151515;letter-spacing:0.03px;">Capital</div>
<div style="left:1050.9px;top:1680.5px;width:1.1px;height:26.8px;background:#474747;"></div>
<div style="left:1161.1px;top:1676.3px;width:41.8px;height:35.6px;background:#4bb1e7;border-radius:8px"></div>
<div class="u" style="top:1685.23px;left:1174.50px;font-size:20.4px;line-height:20.4px;color:#151515;letter-spacing:-1.89px;">IS</div>
<div style="left:1154px;top:1680.5px;width:1.1px;height:26.8px;background:#474747;"></div>
<div style="left:1215.9px;top:1676.3px;width:48.3px;height:35.6px;background:#4bb1e7;border-radius:8px"></div>
<div class="u" style="top:1685.23px;left:1229.30px;font-size:20.4px;line-height:20.4px;color:#151515;letter-spacing:-2.45px;">CF</div>
<div style="left:1208.8px;top:1680.5px;width:1.1px;height:26.8px;background:#474747;"></div>
<div style="left:1277.2px;top:1676.3px;width:47.8px;height:35.6px;background:#4bb1e7;border-radius:8px"></div>
<div class="u" style="top:1685.23px;left:1291.00px;font-size:20.4px;line-height:20.4px;color:#151515;letter-spacing:-2.86px;">BS</div>
<div style="left:1270.1px;top:1680.5px;width:1.1px;height:26.8px;background:#474747;"></div>
<div style="left:1338px;top:1676.3px;width:115.3px;height:35.6px;background:#4bb1e7;border-radius:8px"></div>
<div class="u" style="top:1685.23px;left:1351.00px;font-size:20.4px;line-height:20.4px;color:#151515;letter-spacing:-0.38px;">Scenarios</div>
<div style="left:1330.9px;top:1680.5px;width:1.1px;height:26.8px;background:#474747;"></div>
<div style="left:1466.3px;top:1676.3px;width:114.9px;height:35.6px;background:#4bb1e7;border-radius:8px"></div>
<div class="u" style="top:1685.23px;left:1478.90px;font-size:20.4px;line-height:20.4px;color:#151515;letter-spacing:0.51px;">Valuation</div>
<div style="left:1459.2px;top:1680.5px;width:1.1px;height:26.8px;background:#474747;"></div>
<div style="left:1720.8px;top:1676.3px;width:48.2px;height:35.6px;background:#4bb1e7;border-radius:8px"></div>
<div class="u" style="top:1685.23px;left:1734.60px;font-size:20.4px;line-height:20.4px;color:#151515;letter-spacing:-2.91px;">BE</div>
<div style="left:1713.7px;top:1680.5px;width:1.1px;height:26.8px;background:#474747;"></div>
<div style="left:1782px;top:1676.3px;width:72.3px;height:35.6px;background:#4bb1e7;border-radius:8px"></div>
<div class="u" style="top:1685.23px;left:1795.50px;font-size:20.4px;line-height:20.4px;color:#151515;letter-spacing:-1.30px;">ROIC</div>
<div style="left:1774.9px;top:1680.5px;width:1.1px;height:26.8px;background:#474747;"></div>
<div style="left:1867.3px;top:1676.3px;width:84.7px;height:35.6px;background:#4bb1e7;border-radius:8px"></div>
<div class="u" style="top:1685.23px;left:1879.90px;font-size:20.4px;line-height:20.4px;color:#151515;letter-spacing:-0.28px;">Charts</div>
<div style="left:1860.2px;top:1680.5px;width:1.1px;height:26.8px;background:#474747;"></div>
<div style="left:1965px;top:1676.3px;width:63.9px;height:35.6px;background:#4bb1e7;border-radius:8px"></div>
<div class="u" style="top:1685.23px;left:1978.50px;font-size:20.4px;line-height:20.4px;color:#151515;letter-spacing:-1.42px;">KPIs</div>
<div style="left:1957.9px;top:1680.5px;width:1.1px;height:26.8px;background:#474747;"></div>
<div style="left:1587.2px;top:1680.5px;width:1.1px;height:26.8px;background:#474747;"></div>
<div style="left:1713.8px;top:1680.5px;width:1.1px;height:26.8px;background:#474747;"></div>
<div style="left:2034.9px;top:1680.5px;width:1.1px;height:26.8px;background:#474747;"></div>
<div style="left:2041.9px;top:1676.3px;width:30.2px;height:35.6px;background:#4bb1e7;border-radius:8px 0 0 8px;overflow:hidden"><div style="left:12.6px;top:8.9314px;font-size:20.4px;line-height:20.4px;color:#151515">Sc</div></div>
<div style="left:1593.8px;top:1670.3px;width:114.4px;height:42.4px;background:linear-gradient(#ffffff,#f2f6fa 55%,#d7e3ee);border-radius:0 0 9px 9px"></div>
<div class="u" style="top:1680.73px;left:1605.90px;font-size:20.4px;line-height:20.4px;color:#151515;letter-spacing:0.46px;-webkit-text-stroke:.45px #151515;">Summary</div>
<div style="left:1605.9px;top:1704px;width:90.5px;height:3.6px;background:#1e8a4a;"></div>
<div style="left:2087px;top:1691.4px;width:4.2px;height:4.2px;border-radius:2.1px;background:#e0e0e0"></div>
<div style="left:2092.9px;top:1691.4px;width:4.2px;height:4.2px;border-radius:2.1px;background:#e0e0e0"></div>
<div style="left:2098.8px;top:1691.4px;width:4.2px;height:4.2px;border-radius:2.1px;background:#e0e0e0"></div>
<div style="left:2135px;top:1692.6px;width:17px;height:1.6px;background:#e0e0e0;"></div>
<div style="left:2142.7px;top:1684.8px;width:1.6px;height:17.2px;background:#e0e0e0;"></div>
<div style="left:2189.8px;top:1685.4px;width:3.6px;height:3.6px;border-radius:1.8px;background:#e0e0e0"></div>
<div style="left:2189.8px;top:1692px;width:3.6px;height:3.6px;border-radius:1.8px;background:#e0e0e0"></div>
<div style="left:2189.8px;top:1698.6px;width:3.6px;height:3.6px;border-radius:1.8px;background:#e0e0e0"></div>
<div style="left:2217px;top:1680.2px;width:643px;height:26px;background:#1c1c1c;border-radius:13px"></div>
<div style="left:2241.6px;top:1687px;width:556px;height:12.4px;background:#9c9c9c;border-radius:6.2px"></div>
<svg style="position:absolute;left:2223px;top:1686px" width="13" height="15" viewBox="0 0 13 15"><path d="M10.6,1.8 V13.2 L2,7.5 Z" fill="#9c9c9c" stroke="#9c9c9c" stroke-width="1" stroke-linejoin="round"/></svg>
<svg style="position:absolute;left:2841px;top:1686px" width="13" height="15" viewBox="0 0 13 15"><path d="M2.4,1.8 V13.2 L11,7.5 Z" fill="#9c9c9c" stroke="#9c9c9c" stroke-width="1" stroke-linejoin="round"/></svg>
<div class="u" style="top:1727.36px;left:27.40px;font-size:15.4px;line-height:15.4px;color:#f2f2f2;letter-spacing:-0.42px;">Ready</div>
<svg style="position:absolute;left:98px;top:1724px" width="26" height="23" viewBox="0 0 26 23"><path d="M14,19.4 H2 V2.4 H22.6 V8" fill="none" stroke="#e6e6e6" stroke-width="1.5"/><path d="M2,5.8 H22.6 M5,10 H12 M5,14 H10" stroke="#e6e6e6" stroke-width="1.4"/><circle cx="17.6" cy="15.6" r="5.6" fill="none" stroke="#e6e6e6" stroke-width="1.5"/><circle cx="17.6" cy="15.6" r="2.4" fill="#e6e6e6"/></svg>
<svg style="position:absolute;left:145px;top:1722px" width="26" height="26" viewBox="0 0 26 26"><circle cx="10.5" cy="4.6" r="2.5" fill="none" stroke="#e6e6e6" stroke-width="1.4"/><path d="M2,8.4 C6,10.4 15,10.4 19,8.4 M7.4,10 V15.5 L4.2,23.4 M13.6,10 V15.5 L15,18" fill="none" stroke="#e6e6e6" stroke-width="1.5" stroke-linecap="round" stroke-linejoin="round"/><path d="M14.6,16 L22.6,24 M22.6,16 L14.6,24" stroke="#e6e6e6" stroke-width="1.5" stroke-linecap="round"/></svg>
<div class="u" style="top:1727.36px;left:173.40px;font-size:15.4px;line-height:15.4px;color:#f2f2f2;font-weight:bold;letter-spacing:0.13px;">Accessibility: Investigate</div>
<div style="left:2445.3px;top:1719px;width:59.7px;height:32px;background:#232323;"></div>
<svg style="position:absolute;left:2463.5px;top:1723.4px" width="22" height="22" viewBox="0 0 22 22"><rect x="1.5" y="1.5" width="18.4" height="18.4" fill="none" stroke="#fafafa" stroke-width="2"/><path d="M7.6,1.4 V20 M13.8,1.4 V20 M1.4,7.6 H20 M1.4,13.8 H20" stroke="#fafafa" stroke-width="1.9"/></svg>
<svg style="position:absolute;left:2523px;top:1723px" width="24" height="23" viewBox="0 0 24 23"><rect x="2.3" y="1.9" width="19.6" height="18.6" fill="none" stroke="#fafafa" stroke-width="1.9"/><rect x="6.6" y="5.8" width="11" height="11" fill="none" stroke="#fafafa" stroke-width="1.5"/><path d="M9,9 H15.4 M9,11.4 H15.4 M9,13.8 H15.4" stroke="#fafafa" stroke-width="1.2"/></svg>
<svg style="position:absolute;left:2583px;top:1723px" width="24" height="23" viewBox="0 0 24 23"><rect x="2" y="1.9" width="19.8" height="18.6" fill="none" stroke="#fafafa" stroke-width="1.9"/><path d="M9.2,1.9 V13.2 M16,1.9 V13.2 H2" fill="none" stroke="#fafafa" stroke-width="1.8"/></svg>
<div style="left:2633px;top:1734.4px;width:12px;height:1.4px;background:#d0d0d0;"></div>
<div style="left:2653px;top:1734.2px;width:148px;height:1.8px;background:#a0a0a0;"></div>
<div style="left:2720px;top:1726px;width:8px;height:17px;background:#b4b4b4;"></div>
<div style="left:2809px;top:1734.4px;width:11.4px;height:1.4px;background:#d0d0d0;"></div>
<div style="left:2814px;top:1729.4px;width:1.4px;height:11.4px;background:#d0d0d0;"></div>
<div class="u" style="top:1727.36px;left:2839.40px;font-size:15.4px;line-height:15.4px;color:#f2f2f2;letter-spacing:-0.07px;">95%</div>
</body></html>
